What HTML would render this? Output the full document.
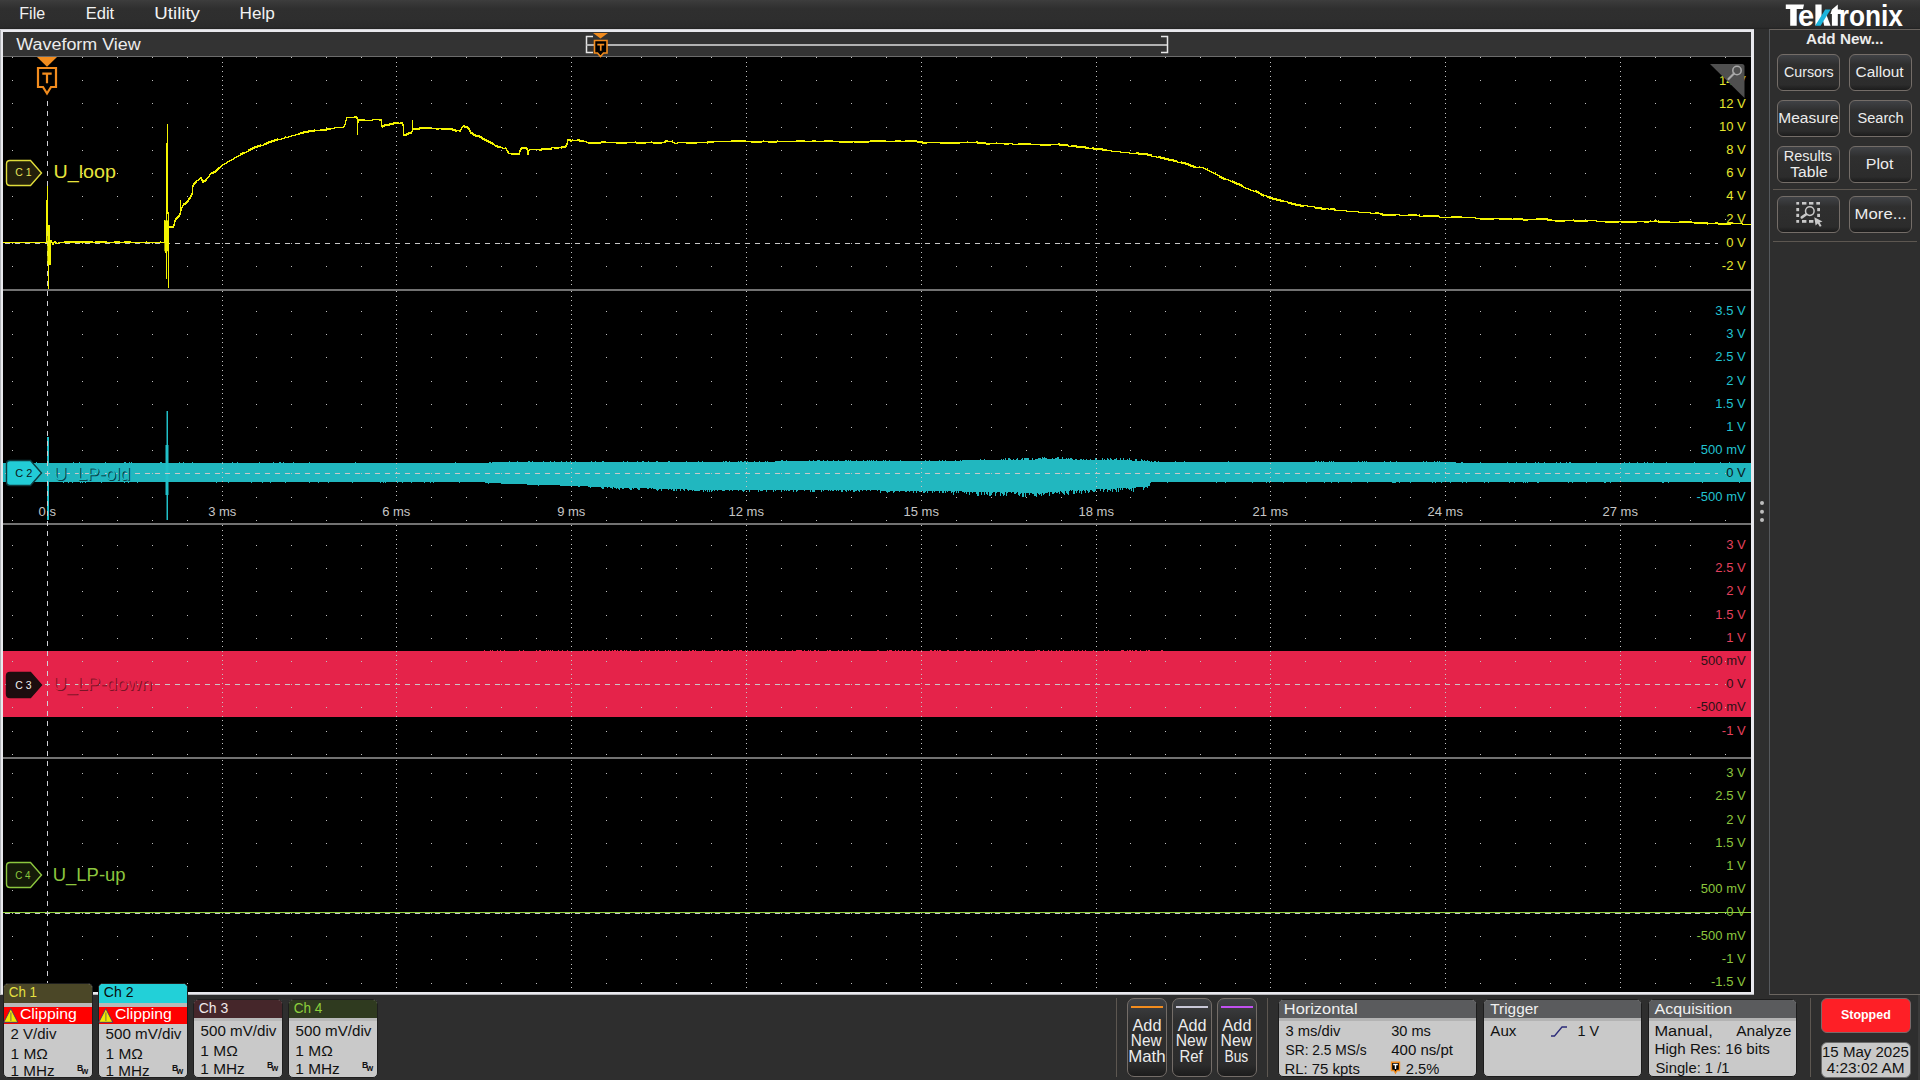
<!DOCTYPE html>
<html><head><meta charset="utf-8"><title>Waveform View</title>
<style>
html,body{margin:0;padding:0;}
body{width:1920px;height:1080px;position:relative;overflow:hidden;background:#2e2e2e;font-family:"Liberation Sans", sans-serif;}
.a{position:absolute;box-sizing:border-box;}
.btn{position:absolute;box-sizing:border-box;border:1.2px solid #746d68;border-radius:6px;background:linear-gradient(#404246 0%,#2f2f2f 28%,#2c2c2c 85%,#1c1c1c 100%);}
svg{position:absolute;left:0;top:0;}
</style></head><body>

<div class="a" style="left:0;top:0;width:1920px;height:29px;background:linear-gradient(#3d3d3d 0px,#363636 4px,#2f2f2f 9px,#2e2e2e 20px,#2b2b2b 27px,#222 29px)"></div>
<div class="a" style="left:0;top:29px;width:1754px;height:966px;background:#e9e9ee"></div>
<div class="a" style="left:0;top:29px;width:1px;height:966px;background:#b2b4b8"></div>
<div class="a" style="left:0;top:994px;width:1754px;height:1px;background:#b6b6ba"></div>
<div class="a" style="left:0;top:29px;width:1754px;height:1px;background:#d6d6da"></div>
<div class="a" style="left:3px;top:32px;width:1748px;height:24px;background:#333333"></div>
<div class="a" style="left:3px;top:56px;width:1748px;height:1px;background:#6c6c6c"></div>
<svg width="1920" height="1080" viewBox="0 0 1920 1080"><rect x="3" y="57" width="1748" height="935" fill="#000"/><clipPath id="gc"><rect x="3" y="57" width="1748" height="935"/></clipPath><g clip-path="url(#gc)"><rect x="3" y="289" width="1748" height="2" fill="#727272"/><rect x="3" y="523" width="1748" height="2" fill="#727272"/><rect x="3" y="757" width="1748" height="2" fill="#727272"/><path d="M3 463h1v19h-1zM4 463h1v19h-1zM5 463h1v19h-1zM6 463h1v19h-1zM7 463h1v19h-1zM8 463h1v19h-1zM9 463h1v19h-1zM10 462h1v20h-1zM11 463h1v19h-1zM12 463h1v19h-1zM13 462h1v20h-1zM14 462h1v20h-1zM15 463h1v19h-1zM16 463h1v20h-1zM17 463h1v19h-1zM18 463h1v19h-1zM19 463h1v19h-1zM20 463h1v19h-1zM21 463h1v19h-1zM22 463h1v19h-1zM23 463h1v19h-1zM24 463h1v19h-1zM25 463h1v19h-1zM26 463h1v19h-1zM27 463h1v19h-1zM28 463h1v20h-1zM29 463h1v19h-1zM30 463h1v19h-1zM31 463h1v20h-1zM32 463h1v19h-1zM33 463h1v19h-1zM34 463h1v19h-1zM35 463h1v19h-1zM36 462h1v20h-1zM37 463h1v19h-1zM38 463h1v19h-1zM39 463h1v19h-1zM40 463h1v19h-1zM41 463h1v19h-1zM42 463h1v19h-1zM43 463h1v19h-1zM44 463h1v19h-1zM45 463h1v19h-1zM46 463h1v19h-1zM47 463h1v19h-1zM48 463h1v19h-1zM49 463h1v19h-1zM50 463h1v19h-1zM51 463h1v19h-1zM52 463h1v19h-1zM53 463h1v19h-1zM54 463h1v19h-1zM55 463h1v19h-1zM56 463h1v19h-1zM57 463h1v19h-1zM58 463h1v19h-1zM59 463h1v19h-1zM60 463h1v19h-1zM61 463h1v19h-1zM62 463h1v19h-1zM63 463h1v20h-1zM64 463h1v19h-1zM65 463h1v19h-1zM66 463h1v19h-1zM67 463h1v19h-1zM68 463h1v20h-1zM69 463h1v19h-1zM70 463h1v19h-1zM71 463h1v19h-1zM72 463h1v20h-1zM73 462h1v20h-1zM74 463h1v19h-1zM75 463h1v19h-1zM76 463h1v19h-1zM77 463h1v19h-1zM78 463h1v19h-1zM79 462h1v20h-1zM80 463h1v20h-1zM81 463h1v19h-1zM82 463h1v20h-1zM83 463h1v19h-1zM84 463h1v19h-1zM85 463h1v20h-1zM86 463h1v19h-1zM87 463h1v19h-1zM88 463h1v19h-1zM89 463h1v19h-1zM90 463h1v19h-1zM91 463h1v19h-1zM92 463h1v19h-1zM93 463h1v19h-1zM94 463h1v19h-1zM95 463h1v19h-1zM96 463h1v19h-1zM97 463h1v19h-1zM98 463h1v19h-1zM99 463h1v19h-1zM100 463h1v19h-1zM101 463h1v20h-1zM102 463h1v19h-1zM103 463h1v19h-1zM104 463h1v19h-1zM105 462h1v20h-1zM106 463h1v19h-1zM107 463h1v19h-1zM108 463h1v19h-1zM109 463h1v19h-1zM110 463h1v19h-1zM111 463h1v19h-1zM112 463h1v19h-1zM113 463h1v19h-1zM114 463h1v19h-1zM115 463h1v19h-1zM116 463h1v19h-1zM117 463h1v19h-1zM118 463h1v19h-1zM119 463h1v19h-1zM120 463h1v19h-1zM121 463h1v19h-1zM122 463h1v19h-1zM123 463h1v19h-1zM124 462h1v21h-1zM125 462h1v20h-1zM126 463h1v19h-1zM127 463h1v19h-1zM128 463h1v20h-1zM129 462h1v20h-1zM130 463h1v19h-1zM131 462h1v20h-1zM132 463h1v19h-1zM133 463h1v19h-1zM134 463h1v19h-1zM135 463h1v19h-1zM136 463h1v19h-1zM137 463h1v20h-1zM138 463h1v19h-1zM139 463h1v19h-1zM140 463h1v19h-1zM141 463h1v19h-1zM142 463h1v19h-1zM143 463h1v19h-1zM144 463h1v19h-1zM145 463h1v19h-1zM146 463h1v19h-1zM147 463h1v19h-1zM148 463h1v19h-1zM149 463h1v19h-1zM150 463h1v19h-1zM151 463h1v19h-1zM152 463h1v19h-1zM153 463h1v19h-1zM154 463h1v19h-1zM155 463h1v19h-1zM156 463h1v19h-1zM157 463h1v19h-1zM158 463h1v19h-1zM159 463h1v19h-1zM160 462h1v20h-1zM161 462h1v20h-1zM162 463h1v19h-1zM163 463h1v19h-1zM164 463h1v19h-1zM165 463h1v19h-1zM166 463h1v19h-1zM167 463h1v19h-1zM168 463h1v19h-1zM169 463h1v19h-1zM170 463h1v19h-1zM171 463h1v19h-1zM172 463h1v19h-1zM173 463h1v19h-1zM174 463h1v19h-1zM175 463h1v19h-1zM176 463h1v19h-1zM177 463h1v19h-1zM178 463h1v19h-1zM179 462h1v20h-1zM180 463h1v19h-1zM181 463h1v19h-1zM182 463h1v19h-1zM183 462h1v20h-1zM184 463h1v19h-1zM185 463h1v19h-1zM186 463h1v19h-1zM187 463h1v19h-1zM188 463h1v19h-1zM189 463h1v19h-1zM190 463h1v19h-1zM191 463h1v19h-1zM192 462h1v20h-1zM193 463h1v19h-1zM194 463h1v19h-1zM195 463h1v19h-1zM196 463h1v19h-1zM197 463h1v19h-1zM198 463h1v19h-1zM199 463h1v19h-1zM200 463h1v19h-1zM201 463h1v19h-1zM202 463h1v19h-1zM203 463h1v19h-1zM204 463h1v19h-1zM205 463h1v19h-1zM206 463h1v19h-1zM207 463h1v19h-1zM208 463h1v19h-1zM209 463h1v19h-1zM210 463h1v19h-1zM211 463h1v19h-1zM212 463h1v19h-1zM213 463h1v19h-1zM214 463h1v19h-1zM215 463h1v19h-1zM216 463h1v20h-1zM217 463h1v19h-1zM218 463h1v19h-1zM219 463h1v19h-1zM220 463h1v19h-1zM221 463h1v19h-1zM222 462h1v20h-1zM223 463h1v19h-1zM224 463h1v19h-1zM225 463h1v19h-1zM226 463h1v19h-1zM227 463h1v19h-1zM228 463h1v20h-1zM229 463h1v19h-1zM230 463h1v19h-1zM231 463h1v19h-1zM232 462h1v20h-1zM233 463h1v19h-1zM234 463h1v19h-1zM235 463h1v19h-1zM236 463h1v19h-1zM237 462h1v20h-1zM238 463h1v19h-1zM239 463h1v19h-1zM240 463h1v19h-1zM241 463h1v19h-1zM242 463h1v19h-1zM243 463h1v19h-1zM244 463h1v19h-1zM245 463h1v19h-1zM246 463h1v19h-1zM247 463h1v19h-1zM248 463h1v19h-1zM249 463h1v19h-1zM250 463h1v19h-1zM251 463h1v20h-1zM252 463h1v19h-1zM253 463h1v19h-1zM254 463h1v19h-1zM255 463h1v19h-1zM256 463h1v19h-1zM257 463h1v19h-1zM258 463h1v19h-1zM259 462h1v20h-1zM260 463h1v19h-1zM261 463h1v19h-1zM262 463h1v20h-1zM263 463h1v19h-1zM264 463h1v19h-1zM265 463h1v19h-1zM266 463h1v19h-1zM267 463h1v19h-1zM268 463h1v19h-1zM269 463h1v19h-1zM270 463h1v20h-1zM271 463h1v19h-1zM272 463h1v19h-1zM273 462h1v20h-1zM274 463h1v19h-1zM275 463h1v19h-1zM276 463h1v19h-1zM277 463h1v19h-1zM278 463h1v19h-1zM279 462h1v20h-1zM280 462h1v20h-1zM281 463h1v19h-1zM282 463h1v19h-1zM283 462h1v20h-1zM284 463h1v19h-1zM285 463h1v20h-1zM286 463h1v19h-1zM287 463h1v19h-1zM288 463h1v19h-1zM289 463h1v19h-1zM290 463h1v19h-1zM291 463h1v19h-1zM292 463h1v19h-1zM293 462h1v20h-1zM294 463h1v19h-1zM295 463h1v19h-1zM296 463h1v19h-1zM297 463h1v19h-1zM298 463h1v19h-1zM299 463h1v19h-1zM300 463h1v19h-1zM301 463h1v19h-1zM302 463h1v19h-1zM303 463h1v19h-1zM304 463h1v19h-1zM305 463h1v19h-1zM306 463h1v19h-1zM307 463h1v19h-1zM308 463h1v19h-1zM309 462h1v21h-1zM310 463h1v19h-1zM311 463h1v19h-1zM312 463h1v19h-1zM313 463h1v19h-1zM314 463h1v19h-1zM315 463h1v19h-1zM316 463h1v19h-1zM317 463h1v19h-1zM318 463h1v20h-1zM319 463h1v19h-1zM320 463h1v19h-1zM321 463h1v19h-1zM322 463h1v19h-1zM323 463h1v19h-1zM324 463h1v19h-1zM325 463h1v19h-1zM326 463h1v19h-1zM327 463h1v19h-1zM328 463h1v20h-1zM329 463h1v19h-1zM330 463h1v19h-1zM331 463h1v19h-1zM332 463h1v19h-1zM333 463h1v19h-1zM334 463h1v19h-1zM335 463h1v19h-1zM336 463h1v19h-1zM337 463h1v19h-1zM338 463h1v19h-1zM339 463h1v19h-1zM340 463h1v19h-1zM341 463h1v19h-1zM342 463h1v19h-1zM343 463h1v19h-1zM344 463h1v19h-1zM345 463h1v19h-1zM346 463h1v19h-1zM347 463h1v19h-1zM348 463h1v19h-1zM349 463h1v19h-1zM350 463h1v19h-1zM351 463h1v19h-1zM352 463h1v20h-1zM353 463h1v19h-1zM354 463h1v19h-1zM355 462h1v20h-1zM356 463h1v19h-1zM357 463h1v19h-1zM358 463h1v19h-1zM359 463h1v19h-1zM360 463h1v19h-1zM361 463h1v19h-1zM362 463h1v19h-1zM363 463h1v19h-1zM364 463h1v19h-1zM365 463h1v19h-1zM366 463h1v19h-1zM367 463h1v19h-1zM368 463h1v19h-1zM369 463h1v19h-1zM370 463h1v19h-1zM371 463h1v19h-1zM372 463h1v19h-1zM373 463h1v19h-1zM374 463h1v19h-1zM375 463h1v19h-1zM376 463h1v19h-1zM377 463h1v19h-1zM378 463h1v19h-1zM379 463h1v19h-1zM380 463h1v20h-1zM381 463h1v19h-1zM382 463h1v19h-1zM383 463h1v20h-1zM384 463h1v19h-1zM385 463h1v20h-1zM386 463h1v19h-1zM387 463h1v19h-1zM388 463h1v19h-1zM389 463h1v19h-1zM390 463h1v19h-1zM391 463h1v19h-1zM392 463h1v19h-1zM393 463h1v19h-1zM394 463h1v19h-1zM395 463h1v19h-1zM396 463h1v19h-1zM397 463h1v20h-1zM398 463h1v19h-1zM399 463h1v19h-1zM400 463h1v19h-1zM401 463h1v19h-1zM402 463h1v20h-1zM403 463h1v19h-1zM404 463h1v19h-1zM405 463h1v19h-1zM406 463h1v19h-1zM407 463h1v19h-1zM408 463h1v19h-1zM409 463h1v19h-1zM410 463h1v19h-1zM411 463h1v20h-1zM412 463h1v19h-1zM413 463h1v19h-1zM414 463h1v19h-1zM415 463h1v19h-1zM416 463h1v19h-1zM417 463h1v19h-1zM418 463h1v19h-1zM419 463h1v19h-1zM420 463h1v19h-1zM421 463h1v19h-1zM422 463h1v19h-1zM423 463h1v19h-1zM424 463h1v20h-1zM425 463h1v19h-1zM426 463h1v19h-1zM427 463h1v19h-1zM428 463h1v19h-1zM429 463h1v19h-1zM430 463h1v20h-1zM431 463h1v19h-1zM432 463h1v19h-1zM433 463h1v20h-1zM434 463h1v19h-1zM435 463h1v19h-1zM436 463h1v19h-1zM437 463h1v19h-1zM438 463h1v19h-1zM439 463h1v19h-1zM440 463h1v19h-1zM441 463h1v19h-1zM442 463h1v19h-1zM443 463h1v19h-1zM444 463h1v19h-1zM445 463h1v19h-1zM446 463h1v19h-1zM447 463h1v19h-1zM448 463h1v19h-1zM449 463h1v19h-1zM450 463h1v19h-1zM451 463h1v19h-1zM452 463h1v19h-1zM453 463h1v19h-1zM454 463h1v19h-1zM455 462h1v20h-1zM456 463h1v19h-1zM457 463h1v19h-1zM458 463h1v19h-1zM459 463h1v20h-1zM460 463h1v19h-1zM461 463h1v19h-1zM462 463h1v19h-1zM463 463h1v19h-1zM464 463h1v19h-1zM465 463h1v19h-1zM466 463h1v19h-1zM467 463h1v19h-1zM468 463h1v19h-1zM469 463h1v19h-1zM470 463h1v19h-1zM471 463h1v19h-1zM472 463h1v19h-1zM473 463h1v19h-1zM474 463h1v19h-1zM475 463h1v19h-1zM476 463h1v19h-1zM477 463h1v19h-1zM478 463h1v19h-1zM479 463h1v19h-1zM480 463h1v19h-1zM481 463h1v19h-1zM482 463h1v19h-1zM483 463h1v19h-1zM484 463h1v19h-1zM485 463h1v20h-1zM486 463h1v20h-1zM487 463h1v20h-1zM488 463h1v21h-1zM489 462h1v21h-1zM490 462h1v21h-1zM491 463h1v20h-1zM492 462h1v21h-1zM493 462h1v21h-1zM494 462h1v21h-1zM495 462h1v21h-1zM496 462h1v21h-1zM497 462h1v21h-1zM498 462h1v21h-1zM499 462h1v21h-1zM500 462h1v21h-1zM501 462h1v22h-1zM502 462h1v22h-1zM503 462h1v22h-1zM504 462h1v22h-1zM505 462h1v22h-1zM506 462h1v22h-1zM507 462h1v22h-1zM508 462h1v22h-1zM509 461h1v23h-1zM510 462h1v22h-1zM511 462h1v22h-1zM512 462h1v22h-1zM513 462h1v22h-1zM514 462h1v22h-1zM515 462h1v22h-1zM516 462h1v22h-1zM517 461h1v23h-1zM518 462h1v22h-1zM519 462h1v22h-1zM520 462h1v22h-1zM521 462h1v22h-1zM522 462h1v22h-1zM523 462h1v22h-1zM524 462h1v22h-1zM525 462h1v22h-1zM526 462h1v22h-1zM527 462h1v23h-1zM528 461h1v24h-1zM529 461h1v24h-1zM530 462h1v23h-1zM531 462h1v23h-1zM532 461h1v24h-1zM533 462h1v23h-1zM534 462h1v23h-1zM535 462h1v23h-1zM536 462h1v23h-1zM537 462h1v23h-1zM538 462h1v24h-1zM539 462h1v23h-1zM540 462h1v23h-1zM541 462h1v23h-1zM542 462h1v23h-1zM543 461h1v24h-1zM544 462h1v23h-1zM545 462h1v23h-1zM546 462h1v23h-1zM547 462h1v23h-1zM548 462h1v23h-1zM549 462h1v23h-1zM550 461h1v24h-1zM551 462h1v23h-1zM552 462h1v23h-1zM553 462h1v23h-1zM554 461h1v24h-1zM555 462h1v23h-1zM556 462h1v23h-1zM557 462h1v23h-1zM558 462h1v23h-1zM559 462h1v23h-1zM560 462h1v24h-1zM561 461h1v25h-1zM562 462h1v24h-1zM563 462h1v24h-1zM564 462h1v24h-1zM565 462h1v24h-1zM566 461h1v25h-1zM567 462h1v24h-1zM568 462h1v24h-1zM569 462h1v24h-1zM570 461h1v25h-1zM571 462h1v24h-1zM572 462h1v24h-1zM573 462h1v24h-1zM574 462h1v24h-1zM575 461h1v25h-1zM576 462h1v24h-1zM577 462h1v24h-1zM578 462h1v25h-1zM579 462h1v25h-1zM580 462h1v24h-1zM581 462h1v24h-1zM582 462h1v24h-1zM583 462h1v24h-1zM584 462h1v24h-1zM585 462h1v24h-1zM586 462h1v24h-1zM587 462h1v24h-1zM588 462h1v25h-1zM589 462h1v25h-1zM590 462h1v26h-1zM591 461h1v26h-1zM592 462h1v25h-1zM593 462h1v25h-1zM594 462h1v25h-1zM595 461h1v26h-1zM596 462h1v25h-1zM597 462h1v25h-1zM598 462h1v25h-1zM599 462h1v25h-1zM600 462h1v25h-1zM601 462h1v26h-1zM602 461h1v28h-1zM603 461h1v28h-1zM604 462h1v25h-1zM605 462h1v25h-1zM606 462h1v25h-1zM607 462h1v26h-1zM608 462h1v25h-1zM609 462h1v25h-1zM610 462h1v26h-1zM611 462h1v26h-1zM612 462h1v27h-1zM613 462h1v25h-1zM614 462h1v26h-1zM615 462h1v26h-1zM616 462h1v27h-1zM617 462h1v26h-1zM618 462h1v27h-1zM619 462h1v28h-1zM620 462h1v26h-1zM621 462h1v26h-1zM622 462h1v27h-1zM623 461h1v28h-1zM624 462h1v26h-1zM625 462h1v26h-1zM626 462h1v26h-1zM627 461h1v27h-1zM628 462h1v26h-1zM629 462h1v27h-1zM630 462h1v28h-1zM631 462h1v28h-1zM632 462h1v26h-1zM633 462h1v27h-1zM634 462h1v26h-1zM635 462h1v26h-1zM636 462h1v26h-1zM637 461h1v28h-1zM638 462h1v28h-1zM639 462h1v28h-1zM640 462h1v26h-1zM641 462h1v26h-1zM642 461h1v27h-1zM643 461h1v27h-1zM644 462h1v26h-1zM645 462h1v26h-1zM646 462h1v26h-1zM647 462h1v27h-1zM648 461h1v28h-1zM649 462h1v26h-1zM650 462h1v26h-1zM651 462h1v27h-1zM652 462h1v26h-1zM653 462h1v27h-1zM654 462h1v27h-1zM655 462h1v27h-1zM656 461h1v29h-1zM657 461h1v30h-1zM658 462h1v28h-1zM659 462h1v27h-1zM660 462h1v27h-1zM661 462h1v29h-1zM662 462h1v27h-1zM663 462h1v27h-1zM664 462h1v27h-1zM665 462h1v27h-1zM666 462h1v27h-1zM667 462h1v27h-1zM668 461h1v29h-1zM669 461h1v28h-1zM670 462h1v27h-1zM671 462h1v28h-1zM672 462h1v27h-1zM673 462h1v29h-1zM674 462h1v29h-1zM675 462h1v27h-1zM676 462h1v29h-1zM677 462h1v27h-1zM678 462h1v27h-1zM679 462h1v27h-1zM680 462h1v29h-1zM681 462h1v27h-1zM682 462h1v27h-1zM683 462h1v28h-1zM684 462h1v29h-1zM685 462h1v27h-1zM686 461h1v28h-1zM687 462h1v28h-1zM688 462h1v29h-1zM689 462h1v28h-1zM690 462h1v28h-1zM691 462h1v28h-1zM692 462h1v29h-1zM693 462h1v28h-1zM694 462h1v29h-1zM695 462h1v29h-1zM696 462h1v29h-1zM697 462h1v29h-1zM698 461h1v30h-1zM699 462h1v29h-1zM700 462h1v28h-1zM701 462h1v28h-1zM702 461h1v29h-1zM703 462h1v30h-1zM704 462h1v28h-1zM705 462h1v29h-1zM706 462h1v28h-1zM707 462h1v30h-1zM708 462h1v28h-1zM709 462h1v30h-1zM710 462h1v28h-1zM711 462h1v30h-1zM712 462h1v29h-1zM713 462h1v28h-1zM714 462h1v29h-1zM715 462h1v28h-1zM716 462h1v28h-1zM717 462h1v29h-1zM718 462h1v28h-1zM719 462h1v28h-1zM720 462h1v28h-1zM721 462h1v28h-1zM722 462h1v29h-1zM723 461h1v30h-1zM724 462h1v29h-1zM725 461h1v29h-1zM726 461h1v29h-1zM727 462h1v28h-1zM728 462h1v28h-1zM729 461h1v30h-1zM730 462h1v28h-1zM731 462h1v28h-1zM732 462h1v29h-1zM733 462h1v28h-1zM734 462h1v28h-1zM735 462h1v28h-1zM736 462h1v28h-1zM737 462h1v28h-1zM738 461h1v30h-1zM739 462h1v28h-1zM740 461h1v29h-1zM741 461h1v29h-1zM742 462h1v29h-1zM743 462h1v30h-1zM744 461h1v30h-1zM745 461h1v29h-1zM746 462h1v28h-1zM747 461h1v29h-1zM748 462h1v28h-1zM749 462h1v30h-1zM750 462h1v28h-1zM751 462h1v28h-1zM752 462h1v28h-1zM753 462h1v28h-1zM754 461h1v29h-1zM755 462h1v28h-1zM756 462h1v28h-1zM757 462h1v28h-1zM758 462h1v30h-1zM759 461h1v29h-1zM760 462h1v29h-1zM761 462h1v29h-1zM762 462h1v29h-1zM763 462h1v28h-1zM764 462h1v28h-1zM765 461h1v29h-1zM766 462h1v30h-1zM767 461h1v29h-1zM768 462h1v28h-1zM769 462h1v28h-1zM770 462h1v28h-1zM771 462h1v28h-1zM772 462h1v28h-1zM773 462h1v30h-1zM774 462h1v28h-1zM775 461h1v30h-1zM776 461h1v29h-1zM777 461h1v29h-1zM778 461h1v29h-1zM779 461h1v29h-1zM780 461h1v29h-1zM781 460h1v32h-1zM782 460h1v30h-1zM783 461h1v29h-1zM784 461h1v30h-1zM785 461h1v29h-1zM786 460h1v31h-1zM787 461h1v29h-1zM788 461h1v30h-1zM789 461h1v30h-1zM790 461h1v29h-1zM791 461h1v29h-1zM792 461h1v29h-1zM793 461h1v31h-1zM794 461h1v29h-1zM795 461h1v29h-1zM796 461h1v31h-1zM797 461h1v30h-1zM798 461h1v29h-1zM799 461h1v29h-1zM800 461h1v29h-1zM801 461h1v29h-1zM802 461h1v29h-1zM803 461h1v29h-1zM804 461h1v30h-1zM805 461h1v29h-1zM806 461h1v29h-1zM807 461h1v29h-1zM808 461h1v29h-1zM809 460h1v30h-1zM810 461h1v31h-1zM811 461h1v29h-1zM812 461h1v31h-1zM813 460h1v32h-1zM814 461h1v31h-1zM815 461h1v29h-1zM816 461h1v29h-1zM817 460h1v30h-1zM818 460h1v30h-1zM819 460h1v30h-1zM820 461h1v29h-1zM821 461h1v31h-1zM822 461h1v29h-1zM823 460h1v31h-1zM824 461h1v29h-1zM825 461h1v29h-1zM826 461h1v29h-1zM827 460h1v30h-1zM828 461h1v30h-1zM829 461h1v29h-1zM830 461h1v30h-1zM831 461h1v29h-1zM832 461h1v30h-1zM833 460h1v31h-1zM834 461h1v29h-1zM835 461h1v29h-1zM836 461h1v30h-1zM837 461h1v29h-1zM838 460h1v31h-1zM839 461h1v29h-1zM840 461h1v29h-1zM841 461h1v31h-1zM842 461h1v31h-1zM843 461h1v29h-1zM844 461h1v29h-1zM845 460h1v31h-1zM846 460h1v32h-1zM847 461h1v29h-1zM848 460h1v31h-1zM849 461h1v29h-1zM850 460h1v31h-1zM851 461h1v29h-1zM852 461h1v29h-1zM853 461h1v31h-1zM854 461h1v31h-1zM855 461h1v30h-1zM856 460h1v31h-1zM857 461h1v29h-1zM858 461h1v30h-1zM859 461h1v31h-1zM860 461h1v29h-1zM861 461h1v29h-1zM862 461h1v30h-1zM863 460h1v30h-1zM864 461h1v29h-1zM865 461h1v29h-1zM866 461h1v30h-1zM867 460h1v30h-1zM868 461h1v29h-1zM869 460h1v30h-1zM870 461h1v30h-1zM871 460h1v30h-1zM872 461h1v29h-1zM873 460h1v30h-1zM874 461h1v29h-1zM875 461h1v29h-1zM876 460h1v30h-1zM877 461h1v30h-1zM878 461h1v29h-1zM879 461h1v29h-1zM880 461h1v32h-1zM881 461h1v30h-1zM882 461h1v30h-1zM883 460h1v31h-1zM884 461h1v30h-1zM885 460h1v31h-1zM886 461h1v31h-1zM887 461h1v32h-1zM888 461h1v31h-1zM889 460h1v32h-1zM890 461h1v30h-1zM891 461h1v30h-1zM892 461h1v30h-1zM893 461h1v32h-1zM894 461h1v31h-1zM895 461h1v30h-1zM896 461h1v30h-1zM897 461h1v30h-1zM898 461h1v30h-1zM899 461h1v31h-1zM900 460h1v31h-1zM901 461h1v30h-1zM902 461h1v30h-1zM903 461h1v30h-1zM904 461h1v30h-1zM905 461h1v31h-1zM906 461h1v31h-1zM907 461h1v30h-1zM908 461h1v30h-1zM909 461h1v31h-1zM910 461h1v30h-1zM911 461h1v30h-1zM912 461h1v30h-1zM913 461h1v32h-1zM914 461h1v30h-1zM915 461h1v30h-1zM916 461h1v32h-1zM917 461h1v30h-1zM918 461h1v30h-1zM919 461h1v31h-1zM920 461h1v31h-1zM921 461h1v30h-1zM922 461h1v30h-1zM923 461h1v32h-1zM924 461h1v32h-1zM925 460h1v32h-1zM926 461h1v30h-1zM927 461h1v32h-1zM928 461h1v30h-1zM929 460h1v31h-1zM930 461h1v30h-1zM931 461h1v30h-1zM932 461h1v32h-1zM933 461h1v30h-1zM934 461h1v31h-1zM935 461h1v30h-1zM936 461h1v30h-1zM937 461h1v30h-1zM938 461h1v30h-1zM939 460h1v33h-1zM940 461h1v30h-1zM941 461h1v30h-1zM942 460h1v33h-1zM943 461h1v32h-1zM944 461h1v30h-1zM945 460h1v33h-1zM946 461h1v30h-1zM947 461h1v31h-1zM948 461h1v30h-1zM949 461h1v30h-1zM950 461h1v30h-1zM951 461h1v32h-1zM952 461h1v31h-1zM953 461h1v34h-1zM954 461h1v31h-1zM955 460h1v31h-1zM956 461h1v32h-1zM957 461h1v30h-1zM958 461h1v32h-1zM959 461h1v30h-1zM960 460h1v31h-1zM961 461h1v30h-1zM962 460h1v32h-1zM963 460h1v32h-1zM964 460h1v33h-1zM965 460h1v32h-1zM966 460h1v34h-1zM967 460h1v32h-1zM968 460h1v32h-1zM969 460h1v35h-1zM970 460h1v32h-1zM971 460h1v32h-1zM972 460h1v33h-1zM973 460h1v32h-1zM974 460h1v32h-1zM975 460h1v32h-1zM976 460h1v34h-1zM977 460h1v36h-1zM978 460h1v36h-1zM979 460h1v32h-1zM980 459h1v33h-1zM981 460h1v35h-1zM982 460h1v32h-1zM983 460h1v32h-1zM984 459h1v36h-1zM985 460h1v32h-1zM986 460h1v34h-1zM987 460h1v35h-1zM988 460h1v32h-1zM989 460h1v36h-1zM990 460h1v36h-1zM991 460h1v35h-1zM992 460h1v33h-1zM993 460h1v32h-1zM994 460h1v32h-1zM995 460h1v36h-1zM996 460h1v33h-1zM997 460h1v32h-1zM998 460h1v32h-1zM999 460h1v32h-1zM1000 460h1v36h-1zM1001 459h1v34h-1zM1002 460h1v34h-1zM1003 459h1v37h-1zM1004 460h1v35h-1zM1005 458h1v34h-1zM1006 460h1v36h-1zM1007 460h1v33h-1zM1008 458h1v34h-1zM1009 458h1v34h-1zM1010 459h1v33h-1zM1011 460h1v33h-1zM1012 460h1v32h-1zM1013 459h1v33h-1zM1014 460h1v34h-1zM1015 460h1v34h-1zM1016 459h1v34h-1zM1017 458h1v34h-1zM1018 460h1v35h-1zM1019 460h1v36h-1zM1020 460h1v34h-1zM1021 459h1v34h-1zM1022 458h1v39h-1zM1023 460h1v37h-1zM1024 458h1v35h-1zM1025 458h1v39h-1zM1026 458h1v35h-1zM1027 458h1v35h-1zM1028 458h1v35h-1zM1029 460h1v35h-1zM1030 460h1v33h-1zM1031 460h1v33h-1zM1032 458h1v36h-1zM1033 460h1v34h-1zM1034 460h1v36h-1zM1035 459h1v37h-1zM1036 459h1v38h-1zM1037 459h1v34h-1zM1038 458h1v36h-1zM1039 458h1v37h-1zM1040 458h1v36h-1zM1041 459h1v37h-1zM1042 457h1v36h-1zM1043 458h1v37h-1zM1044 457h1v37h-1zM1045 458h1v35h-1zM1046 458h1v35h-1zM1047 459h1v34h-1zM1048 459h1v33h-1zM1049 459h1v37h-1zM1050 459h1v33h-1zM1051 459h1v33h-1zM1052 458h1v36h-1zM1053 459h1v35h-1zM1054 459h1v34h-1zM1055 458h1v34h-1zM1056 458h1v35h-1zM1057 457h1v36h-1zM1058 457h1v35h-1zM1059 459h1v35h-1zM1060 459h1v32h-1zM1061 459h1v33h-1zM1062 457h1v36h-1zM1063 459h1v35h-1zM1064 459h1v36h-1zM1065 459h1v32h-1zM1066 458h1v35h-1zM1067 459h1v35h-1zM1068 458h1v37h-1zM1069 459h1v32h-1zM1070 458h1v32h-1zM1071 458h1v33h-1zM1072 459h1v31h-1zM1073 460h1v34h-1zM1074 460h1v34h-1zM1075 459h1v32h-1zM1076 459h1v34h-1zM1077 460h1v31h-1zM1078 460h1v30h-1zM1079 460h1v33h-1zM1080 459h1v32h-1zM1081 459h1v35h-1zM1082 460h1v31h-1zM1083 459h1v31h-1zM1084 460h1v31h-1zM1085 460h1v33h-1zM1086 459h1v31h-1zM1087 460h1v31h-1zM1088 460h1v33h-1zM1089 460h1v32h-1zM1090 459h1v31h-1zM1091 460h1v30h-1zM1092 460h1v31h-1zM1093 460h1v32h-1zM1094 460h1v32h-1zM1095 458h1v33h-1zM1096 459h1v30h-1zM1097 460h1v29h-1zM1098 460h1v29h-1zM1099 460h1v29h-1zM1100 460h1v31h-1zM1101 460h1v29h-1zM1102 458h1v31h-1zM1103 460h1v32h-1zM1104 459h1v31h-1zM1105 460h1v29h-1zM1106 460h1v29h-1zM1107 458h1v34h-1zM1108 459h1v31h-1zM1109 460h1v30h-1zM1110 458h1v33h-1zM1111 459h1v30h-1zM1112 460h1v32h-1zM1113 460h1v29h-1zM1114 459h1v30h-1zM1115 459h1v31h-1zM1116 458h1v34h-1zM1117 460h1v28h-1zM1118 460h1v32h-1zM1119 460h1v28h-1zM1120 458h1v32h-1zM1121 460h1v28h-1zM1122 460h1v30h-1zM1123 458h1v30h-1zM1124 460h1v28h-1zM1125 460h1v28h-1zM1126 460h1v29h-1zM1127 459h1v29h-1zM1128 460h1v29h-1zM1129 458h1v32h-1zM1130 460h1v29h-1zM1131 460h1v31h-1zM1132 461h1v27h-1zM1133 461h1v31h-1zM1134 461h1v27h-1zM1135 459h1v29h-1zM1136 459h1v28h-1zM1137 461h1v26h-1zM1138 461h1v26h-1zM1139 461h1v26h-1zM1140 461h1v26h-1zM1141 459h1v28h-1zM1142 460h1v27h-1zM1143 461h1v29h-1zM1144 460h1v28h-1zM1145 461h1v26h-1zM1146 461h1v26h-1zM1147 460h1v28h-1zM1148 461h1v25h-1zM1149 461h1v25h-1zM1150 462h1v21h-1zM1151 461h1v21h-1zM1152 462h1v20h-1zM1153 462h1v20h-1zM1154 461h1v21h-1zM1155 461h1v21h-1zM1156 462h1v20h-1zM1157 462h1v20h-1zM1158 461h1v21h-1zM1159 462h1v20h-1zM1160 462h1v20h-1zM1161 462h1v20h-1zM1162 462h1v20h-1zM1163 462h1v20h-1zM1164 462h1v20h-1zM1165 462h1v20h-1zM1166 462h1v20h-1zM1167 462h1v21h-1zM1168 462h1v20h-1zM1169 462h1v20h-1zM1170 462h1v20h-1zM1171 462h1v20h-1zM1172 462h1v20h-1zM1173 462h1v20h-1zM1174 462h1v20h-1zM1175 461h1v21h-1zM1176 462h1v20h-1zM1177 462h1v20h-1zM1178 462h1v20h-1zM1179 462h1v20h-1zM1180 462h1v20h-1zM1181 462h1v20h-1zM1182 462h1v20h-1zM1183 462h1v20h-1zM1184 461h1v21h-1zM1185 462h1v20h-1zM1186 462h1v20h-1zM1187 462h1v20h-1zM1188 462h1v20h-1zM1189 462h1v20h-1zM1190 462h1v20h-1zM1191 462h1v20h-1zM1192 462h1v20h-1zM1193 462h1v20h-1zM1194 462h1v20h-1zM1195 462h1v20h-1zM1196 462h1v20h-1zM1197 462h1v20h-1zM1198 462h1v20h-1zM1199 462h1v20h-1zM1200 462h1v20h-1zM1201 462h1v20h-1zM1202 462h1v20h-1zM1203 462h1v20h-1zM1204 462h1v20h-1zM1205 462h1v20h-1zM1206 462h1v20h-1zM1207 462h1v20h-1zM1208 462h1v20h-1zM1209 462h1v20h-1zM1210 462h1v20h-1zM1211 462h1v20h-1zM1212 462h1v20h-1zM1213 462h1v20h-1zM1214 462h1v20h-1zM1215 462h1v20h-1zM1216 462h1v21h-1zM1217 462h1v20h-1zM1218 462h1v20h-1zM1219 462h1v20h-1zM1220 462h1v20h-1zM1221 462h1v20h-1zM1222 462h1v20h-1zM1223 462h1v20h-1zM1224 462h1v20h-1zM1225 462h1v21h-1zM1226 462h1v20h-1zM1227 462h1v20h-1zM1228 461h1v21h-1zM1229 462h1v20h-1zM1230 462h1v20h-1zM1231 462h1v20h-1zM1232 462h1v20h-1zM1233 462h1v20h-1zM1234 462h1v20h-1zM1235 462h1v20h-1zM1236 462h1v20h-1zM1237 462h1v20h-1zM1238 462h1v20h-1zM1239 462h1v20h-1zM1240 462h1v20h-1zM1241 462h1v20h-1zM1242 462h1v20h-1zM1243 462h1v20h-1zM1244 462h1v20h-1zM1245 462h1v20h-1zM1246 462h1v20h-1zM1247 462h1v20h-1zM1248 462h1v20h-1zM1249 462h1v20h-1zM1250 462h1v20h-1zM1251 462h1v20h-1zM1252 462h1v21h-1zM1253 462h1v20h-1zM1254 462h1v20h-1zM1255 462h1v20h-1zM1256 462h1v20h-1zM1257 462h1v20h-1zM1258 462h1v20h-1zM1259 462h1v20h-1zM1260 462h1v20h-1zM1261 462h1v20h-1zM1262 462h1v20h-1zM1263 462h1v20h-1zM1264 462h1v20h-1zM1265 462h1v20h-1zM1266 462h1v21h-1zM1267 462h1v20h-1zM1268 462h1v20h-1zM1269 462h1v21h-1zM1270 462h1v20h-1zM1271 462h1v20h-1zM1272 462h1v20h-1zM1273 462h1v20h-1zM1274 462h1v20h-1zM1275 462h1v20h-1zM1276 462h1v20h-1zM1277 462h1v20h-1zM1278 462h1v20h-1zM1279 462h1v20h-1zM1280 462h1v20h-1zM1281 462h1v20h-1zM1282 462h1v20h-1zM1283 462h1v21h-1zM1284 462h1v20h-1zM1285 462h1v20h-1zM1286 462h1v20h-1zM1287 462h1v20h-1zM1288 462h1v20h-1zM1289 462h1v20h-1zM1290 462h1v20h-1zM1291 462h1v20h-1zM1292 462h1v20h-1zM1293 462h1v20h-1zM1294 462h1v20h-1zM1295 462h1v20h-1zM1296 462h1v20h-1zM1297 462h1v20h-1zM1298 462h1v20h-1zM1299 462h1v20h-1zM1300 462h1v20h-1zM1301 462h1v20h-1zM1302 462h1v20h-1zM1303 462h1v20h-1zM1304 462h1v20h-1zM1305 462h1v20h-1zM1306 462h1v21h-1zM1307 462h1v20h-1zM1308 462h1v20h-1zM1309 462h1v20h-1zM1310 462h1v20h-1zM1311 462h1v20h-1zM1312 462h1v20h-1zM1313 462h1v20h-1zM1314 462h1v20h-1zM1315 461h1v21h-1zM1316 461h1v21h-1zM1317 462h1v20h-1zM1318 461h1v21h-1zM1319 462h1v20h-1zM1320 462h1v20h-1zM1321 461h1v21h-1zM1322 462h1v20h-1zM1323 461h1v21h-1zM1324 462h1v21h-1zM1325 462h1v20h-1zM1326 462h1v20h-1zM1327 462h1v20h-1zM1328 462h1v20h-1zM1329 461h1v21h-1zM1330 462h1v20h-1zM1331 461h1v22h-1zM1332 462h1v20h-1zM1333 461h1v21h-1zM1334 462h1v20h-1zM1335 462h1v20h-1zM1336 462h1v20h-1zM1337 462h1v20h-1zM1338 462h1v21h-1zM1339 462h1v20h-1zM1340 462h1v20h-1zM1341 462h1v20h-1zM1342 462h1v20h-1zM1343 462h1v20h-1zM1344 462h1v20h-1zM1345 462h1v20h-1zM1346 462h1v20h-1zM1347 462h1v20h-1zM1348 462h1v20h-1zM1349 462h1v20h-1zM1350 462h1v20h-1zM1351 462h1v21h-1zM1352 462h1v20h-1zM1353 462h1v20h-1zM1354 462h1v20h-1zM1355 462h1v20h-1zM1356 462h1v20h-1zM1357 462h1v20h-1zM1358 461h1v21h-1zM1359 462h1v20h-1zM1360 462h1v20h-1zM1361 462h1v20h-1zM1362 461h1v21h-1zM1363 462h1v20h-1zM1364 461h1v21h-1zM1365 462h1v20h-1zM1366 461h1v21h-1zM1367 462h1v21h-1zM1368 462h1v20h-1zM1369 462h1v20h-1zM1370 462h1v20h-1zM1371 462h1v20h-1zM1372 462h1v20h-1zM1373 462h1v20h-1zM1374 462h1v20h-1zM1375 462h1v20h-1zM1376 462h1v20h-1zM1377 462h1v20h-1zM1378 462h1v20h-1zM1379 462h1v20h-1zM1380 462h1v20h-1zM1381 462h1v20h-1zM1382 462h1v20h-1zM1383 462h1v20h-1zM1384 461h1v21h-1zM1385 462h1v20h-1zM1386 462h1v20h-1zM1387 462h1v20h-1zM1388 462h1v20h-1zM1389 462h1v20h-1zM1390 461h1v21h-1zM1391 462h1v20h-1zM1392 462h1v21h-1zM1393 462h1v21h-1zM1394 462h1v21h-1zM1395 462h1v21h-1zM1396 461h1v21h-1zM1397 462h1v20h-1zM1398 462h1v20h-1zM1399 462h1v21h-1zM1400 462h1v20h-1zM1401 462h1v20h-1zM1402 462h1v20h-1zM1403 462h1v20h-1zM1404 462h1v20h-1zM1405 462h1v20h-1zM1406 462h1v20h-1zM1407 462h1v20h-1zM1408 462h1v20h-1zM1409 462h1v20h-1zM1410 462h1v21h-1zM1411 462h1v20h-1zM1412 462h1v20h-1zM1413 462h1v20h-1zM1414 462h1v20h-1zM1415 462h1v20h-1zM1416 462h1v20h-1zM1417 462h1v20h-1zM1418 462h1v20h-1zM1419 462h1v20h-1zM1420 462h1v20h-1zM1421 462h1v20h-1zM1422 462h1v20h-1zM1423 461h1v21h-1zM1424 462h1v20h-1zM1425 462h1v20h-1zM1426 461h1v21h-1zM1427 462h1v20h-1zM1428 462h1v20h-1zM1429 462h1v20h-1zM1430 462h1v20h-1zM1431 462h1v20h-1zM1432 462h1v21h-1zM1433 462h1v20h-1zM1434 461h1v21h-1zM1435 462h1v21h-1zM1436 462h1v20h-1zM1437 461h1v21h-1zM1438 462h1v20h-1zM1439 461h1v21h-1zM1440 462h1v20h-1zM1441 462h1v21h-1zM1442 462h1v20h-1zM1443 462h1v20h-1zM1444 462h1v20h-1zM1445 462h1v20h-1zM1446 462h1v20h-1zM1447 462h1v20h-1zM1448 462h1v20h-1zM1449 462h1v20h-1zM1450 462h1v21h-1zM1451 462h1v20h-1zM1452 462h1v20h-1zM1453 462h1v20h-1zM1454 462h1v20h-1zM1455 462h1v20h-1zM1456 463h1v19h-1zM1457 463h1v19h-1zM1458 463h1v19h-1zM1459 463h1v19h-1zM1460 463h1v19h-1zM1461 462h1v20h-1zM1462 462h1v21h-1zM1463 463h1v19h-1zM1464 463h1v19h-1zM1465 463h1v19h-1zM1466 463h1v20h-1zM1467 463h1v19h-1zM1468 463h1v19h-1zM1469 463h1v19h-1zM1470 463h1v19h-1zM1471 463h1v19h-1zM1472 463h1v19h-1zM1473 463h1v19h-1zM1474 463h1v19h-1zM1475 463h1v19h-1zM1476 463h1v19h-1zM1477 463h1v19h-1zM1478 463h1v19h-1zM1479 463h1v19h-1zM1480 462h1v20h-1zM1481 463h1v19h-1zM1482 463h1v19h-1zM1483 463h1v19h-1zM1484 463h1v20h-1zM1485 463h1v19h-1zM1486 463h1v19h-1zM1487 463h1v19h-1zM1488 463h1v20h-1zM1489 463h1v19h-1zM1490 463h1v19h-1zM1491 463h1v19h-1zM1492 463h1v19h-1zM1493 463h1v19h-1zM1494 463h1v19h-1zM1495 463h1v19h-1zM1496 463h1v19h-1zM1497 463h1v19h-1zM1498 463h1v19h-1zM1499 463h1v19h-1zM1500 463h1v19h-1zM1501 463h1v19h-1zM1502 463h1v19h-1zM1503 463h1v19h-1zM1504 463h1v19h-1zM1505 463h1v19h-1zM1506 463h1v19h-1zM1507 462h1v20h-1zM1508 463h1v19h-1zM1509 463h1v20h-1zM1510 463h1v19h-1zM1511 463h1v19h-1zM1512 463h1v19h-1zM1513 463h1v19h-1zM1514 463h1v20h-1zM1515 463h1v19h-1zM1516 462h1v20h-1zM1517 463h1v19h-1zM1518 463h1v19h-1zM1519 463h1v19h-1zM1520 463h1v19h-1zM1521 463h1v19h-1zM1522 463h1v19h-1zM1523 463h1v20h-1zM1524 463h1v19h-1zM1525 463h1v20h-1zM1526 462h1v20h-1zM1527 463h1v20h-1zM1528 463h1v19h-1zM1529 463h1v19h-1zM1530 463h1v19h-1zM1531 463h1v19h-1zM1532 463h1v19h-1zM1533 463h1v19h-1zM1534 463h1v19h-1zM1535 462h1v20h-1zM1536 463h1v19h-1zM1537 463h1v20h-1zM1538 462h1v21h-1zM1539 463h1v19h-1zM1540 463h1v19h-1zM1541 463h1v19h-1zM1542 463h1v19h-1zM1543 463h1v19h-1zM1544 462h1v20h-1zM1545 463h1v19h-1zM1546 463h1v19h-1zM1547 463h1v19h-1zM1548 463h1v19h-1zM1549 463h1v19h-1zM1550 463h1v19h-1zM1551 463h1v19h-1zM1552 463h1v19h-1zM1553 463h1v19h-1zM1554 463h1v19h-1zM1555 463h1v19h-1zM1556 462h1v20h-1zM1557 463h1v19h-1zM1558 463h1v19h-1zM1559 463h1v19h-1zM1560 462h1v20h-1zM1561 463h1v19h-1zM1562 463h1v19h-1zM1563 463h1v19h-1zM1564 463h1v19h-1zM1565 463h1v19h-1zM1566 462h1v20h-1zM1567 463h1v19h-1zM1568 463h1v20h-1zM1569 462h1v20h-1zM1570 462h1v20h-1zM1571 463h1v19h-1zM1572 463h1v20h-1zM1573 463h1v19h-1zM1574 463h1v19h-1zM1575 463h1v19h-1zM1576 463h1v19h-1zM1577 463h1v19h-1zM1578 463h1v19h-1zM1579 463h1v19h-1zM1580 463h1v19h-1zM1581 463h1v19h-1zM1582 463h1v19h-1zM1583 463h1v19h-1zM1584 463h1v19h-1zM1585 463h1v19h-1zM1586 463h1v20h-1zM1587 463h1v19h-1zM1588 463h1v19h-1zM1589 463h1v19h-1zM1590 463h1v19h-1zM1591 463h1v19h-1zM1592 463h1v19h-1zM1593 463h1v19h-1zM1594 463h1v19h-1zM1595 463h1v19h-1zM1596 462h1v20h-1zM1597 463h1v19h-1zM1598 463h1v19h-1zM1599 463h1v19h-1zM1600 463h1v19h-1zM1601 463h1v19h-1zM1602 463h1v19h-1zM1603 463h1v19h-1zM1604 463h1v20h-1zM1605 463h1v20h-1zM1606 463h1v19h-1zM1607 463h1v19h-1zM1608 463h1v19h-1zM1609 463h1v19h-1zM1610 463h1v20h-1zM1611 463h1v19h-1zM1612 463h1v19h-1zM1613 463h1v19h-1zM1614 463h1v19h-1zM1615 463h1v19h-1zM1616 463h1v19h-1zM1617 463h1v19h-1zM1618 463h1v19h-1zM1619 463h1v19h-1zM1620 463h1v19h-1zM1621 463h1v19h-1zM1622 463h1v19h-1zM1623 463h1v19h-1zM1624 462h1v20h-1zM1625 463h1v19h-1zM1626 463h1v19h-1zM1627 463h1v19h-1zM1628 463h1v19h-1zM1629 462h1v20h-1zM1630 463h1v19h-1zM1631 463h1v19h-1zM1632 463h1v19h-1zM1633 463h1v19h-1zM1634 463h1v19h-1zM1635 463h1v19h-1zM1636 463h1v19h-1zM1637 462h1v20h-1zM1638 463h1v19h-1zM1639 463h1v19h-1zM1640 463h1v19h-1zM1641 463h1v19h-1zM1642 463h1v19h-1zM1643 463h1v19h-1zM1644 462h1v20h-1zM1645 463h1v19h-1zM1646 463h1v19h-1zM1647 462h1v20h-1zM1648 463h1v19h-1zM1649 463h1v19h-1zM1650 463h1v19h-1zM1651 463h1v19h-1zM1652 463h1v19h-1zM1653 462h1v20h-1zM1654 463h1v19h-1zM1655 463h1v19h-1zM1656 463h1v19h-1zM1657 463h1v19h-1zM1658 463h1v19h-1zM1659 463h1v19h-1zM1660 463h1v19h-1zM1661 463h1v19h-1zM1662 463h1v20h-1zM1663 463h1v20h-1zM1664 463h1v19h-1zM1665 463h1v19h-1zM1666 462h1v20h-1zM1667 463h1v19h-1zM1668 463h1v20h-1zM1669 463h1v19h-1zM1670 463h1v19h-1zM1671 463h1v19h-1zM1672 463h1v19h-1zM1673 463h1v19h-1zM1674 463h1v19h-1zM1675 463h1v19h-1zM1676 463h1v19h-1zM1677 463h1v19h-1zM1678 463h1v19h-1zM1679 463h1v19h-1zM1680 463h1v19h-1zM1681 463h1v19h-1zM1682 463h1v19h-1zM1683 463h1v19h-1zM1684 463h1v19h-1zM1685 463h1v19h-1zM1686 463h1v19h-1zM1687 463h1v19h-1zM1688 463h1v19h-1zM1689 463h1v19h-1zM1690 463h1v19h-1zM1691 463h1v19h-1zM1692 463h1v19h-1zM1693 463h1v19h-1zM1694 462h1v20h-1zM1695 463h1v19h-1zM1696 463h1v19h-1zM1697 463h1v19h-1zM1698 463h1v19h-1zM1699 463h1v19h-1zM1700 463h1v19h-1zM1701 463h1v19h-1zM1702 463h1v20h-1zM1703 463h1v19h-1zM1704 463h1v19h-1zM1705 463h1v19h-1zM1706 463h1v19h-1zM1707 463h1v19h-1zM1708 463h1v19h-1zM1709 463h1v19h-1zM1710 463h1v19h-1zM1711 463h1v19h-1zM1712 463h1v19h-1zM1713 463h1v19h-1zM1714 463h1v19h-1zM1715 463h1v19h-1zM1716 463h1v19h-1zM1717 463h1v19h-1zM1718 463h1v19h-1zM1719 463h1v19h-1zM1720 462h1v20h-1zM1721 463h1v19h-1zM1722 463h1v19h-1zM1723 463h1v19h-1zM1724 463h1v19h-1zM1725 463h1v19h-1zM1726 463h1v19h-1zM1727 463h1v19h-1zM1728 463h1v19h-1zM1729 462h1v20h-1zM1730 463h1v19h-1zM1731 463h1v19h-1zM1732 463h1v19h-1zM1733 463h1v19h-1zM1734 463h1v19h-1zM1735 463h1v19h-1zM1736 463h1v19h-1zM1737 463h1v19h-1zM1738 463h1v19h-1zM1739 463h1v20h-1zM1740 463h1v19h-1zM1741 463h1v19h-1zM1742 463h1v19h-1zM1743 463h1v19h-1zM1744 463h1v19h-1zM1745 463h1v19h-1zM1746 463h1v19h-1zM1747 463h1v19h-1zM1748 463h1v19h-1zM1749 463h1v19h-1zM1750 463h1v19h-1z" fill="#21b7bf" shape-rendering="crispEdges"/><rect x="47" y="437" width="2" height="83" fill="#21c0c8"/><rect x="166.5" y="411" width="1.5" height="109" fill="#21c0c8"/><rect x="165.5" y="445" width="3" height="50" fill="#21c0c8"/><path d="M3 651h1v66h-1zM4 651h1v66h-1zM5 651h1v66h-1zM6 651h1v66h-1zM7 651h1v66h-1zM8 651h1v66h-1zM9 651h1v66h-1zM10 651h1v66h-1zM11 651h1v66h-1zM12 651h1v66h-1zM13 651h1v66h-1zM14 651h1v66h-1zM15 651h1v66h-1zM16 651h1v66h-1zM17 651h1v66h-1zM18 651h1v66h-1zM19 651h1v66h-1zM20 651h1v66h-1zM21 651h1v66h-1zM22 651h1v66h-1zM23 651h1v66h-1zM24 651h1v66h-1zM25 651h1v66h-1zM26 651h1v66h-1zM27 651h1v66h-1zM28 651h1v66h-1zM29 651h1v66h-1zM30 651h1v66h-1zM31 651h1v66h-1zM32 651h1v66h-1zM33 651h1v66h-1zM34 651h1v66h-1zM35 651h1v66h-1zM36 651h1v66h-1zM37 651h1v66h-1zM38 651h1v66h-1zM39 651h1v66h-1zM40 651h1v66h-1zM41 651h1v66h-1zM42 651h1v66h-1zM43 651h1v66h-1zM44 651h1v66h-1zM45 651h1v66h-1zM46 651h1v66h-1zM47 651h1v66h-1zM48 651h1v66h-1zM49 651h1v66h-1zM50 651h1v66h-1zM51 651h1v66h-1zM52 651h1v66h-1zM53 651h1v66h-1zM54 651h1v66h-1zM55 651h1v66h-1zM56 651h1v66h-1zM57 651h1v66h-1zM58 651h1v66h-1zM59 651h1v66h-1zM60 651h1v66h-1zM61 651h1v66h-1zM62 651h1v66h-1zM63 651h1v66h-1zM64 651h1v66h-1zM65 651h1v66h-1zM66 651h1v66h-1zM67 651h1v66h-1zM68 651h1v66h-1zM69 651h1v66h-1zM70 651h1v66h-1zM71 651h1v66h-1zM72 651h1v66h-1zM73 651h1v66h-1zM74 651h1v66h-1zM75 651h1v66h-1zM76 651h1v66h-1zM77 651h1v66h-1zM78 651h1v66h-1zM79 651h1v66h-1zM80 651h1v66h-1zM81 651h1v66h-1zM82 651h1v66h-1zM83 651h1v66h-1zM84 651h1v66h-1zM85 651h1v66h-1zM86 651h1v66h-1zM87 651h1v66h-1zM88 651h1v66h-1zM89 651h1v66h-1zM90 651h1v66h-1zM91 651h1v66h-1zM92 651h1v66h-1zM93 651h1v66h-1zM94 651h1v66h-1zM95 651h1v66h-1zM96 651h1v66h-1zM97 651h1v66h-1zM98 651h1v66h-1zM99 651h1v66h-1zM100 651h1v66h-1zM101 651h1v66h-1zM102 651h1v66h-1zM103 651h1v66h-1zM104 651h1v66h-1zM105 651h1v66h-1zM106 651h1v66h-1zM107 651h1v66h-1zM108 651h1v66h-1zM109 651h1v66h-1zM110 651h1v66h-1zM111 651h1v66h-1zM112 651h1v66h-1zM113 651h1v66h-1zM114 651h1v66h-1zM115 651h1v66h-1zM116 651h1v66h-1zM117 651h1v66h-1zM118 651h1v66h-1zM119 651h1v66h-1zM120 651h1v66h-1zM121 651h1v66h-1zM122 651h1v66h-1zM123 651h1v66h-1zM124 651h1v66h-1zM125 651h1v66h-1zM126 651h1v66h-1zM127 651h1v66h-1zM128 651h1v66h-1zM129 651h1v66h-1zM130 651h1v66h-1zM131 651h1v66h-1zM132 651h1v66h-1zM133 651h1v66h-1zM134 651h1v66h-1zM135 651h1v66h-1zM136 651h1v66h-1zM137 651h1v66h-1zM138 651h1v66h-1zM139 651h1v66h-1zM140 651h1v66h-1zM141 651h1v66h-1zM142 651h1v66h-1zM143 651h1v66h-1zM144 651h1v66h-1zM145 651h1v66h-1zM146 651h1v66h-1zM147 651h1v66h-1zM148 651h1v66h-1zM149 651h1v66h-1zM150 651h1v66h-1zM151 651h1v66h-1zM152 651h1v66h-1zM153 651h1v66h-1zM154 651h1v66h-1zM155 651h1v66h-1zM156 651h1v66h-1zM157 651h1v66h-1zM158 651h1v66h-1zM159 651h1v66h-1zM160 651h1v66h-1zM161 651h1v66h-1zM162 651h1v66h-1zM163 651h1v66h-1zM164 651h1v66h-1zM165 651h1v66h-1zM166 651h1v66h-1zM167 651h1v66h-1zM168 651h1v66h-1zM169 651h1v66h-1zM170 651h1v66h-1zM171 651h1v66h-1zM172 651h1v66h-1zM173 651h1v66h-1zM174 651h1v66h-1zM175 651h1v66h-1zM176 651h1v66h-1zM177 651h1v66h-1zM178 651h1v66h-1zM179 651h1v66h-1zM180 651h1v66h-1zM181 651h1v66h-1zM182 651h1v66h-1zM183 651h1v66h-1zM184 651h1v66h-1zM185 651h1v66h-1zM186 651h1v66h-1zM187 651h1v66h-1zM188 651h1v66h-1zM189 651h1v66h-1zM190 651h1v66h-1zM191 651h1v66h-1zM192 651h1v66h-1zM193 651h1v66h-1zM194 651h1v66h-1zM195 651h1v66h-1zM196 651h1v66h-1zM197 651h1v66h-1zM198 651h1v66h-1zM199 651h1v66h-1zM200 651h1v66h-1zM201 651h1v66h-1zM202 651h1v66h-1zM203 651h1v66h-1zM204 651h1v66h-1zM205 651h1v66h-1zM206 651h1v66h-1zM207 651h1v66h-1zM208 651h1v66h-1zM209 651h1v66h-1zM210 651h1v66h-1zM211 651h1v66h-1zM212 651h1v66h-1zM213 651h1v66h-1zM214 651h1v66h-1zM215 651h1v66h-1zM216 651h1v66h-1zM217 651h1v66h-1zM218 651h1v66h-1zM219 651h1v66h-1zM220 651h1v66h-1zM221 651h1v66h-1zM222 651h1v66h-1zM223 651h1v66h-1zM224 651h1v66h-1zM225 651h1v66h-1zM226 651h1v66h-1zM227 651h1v66h-1zM228 651h1v66h-1zM229 651h1v66h-1zM230 651h1v66h-1zM231 651h1v66h-1zM232 651h1v66h-1zM233 651h1v66h-1zM234 651h1v66h-1zM235 651h1v66h-1zM236 651h1v66h-1zM237 651h1v66h-1zM238 651h1v66h-1zM239 651h1v66h-1zM240 651h1v66h-1zM241 651h1v66h-1zM242 651h1v66h-1zM243 651h1v66h-1zM244 651h1v66h-1zM245 651h1v66h-1zM246 651h1v66h-1zM247 651h1v66h-1zM248 651h1v66h-1zM249 651h1v66h-1zM250 651h1v66h-1zM251 651h1v66h-1zM252 651h1v66h-1zM253 651h1v66h-1zM254 651h1v66h-1zM255 651h1v66h-1zM256 651h1v66h-1zM257 651h1v66h-1zM258 651h1v66h-1zM259 651h1v66h-1zM260 651h1v66h-1zM261 651h1v66h-1zM262 651h1v66h-1zM263 651h1v66h-1zM264 651h1v66h-1zM265 651h1v66h-1zM266 651h1v66h-1zM267 651h1v66h-1zM268 651h1v66h-1zM269 651h1v66h-1zM270 651h1v66h-1zM271 651h1v66h-1zM272 651h1v66h-1zM273 651h1v66h-1zM274 651h1v66h-1zM275 651h1v66h-1zM276 651h1v66h-1zM277 651h1v66h-1zM278 651h1v66h-1zM279 651h1v66h-1zM280 651h1v66h-1zM281 651h1v66h-1zM282 651h1v66h-1zM283 651h1v66h-1zM284 651h1v66h-1zM285 651h1v66h-1zM286 651h1v66h-1zM287 651h1v66h-1zM288 651h1v66h-1zM289 651h1v66h-1zM290 651h1v66h-1zM291 651h1v66h-1zM292 651h1v66h-1zM293 651h1v66h-1zM294 651h1v66h-1zM295 651h1v66h-1zM296 651h1v66h-1zM297 651h1v66h-1zM298 651h1v66h-1zM299 651h1v66h-1zM300 651h1v66h-1zM301 651h1v66h-1zM302 651h1v66h-1zM303 651h1v66h-1zM304 651h1v66h-1zM305 651h1v66h-1zM306 651h1v66h-1zM307 651h1v66h-1zM308 651h1v66h-1zM309 651h1v66h-1zM310 651h1v66h-1zM311 651h1v66h-1zM312 651h1v66h-1zM313 651h1v66h-1zM314 651h1v66h-1zM315 651h1v66h-1zM316 651h1v66h-1zM317 651h1v66h-1zM318 651h1v66h-1zM319 651h1v66h-1zM320 651h1v66h-1zM321 651h1v66h-1zM322 651h1v66h-1zM323 651h1v66h-1zM324 651h1v66h-1zM325 651h1v66h-1zM326 651h1v66h-1zM327 651h1v66h-1zM328 651h1v66h-1zM329 651h1v66h-1zM330 651h1v66h-1zM331 651h1v66h-1zM332 651h1v66h-1zM333 651h1v66h-1zM334 651h1v66h-1zM335 651h1v66h-1zM336 651h1v66h-1zM337 651h1v66h-1zM338 651h1v66h-1zM339 651h1v66h-1zM340 651h1v66h-1zM341 651h1v66h-1zM342 651h1v66h-1zM343 651h1v66h-1zM344 651h1v66h-1zM345 651h1v66h-1zM346 651h1v66h-1zM347 651h1v66h-1zM348 651h1v66h-1zM349 651h1v66h-1zM350 651h1v66h-1zM351 651h1v66h-1zM352 651h1v66h-1zM353 651h1v66h-1zM354 651h1v66h-1zM355 651h1v66h-1zM356 651h1v66h-1zM357 651h1v66h-1zM358 651h1v66h-1zM359 651h1v66h-1zM360 651h1v66h-1zM361 651h1v66h-1zM362 651h1v66h-1zM363 651h1v66h-1zM364 651h1v66h-1zM365 651h1v66h-1zM366 651h1v66h-1zM367 651h1v66h-1zM368 651h1v66h-1zM369 651h1v66h-1zM370 651h1v66h-1zM371 651h1v66h-1zM372 651h1v66h-1zM373 651h1v66h-1zM374 651h1v66h-1zM375 651h1v66h-1zM376 651h1v66h-1zM377 651h1v66h-1zM378 651h1v66h-1zM379 651h1v66h-1zM380 651h1v66h-1zM381 651h1v66h-1zM382 651h1v66h-1zM383 651h1v66h-1zM384 651h1v66h-1zM385 651h1v66h-1zM386 651h1v66h-1zM387 651h1v66h-1zM388 651h1v66h-1zM389 651h1v66h-1zM390 651h1v66h-1zM391 651h1v66h-1zM392 651h1v66h-1zM393 651h1v66h-1zM394 651h1v66h-1zM395 651h1v66h-1zM396 651h1v66h-1zM397 651h1v66h-1zM398 651h1v66h-1zM399 651h1v66h-1zM400 651h1v66h-1zM401 651h1v66h-1zM402 651h1v66h-1zM403 651h1v66h-1zM404 651h1v66h-1zM405 651h1v66h-1zM406 651h1v66h-1zM407 651h1v66h-1zM408 651h1v66h-1zM409 651h1v66h-1zM410 651h1v66h-1zM411 651h1v66h-1zM412 651h1v66h-1zM413 651h1v66h-1zM414 651h1v66h-1zM415 651h1v66h-1zM416 651h1v66h-1zM417 651h1v66h-1zM418 651h1v66h-1zM419 651h1v66h-1zM420 651h1v66h-1zM421 651h1v66h-1zM422 651h1v66h-1zM423 651h1v66h-1zM424 651h1v66h-1zM425 651h1v66h-1zM426 651h1v66h-1zM427 651h1v66h-1zM428 651h1v66h-1zM429 651h1v66h-1zM430 651h1v66h-1zM431 651h1v66h-1zM432 651h1v66h-1zM433 651h1v66h-1zM434 651h1v66h-1zM435 651h1v66h-1zM436 651h1v66h-1zM437 651h1v66h-1zM438 651h1v66h-1zM439 651h1v66h-1zM440 651h1v66h-1zM441 651h1v66h-1zM442 651h1v66h-1zM443 651h1v66h-1zM444 651h1v66h-1zM445 651h1v66h-1zM446 651h1v66h-1zM447 651h1v66h-1zM448 651h1v66h-1zM449 651h1v66h-1zM450 651h1v66h-1zM451 651h1v66h-1zM452 651h1v66h-1zM453 651h1v66h-1zM454 651h1v66h-1zM455 651h1v66h-1zM456 651h1v66h-1zM457 651h1v66h-1zM458 651h1v66h-1zM459 651h1v66h-1zM460 651h1v66h-1zM461 651h1v66h-1zM462 651h1v66h-1zM463 651h1v66h-1zM464 651h1v66h-1zM465 651h1v66h-1zM466 651h1v66h-1zM467 651h1v66h-1zM468 651h1v66h-1zM469 651h1v66h-1zM470 651h1v66h-1zM471 651h1v66h-1zM472 651h1v66h-1zM473 651h1v66h-1zM474 651h1v66h-1zM475 651h1v66h-1zM476 651h1v66h-1zM477 651h1v66h-1zM478 651h1v66h-1zM479 651h1v66h-1zM480 651h1v66h-1zM481 651h1v66h-1zM482 651h1v66h-1zM483 651h1v66h-1zM484 650h1v67h-1zM485 651h1v66h-1zM486 651h1v66h-1zM487 651h1v66h-1zM488 651h1v66h-1zM489 651h1v66h-1zM490 650h1v67h-1zM491 651h1v66h-1zM492 650h1v67h-1zM493 651h1v66h-1zM494 651h1v66h-1zM495 651h1v66h-1zM496 651h1v66h-1zM497 650h1v67h-1zM498 651h1v66h-1zM499 651h1v66h-1zM500 650h1v67h-1zM501 651h1v66h-1zM502 651h1v66h-1zM503 651h1v66h-1zM504 650h1v67h-1zM505 651h1v66h-1zM506 651h1v66h-1zM507 651h1v66h-1zM508 651h1v66h-1zM509 651h1v66h-1zM510 651h1v66h-1zM511 651h1v66h-1zM512 651h1v66h-1zM513 651h1v66h-1zM514 651h1v66h-1zM515 651h1v66h-1zM516 651h1v66h-1zM517 651h1v66h-1zM518 651h1v66h-1zM519 650h1v67h-1zM520 651h1v66h-1zM521 651h1v66h-1zM522 651h1v66h-1zM523 650h1v67h-1zM524 651h1v66h-1zM525 651h1v66h-1zM526 651h1v66h-1zM527 651h1v66h-1zM528 651h1v66h-1zM529 651h1v66h-1zM530 651h1v66h-1zM531 651h1v66h-1zM532 651h1v66h-1zM533 651h1v66h-1zM534 651h1v66h-1zM535 651h1v66h-1zM536 650h1v67h-1zM537 651h1v66h-1zM538 651h1v66h-1zM539 650h1v67h-1zM540 650h1v67h-1zM541 651h1v66h-1zM542 651h1v66h-1zM543 651h1v66h-1zM544 651h1v66h-1zM545 651h1v66h-1zM546 650h1v67h-1zM547 651h1v66h-1zM548 650h1v67h-1zM549 651h1v66h-1zM550 650h1v67h-1zM551 651h1v66h-1zM552 650h1v67h-1zM553 651h1v66h-1zM554 651h1v66h-1zM555 651h1v66h-1zM556 651h1v66h-1zM557 651h1v66h-1zM558 650h1v67h-1zM559 651h1v66h-1zM560 651h1v66h-1zM561 651h1v66h-1zM562 650h1v67h-1zM563 651h1v66h-1zM564 651h1v66h-1zM565 651h1v66h-1zM566 651h1v66h-1zM567 650h1v67h-1zM568 651h1v66h-1zM569 651h1v66h-1zM570 651h1v66h-1zM571 651h1v66h-1zM572 651h1v66h-1zM573 651h1v66h-1zM574 651h1v66h-1zM575 651h1v66h-1zM576 651h1v66h-1zM577 651h1v66h-1zM578 651h1v66h-1zM579 651h1v66h-1zM580 651h1v66h-1zM581 651h1v66h-1zM582 651h1v66h-1zM583 650h1v67h-1zM584 651h1v66h-1zM585 651h1v66h-1zM586 651h1v66h-1zM587 650h1v67h-1zM588 651h1v66h-1zM589 651h1v66h-1zM590 651h1v66h-1zM591 651h1v66h-1zM592 650h1v67h-1zM593 650h1v67h-1zM594 651h1v66h-1zM595 651h1v66h-1zM596 651h1v66h-1zM597 650h1v67h-1zM598 651h1v66h-1zM599 651h1v66h-1zM600 651h1v66h-1zM601 651h1v66h-1zM602 650h1v67h-1zM603 651h1v66h-1zM604 651h1v66h-1zM605 650h1v67h-1zM606 651h1v66h-1zM607 651h1v66h-1zM608 651h1v66h-1zM609 650h1v67h-1zM610 651h1v66h-1zM611 651h1v66h-1zM612 650h1v67h-1zM613 651h1v66h-1zM614 650h1v67h-1zM615 650h1v67h-1zM616 651h1v66h-1zM617 650h1v67h-1zM618 651h1v66h-1zM619 651h1v66h-1zM620 650h1v67h-1zM621 650h1v67h-1zM622 651h1v66h-1zM623 651h1v66h-1zM624 650h1v67h-1zM625 651h1v66h-1zM626 650h1v67h-1zM627 651h1v66h-1zM628 651h1v66h-1zM629 651h1v66h-1zM630 650h1v67h-1zM631 651h1v66h-1zM632 651h1v66h-1zM633 651h1v66h-1zM634 651h1v66h-1zM635 651h1v66h-1zM636 651h1v66h-1zM637 651h1v66h-1zM638 651h1v66h-1zM639 650h1v67h-1zM640 651h1v66h-1zM641 651h1v66h-1zM642 651h1v66h-1zM643 651h1v66h-1zM644 651h1v66h-1zM645 650h1v67h-1zM646 651h1v66h-1zM647 651h1v66h-1zM648 651h1v66h-1zM649 650h1v67h-1zM650 651h1v66h-1zM651 651h1v66h-1zM652 651h1v66h-1zM653 651h1v66h-1zM654 651h1v66h-1zM655 650h1v67h-1zM656 651h1v66h-1zM657 651h1v66h-1zM658 650h1v67h-1zM659 651h1v66h-1zM660 651h1v66h-1zM661 651h1v66h-1zM662 651h1v66h-1zM663 651h1v66h-1zM664 651h1v66h-1zM665 650h1v67h-1zM666 651h1v66h-1zM667 651h1v66h-1zM668 650h1v67h-1zM669 651h1v66h-1zM670 650h1v67h-1zM671 651h1v66h-1zM672 651h1v66h-1zM673 651h1v66h-1zM674 651h1v66h-1zM675 651h1v66h-1zM676 650h1v67h-1zM677 651h1v66h-1zM678 651h1v66h-1zM679 651h1v66h-1zM680 651h1v66h-1zM681 650h1v67h-1zM682 651h1v66h-1zM683 651h1v66h-1zM684 651h1v66h-1zM685 651h1v66h-1zM686 651h1v66h-1zM687 651h1v66h-1zM688 651h1v66h-1zM689 650h1v67h-1zM690 651h1v66h-1zM691 651h1v66h-1zM692 650h1v67h-1zM693 650h1v67h-1zM694 651h1v66h-1zM695 650h1v67h-1zM696 651h1v66h-1zM697 651h1v66h-1zM698 651h1v66h-1zM699 651h1v66h-1zM700 651h1v66h-1zM701 651h1v66h-1zM702 650h1v67h-1zM703 651h1v66h-1zM704 650h1v67h-1zM705 651h1v66h-1zM706 651h1v66h-1zM707 651h1v66h-1zM708 651h1v66h-1zM709 651h1v66h-1zM710 651h1v66h-1zM711 651h1v66h-1zM712 651h1v66h-1zM713 651h1v66h-1zM714 651h1v66h-1zM715 650h1v67h-1zM716 650h1v67h-1zM717 651h1v66h-1zM718 650h1v67h-1zM719 651h1v66h-1zM720 651h1v66h-1zM721 650h1v67h-1zM722 650h1v67h-1zM723 651h1v66h-1zM724 651h1v66h-1zM725 651h1v66h-1zM726 651h1v66h-1zM727 651h1v66h-1zM728 650h1v67h-1zM729 651h1v66h-1zM730 651h1v66h-1zM731 651h1v66h-1zM732 651h1v66h-1zM733 650h1v67h-1zM734 650h1v67h-1zM735 650h1v67h-1zM736 651h1v66h-1zM737 650h1v67h-1zM738 651h1v66h-1zM739 650h1v67h-1zM740 650h1v67h-1zM741 650h1v67h-1zM742 651h1v66h-1zM743 651h1v66h-1zM744 651h1v66h-1zM745 650h1v67h-1zM746 651h1v66h-1zM747 650h1v67h-1zM748 651h1v66h-1zM749 651h1v66h-1zM750 651h1v66h-1zM751 650h1v67h-1zM752 651h1v66h-1zM753 651h1v66h-1zM754 650h1v67h-1zM755 651h1v66h-1zM756 651h1v66h-1zM757 650h1v67h-1zM758 651h1v66h-1zM759 651h1v66h-1zM760 651h1v66h-1zM761 651h1v66h-1zM762 650h1v67h-1zM763 651h1v66h-1zM764 650h1v67h-1zM765 651h1v66h-1zM766 651h1v66h-1zM767 650h1v67h-1zM768 651h1v66h-1zM769 651h1v66h-1zM770 650h1v67h-1zM771 651h1v66h-1zM772 651h1v66h-1zM773 651h1v66h-1zM774 651h1v66h-1zM775 650h1v67h-1zM776 650h1v67h-1zM777 651h1v66h-1zM778 651h1v66h-1zM779 651h1v66h-1zM780 651h1v66h-1zM781 651h1v66h-1zM782 651h1v66h-1zM783 651h1v66h-1zM784 651h1v66h-1zM785 650h1v67h-1zM786 651h1v66h-1zM787 651h1v66h-1zM788 651h1v66h-1zM789 651h1v66h-1zM790 651h1v66h-1zM791 651h1v66h-1zM792 650h1v67h-1zM793 651h1v66h-1zM794 651h1v66h-1zM795 651h1v66h-1zM796 650h1v67h-1zM797 650h1v67h-1zM798 650h1v67h-1zM799 650h1v67h-1zM800 650h1v67h-1zM801 650h1v67h-1zM802 651h1v66h-1zM803 651h1v66h-1zM804 650h1v67h-1zM805 651h1v66h-1zM806 651h1v66h-1zM807 651h1v66h-1zM808 650h1v67h-1zM809 651h1v66h-1zM810 650h1v67h-1zM811 651h1v66h-1zM812 651h1v66h-1zM813 651h1v66h-1zM814 650h1v67h-1zM815 650h1v67h-1zM816 651h1v66h-1zM817 651h1v66h-1zM818 650h1v67h-1zM819 651h1v66h-1zM820 651h1v66h-1zM821 651h1v66h-1zM822 651h1v66h-1zM823 651h1v66h-1zM824 651h1v66h-1zM825 651h1v66h-1zM826 651h1v66h-1zM827 650h1v67h-1zM828 651h1v66h-1zM829 650h1v67h-1zM830 650h1v67h-1zM831 651h1v66h-1zM832 651h1v66h-1zM833 651h1v66h-1zM834 651h1v66h-1zM835 651h1v66h-1zM836 651h1v66h-1zM837 651h1v66h-1zM838 650h1v67h-1zM839 651h1v66h-1zM840 651h1v66h-1zM841 651h1v66h-1zM842 650h1v67h-1zM843 651h1v66h-1zM844 651h1v66h-1zM845 651h1v66h-1zM846 651h1v66h-1zM847 651h1v66h-1zM848 650h1v67h-1zM849 651h1v66h-1zM850 651h1v66h-1zM851 651h1v66h-1zM852 651h1v66h-1zM853 650h1v67h-1zM854 651h1v66h-1zM855 651h1v66h-1zM856 650h1v67h-1zM857 651h1v66h-1zM858 651h1v66h-1zM859 650h1v67h-1zM860 650h1v67h-1zM861 651h1v66h-1zM862 651h1v66h-1zM863 651h1v66h-1zM864 651h1v66h-1zM865 651h1v66h-1zM866 651h1v66h-1zM867 651h1v66h-1zM868 651h1v66h-1zM869 651h1v66h-1zM870 651h1v66h-1zM871 651h1v66h-1zM872 651h1v66h-1zM873 651h1v66h-1zM874 651h1v66h-1zM875 651h1v66h-1zM876 651h1v66h-1zM877 650h1v67h-1zM878 650h1v67h-1zM879 651h1v66h-1zM880 651h1v66h-1zM881 651h1v66h-1zM882 651h1v66h-1zM883 651h1v66h-1zM884 651h1v66h-1zM885 651h1v66h-1zM886 651h1v66h-1zM887 650h1v67h-1zM888 651h1v66h-1zM889 650h1v67h-1zM890 650h1v67h-1zM891 650h1v67h-1zM892 651h1v66h-1zM893 651h1v66h-1zM894 651h1v66h-1zM895 650h1v67h-1zM896 651h1v66h-1zM897 651h1v66h-1zM898 650h1v67h-1zM899 651h1v66h-1zM900 651h1v66h-1zM901 651h1v66h-1zM902 650h1v67h-1zM903 651h1v66h-1zM904 651h1v66h-1zM905 650h1v67h-1zM906 651h1v66h-1zM907 651h1v66h-1zM908 651h1v66h-1zM909 651h1v66h-1zM910 651h1v66h-1zM911 650h1v67h-1zM912 650h1v67h-1zM913 651h1v66h-1zM914 651h1v66h-1zM915 651h1v66h-1zM916 650h1v67h-1zM917 651h1v66h-1zM918 651h1v66h-1zM919 651h1v66h-1zM920 651h1v66h-1zM921 650h1v67h-1zM922 651h1v66h-1zM923 651h1v66h-1zM924 651h1v66h-1zM925 651h1v66h-1zM926 651h1v66h-1zM927 651h1v66h-1zM928 651h1v66h-1zM929 651h1v66h-1zM930 650h1v67h-1zM931 650h1v67h-1zM932 651h1v66h-1zM933 651h1v66h-1zM934 650h1v67h-1zM935 650h1v67h-1zM936 651h1v66h-1zM937 650h1v67h-1zM938 651h1v66h-1zM939 650h1v67h-1zM940 650h1v67h-1zM941 651h1v66h-1zM942 651h1v66h-1zM943 651h1v66h-1zM944 651h1v66h-1zM945 651h1v66h-1zM946 651h1v66h-1zM947 650h1v67h-1zM948 650h1v67h-1zM949 651h1v66h-1zM950 651h1v66h-1zM951 651h1v66h-1zM952 651h1v66h-1zM953 651h1v66h-1zM954 651h1v66h-1zM955 651h1v66h-1zM956 651h1v66h-1zM957 650h1v67h-1zM958 651h1v66h-1zM959 651h1v66h-1zM960 651h1v66h-1zM961 651h1v66h-1zM962 651h1v66h-1zM963 651h1v66h-1zM964 650h1v67h-1zM965 650h1v67h-1zM966 651h1v66h-1zM967 651h1v66h-1zM968 651h1v66h-1zM969 651h1v66h-1zM970 650h1v67h-1zM971 651h1v66h-1zM972 651h1v66h-1zM973 651h1v66h-1zM974 651h1v66h-1zM975 651h1v66h-1zM976 651h1v66h-1zM977 651h1v66h-1zM978 650h1v67h-1zM979 651h1v66h-1zM980 651h1v66h-1zM981 651h1v66h-1zM982 650h1v67h-1zM983 651h1v66h-1zM984 651h1v66h-1zM985 651h1v66h-1zM986 650h1v67h-1zM987 651h1v66h-1zM988 651h1v66h-1zM989 651h1v66h-1zM990 651h1v66h-1zM991 651h1v66h-1zM992 650h1v67h-1zM993 651h1v66h-1zM994 651h1v66h-1zM995 650h1v67h-1zM996 651h1v66h-1zM997 650h1v67h-1zM998 650h1v67h-1zM999 651h1v66h-1zM1000 651h1v66h-1zM1001 651h1v66h-1zM1002 651h1v66h-1zM1003 651h1v66h-1zM1004 651h1v66h-1zM1005 651h1v66h-1zM1006 650h1v67h-1zM1007 651h1v66h-1zM1008 650h1v67h-1zM1009 651h1v66h-1zM1010 651h1v66h-1zM1011 651h1v66h-1zM1012 650h1v67h-1zM1013 650h1v67h-1zM1014 651h1v66h-1zM1015 651h1v66h-1zM1016 651h1v66h-1zM1017 650h1v67h-1zM1018 650h1v67h-1zM1019 651h1v66h-1zM1020 651h1v66h-1zM1021 651h1v66h-1zM1022 651h1v66h-1zM1023 651h1v66h-1zM1024 650h1v67h-1zM1025 651h1v66h-1zM1026 651h1v66h-1zM1027 651h1v66h-1zM1028 651h1v66h-1zM1029 651h1v66h-1zM1030 651h1v66h-1zM1031 651h1v66h-1zM1032 651h1v66h-1zM1033 651h1v66h-1zM1034 651h1v66h-1zM1035 650h1v67h-1zM1036 651h1v66h-1zM1037 650h1v67h-1zM1038 650h1v67h-1zM1039 650h1v67h-1zM1040 651h1v66h-1zM1041 651h1v66h-1zM1042 651h1v66h-1zM1043 650h1v67h-1zM1044 651h1v66h-1zM1045 651h1v66h-1zM1046 651h1v66h-1zM1047 651h1v66h-1zM1048 650h1v67h-1zM1049 651h1v66h-1zM1050 651h1v66h-1zM1051 650h1v67h-1zM1052 651h1v66h-1zM1053 651h1v66h-1zM1054 651h1v66h-1zM1055 651h1v66h-1zM1056 650h1v67h-1zM1057 651h1v66h-1zM1058 651h1v66h-1zM1059 650h1v67h-1zM1060 651h1v66h-1zM1061 651h1v66h-1zM1062 651h1v66h-1zM1063 650h1v67h-1zM1064 651h1v66h-1zM1065 651h1v66h-1zM1066 651h1v66h-1zM1067 651h1v66h-1zM1068 651h1v66h-1zM1069 651h1v66h-1zM1070 651h1v66h-1zM1071 650h1v67h-1zM1072 651h1v66h-1zM1073 650h1v67h-1zM1074 651h1v66h-1zM1075 651h1v66h-1zM1076 651h1v66h-1zM1077 651h1v66h-1zM1078 650h1v67h-1zM1079 651h1v66h-1zM1080 651h1v66h-1zM1081 651h1v66h-1zM1082 650h1v67h-1zM1083 651h1v66h-1zM1084 651h1v66h-1zM1085 650h1v67h-1zM1086 651h1v66h-1zM1087 651h1v66h-1zM1088 651h1v66h-1zM1089 651h1v66h-1zM1090 651h1v66h-1zM1091 651h1v66h-1zM1092 651h1v66h-1zM1093 650h1v67h-1zM1094 651h1v66h-1zM1095 651h1v66h-1zM1096 651h1v66h-1zM1097 651h1v66h-1zM1098 651h1v66h-1zM1099 651h1v66h-1zM1100 651h1v66h-1zM1101 651h1v66h-1zM1102 651h1v66h-1zM1103 651h1v66h-1zM1104 650h1v67h-1zM1105 651h1v66h-1zM1106 651h1v66h-1zM1107 651h1v66h-1zM1108 650h1v67h-1zM1109 651h1v66h-1zM1110 651h1v66h-1zM1111 651h1v66h-1zM1112 651h1v66h-1zM1113 651h1v66h-1zM1114 651h1v66h-1zM1115 651h1v66h-1zM1116 651h1v66h-1zM1117 651h1v66h-1zM1118 651h1v66h-1zM1119 651h1v66h-1zM1120 651h1v66h-1zM1121 650h1v67h-1zM1122 650h1v67h-1zM1123 650h1v67h-1zM1124 651h1v66h-1zM1125 651h1v66h-1zM1126 651h1v66h-1zM1127 650h1v67h-1zM1128 651h1v66h-1zM1129 650h1v67h-1zM1130 650h1v67h-1zM1131 651h1v66h-1zM1132 650h1v67h-1zM1133 651h1v66h-1zM1134 651h1v66h-1zM1135 650h1v67h-1zM1136 650h1v67h-1zM1137 651h1v66h-1zM1138 651h1v66h-1zM1139 651h1v66h-1zM1140 650h1v67h-1zM1141 651h1v66h-1zM1142 651h1v66h-1zM1143 651h1v66h-1zM1144 651h1v66h-1zM1145 651h1v66h-1zM1146 650h1v67h-1zM1147 651h1v66h-1zM1148 650h1v67h-1zM1149 650h1v67h-1zM1150 651h1v66h-1zM1151 651h1v66h-1zM1152 651h1v66h-1zM1153 651h1v66h-1zM1154 651h1v66h-1zM1155 651h1v66h-1zM1156 651h1v66h-1zM1157 651h1v66h-1zM1158 651h1v66h-1zM1159 651h1v66h-1zM1160 651h1v66h-1zM1161 650h1v67h-1zM1162 650h1v67h-1zM1163 651h1v66h-1zM1164 651h1v66h-1zM1165 651h1v66h-1zM1166 651h1v66h-1zM1167 651h1v66h-1zM1168 651h1v66h-1zM1169 651h1v66h-1zM1170 651h1v66h-1zM1171 651h1v66h-1zM1172 651h1v66h-1zM1173 651h1v66h-1zM1174 651h1v66h-1zM1175 651h1v66h-1zM1176 651h1v66h-1zM1177 651h1v66h-1zM1178 651h1v66h-1zM1179 651h1v66h-1zM1180 651h1v66h-1zM1181 651h1v66h-1zM1182 651h1v66h-1zM1183 651h1v66h-1zM1184 651h1v66h-1zM1185 651h1v66h-1zM1186 651h1v66h-1zM1187 651h1v66h-1zM1188 651h1v66h-1zM1189 651h1v66h-1zM1190 651h1v66h-1zM1191 651h1v66h-1zM1192 651h1v66h-1zM1193 651h1v66h-1zM1194 651h1v66h-1zM1195 651h1v66h-1zM1196 651h1v66h-1zM1197 651h1v66h-1zM1198 651h1v66h-1zM1199 651h1v66h-1zM1200 651h1v66h-1zM1201 651h1v66h-1zM1202 651h1v66h-1zM1203 651h1v66h-1zM1204 651h1v66h-1zM1205 651h1v66h-1zM1206 651h1v66h-1zM1207 651h1v66h-1zM1208 651h1v66h-1zM1209 651h1v66h-1zM1210 651h1v66h-1zM1211 651h1v66h-1zM1212 651h1v66h-1zM1213 651h1v66h-1zM1214 651h1v66h-1zM1215 651h1v66h-1zM1216 651h1v66h-1zM1217 651h1v66h-1zM1218 651h1v66h-1zM1219 651h1v66h-1zM1220 651h1v66h-1zM1221 651h1v66h-1zM1222 651h1v66h-1zM1223 651h1v66h-1zM1224 651h1v66h-1zM1225 651h1v66h-1zM1226 651h1v66h-1zM1227 651h1v66h-1zM1228 651h1v66h-1zM1229 651h1v66h-1zM1230 651h1v66h-1zM1231 651h1v66h-1zM1232 651h1v66h-1zM1233 651h1v66h-1zM1234 651h1v66h-1zM1235 651h1v66h-1zM1236 651h1v66h-1zM1237 651h1v66h-1zM1238 651h1v66h-1zM1239 651h1v66h-1zM1240 651h1v66h-1zM1241 651h1v66h-1zM1242 651h1v66h-1zM1243 651h1v66h-1zM1244 651h1v66h-1zM1245 651h1v66h-1zM1246 651h1v66h-1zM1247 651h1v66h-1zM1248 651h1v66h-1zM1249 651h1v66h-1zM1250 651h1v66h-1zM1251 651h1v66h-1zM1252 651h1v66h-1zM1253 651h1v66h-1zM1254 651h1v66h-1zM1255 651h1v66h-1zM1256 651h1v66h-1zM1257 651h1v66h-1zM1258 651h1v66h-1zM1259 651h1v66h-1zM1260 651h1v66h-1zM1261 651h1v66h-1zM1262 651h1v66h-1zM1263 651h1v66h-1zM1264 651h1v66h-1zM1265 651h1v66h-1zM1266 651h1v66h-1zM1267 651h1v66h-1zM1268 651h1v66h-1zM1269 651h1v66h-1zM1270 651h1v66h-1zM1271 651h1v66h-1zM1272 651h1v66h-1zM1273 651h1v66h-1zM1274 651h1v66h-1zM1275 651h1v66h-1zM1276 651h1v66h-1zM1277 651h1v66h-1zM1278 651h1v66h-1zM1279 651h1v66h-1zM1280 651h1v66h-1zM1281 651h1v66h-1zM1282 651h1v66h-1zM1283 651h1v66h-1zM1284 651h1v66h-1zM1285 651h1v66h-1zM1286 651h1v66h-1zM1287 651h1v66h-1zM1288 651h1v66h-1zM1289 651h1v66h-1zM1290 651h1v66h-1zM1291 651h1v66h-1zM1292 651h1v66h-1zM1293 651h1v66h-1zM1294 651h1v66h-1zM1295 651h1v66h-1zM1296 651h1v66h-1zM1297 651h1v66h-1zM1298 651h1v66h-1zM1299 651h1v66h-1zM1300 651h1v66h-1zM1301 651h1v66h-1zM1302 651h1v66h-1zM1303 651h1v66h-1zM1304 651h1v66h-1zM1305 651h1v66h-1zM1306 651h1v66h-1zM1307 651h1v66h-1zM1308 651h1v66h-1zM1309 651h1v66h-1zM1310 651h1v66h-1zM1311 651h1v66h-1zM1312 651h1v66h-1zM1313 651h1v66h-1zM1314 651h1v66h-1zM1315 651h1v66h-1zM1316 651h1v66h-1zM1317 651h1v66h-1zM1318 651h1v66h-1zM1319 651h1v66h-1zM1320 651h1v66h-1zM1321 651h1v66h-1zM1322 651h1v66h-1zM1323 651h1v66h-1zM1324 651h1v66h-1zM1325 651h1v66h-1zM1326 651h1v66h-1zM1327 651h1v66h-1zM1328 651h1v66h-1zM1329 651h1v66h-1zM1330 651h1v66h-1zM1331 651h1v66h-1zM1332 651h1v66h-1zM1333 651h1v66h-1zM1334 651h1v66h-1zM1335 651h1v66h-1zM1336 651h1v66h-1zM1337 651h1v66h-1zM1338 651h1v66h-1zM1339 651h1v66h-1zM1340 651h1v66h-1zM1341 651h1v66h-1zM1342 651h1v66h-1zM1343 651h1v66h-1zM1344 651h1v66h-1zM1345 651h1v66h-1zM1346 651h1v66h-1zM1347 651h1v66h-1zM1348 651h1v66h-1zM1349 651h1v66h-1zM1350 651h1v66h-1zM1351 651h1v66h-1zM1352 651h1v66h-1zM1353 651h1v66h-1zM1354 651h1v66h-1zM1355 651h1v66h-1zM1356 651h1v66h-1zM1357 651h1v66h-1zM1358 651h1v66h-1zM1359 651h1v66h-1zM1360 651h1v66h-1zM1361 651h1v66h-1zM1362 651h1v66h-1zM1363 651h1v66h-1zM1364 651h1v66h-1zM1365 651h1v66h-1zM1366 651h1v66h-1zM1367 651h1v66h-1zM1368 651h1v66h-1zM1369 651h1v66h-1zM1370 651h1v66h-1zM1371 651h1v66h-1zM1372 651h1v66h-1zM1373 651h1v66h-1zM1374 651h1v66h-1zM1375 651h1v66h-1zM1376 651h1v66h-1zM1377 651h1v66h-1zM1378 651h1v66h-1zM1379 651h1v66h-1zM1380 651h1v66h-1zM1381 651h1v66h-1zM1382 651h1v66h-1zM1383 651h1v66h-1zM1384 651h1v66h-1zM1385 651h1v66h-1zM1386 651h1v66h-1zM1387 651h1v66h-1zM1388 651h1v66h-1zM1389 651h1v66h-1zM1390 651h1v66h-1zM1391 651h1v66h-1zM1392 651h1v66h-1zM1393 651h1v66h-1zM1394 651h1v66h-1zM1395 651h1v66h-1zM1396 651h1v66h-1zM1397 651h1v66h-1zM1398 651h1v66h-1zM1399 651h1v66h-1zM1400 651h1v66h-1zM1401 651h1v66h-1zM1402 651h1v66h-1zM1403 651h1v66h-1zM1404 651h1v66h-1zM1405 651h1v66h-1zM1406 651h1v66h-1zM1407 651h1v66h-1zM1408 651h1v66h-1zM1409 651h1v66h-1zM1410 651h1v66h-1zM1411 651h1v66h-1zM1412 651h1v66h-1zM1413 651h1v66h-1zM1414 651h1v66h-1zM1415 651h1v66h-1zM1416 651h1v66h-1zM1417 651h1v66h-1zM1418 651h1v66h-1zM1419 651h1v66h-1zM1420 651h1v66h-1zM1421 651h1v66h-1zM1422 651h1v66h-1zM1423 651h1v66h-1zM1424 651h1v66h-1zM1425 651h1v66h-1zM1426 651h1v66h-1zM1427 651h1v66h-1zM1428 651h1v66h-1zM1429 651h1v66h-1zM1430 651h1v66h-1zM1431 651h1v66h-1zM1432 651h1v66h-1zM1433 651h1v66h-1zM1434 651h1v66h-1zM1435 651h1v66h-1zM1436 651h1v66h-1zM1437 651h1v66h-1zM1438 651h1v66h-1zM1439 651h1v66h-1zM1440 651h1v66h-1zM1441 651h1v66h-1zM1442 651h1v66h-1zM1443 651h1v66h-1zM1444 651h1v66h-1zM1445 651h1v66h-1zM1446 651h1v66h-1zM1447 651h1v66h-1zM1448 651h1v66h-1zM1449 651h1v66h-1zM1450 651h1v66h-1zM1451 651h1v66h-1zM1452 651h1v66h-1zM1453 651h1v66h-1zM1454 651h1v66h-1zM1455 651h1v66h-1zM1456 651h1v66h-1zM1457 651h1v66h-1zM1458 651h1v66h-1zM1459 651h1v66h-1zM1460 651h1v66h-1zM1461 651h1v66h-1zM1462 651h1v66h-1zM1463 651h1v66h-1zM1464 651h1v66h-1zM1465 651h1v66h-1zM1466 651h1v66h-1zM1467 651h1v66h-1zM1468 651h1v66h-1zM1469 651h1v66h-1zM1470 651h1v66h-1zM1471 651h1v66h-1zM1472 651h1v66h-1zM1473 651h1v66h-1zM1474 651h1v66h-1zM1475 651h1v66h-1zM1476 651h1v66h-1zM1477 651h1v66h-1zM1478 651h1v66h-1zM1479 651h1v66h-1zM1480 651h1v66h-1zM1481 651h1v66h-1zM1482 651h1v66h-1zM1483 651h1v66h-1zM1484 651h1v66h-1zM1485 651h1v66h-1zM1486 651h1v66h-1zM1487 651h1v66h-1zM1488 651h1v66h-1zM1489 651h1v66h-1zM1490 651h1v66h-1zM1491 651h1v66h-1zM1492 651h1v66h-1zM1493 651h1v66h-1zM1494 651h1v66h-1zM1495 651h1v66h-1zM1496 651h1v66h-1zM1497 651h1v66h-1zM1498 651h1v66h-1zM1499 651h1v66h-1zM1500 651h1v66h-1zM1501 651h1v66h-1zM1502 651h1v66h-1zM1503 651h1v66h-1zM1504 651h1v66h-1zM1505 651h1v66h-1zM1506 651h1v66h-1zM1507 651h1v66h-1zM1508 651h1v66h-1zM1509 651h1v66h-1zM1510 651h1v66h-1zM1511 651h1v66h-1zM1512 651h1v66h-1zM1513 651h1v66h-1zM1514 651h1v66h-1zM1515 651h1v66h-1zM1516 651h1v66h-1zM1517 651h1v66h-1zM1518 651h1v66h-1zM1519 651h1v66h-1zM1520 651h1v66h-1zM1521 651h1v66h-1zM1522 651h1v66h-1zM1523 651h1v66h-1zM1524 651h1v66h-1zM1525 651h1v66h-1zM1526 651h1v66h-1zM1527 651h1v66h-1zM1528 651h1v66h-1zM1529 651h1v66h-1zM1530 651h1v66h-1zM1531 651h1v66h-1zM1532 651h1v66h-1zM1533 651h1v66h-1zM1534 651h1v66h-1zM1535 651h1v66h-1zM1536 651h1v66h-1zM1537 651h1v66h-1zM1538 651h1v66h-1zM1539 651h1v66h-1zM1540 651h1v66h-1zM1541 651h1v66h-1zM1542 651h1v66h-1zM1543 651h1v66h-1zM1544 651h1v66h-1zM1545 651h1v66h-1zM1546 651h1v66h-1zM1547 651h1v66h-1zM1548 651h1v66h-1zM1549 651h1v66h-1zM1550 651h1v66h-1zM1551 651h1v66h-1zM1552 651h1v66h-1zM1553 651h1v66h-1zM1554 651h1v66h-1zM1555 651h1v66h-1zM1556 651h1v66h-1zM1557 651h1v66h-1zM1558 651h1v66h-1zM1559 651h1v66h-1zM1560 651h1v66h-1zM1561 651h1v66h-1zM1562 651h1v66h-1zM1563 651h1v66h-1zM1564 651h1v66h-1zM1565 651h1v66h-1zM1566 651h1v66h-1zM1567 651h1v66h-1zM1568 651h1v66h-1zM1569 651h1v66h-1zM1570 651h1v66h-1zM1571 651h1v66h-1zM1572 651h1v66h-1zM1573 651h1v66h-1zM1574 651h1v66h-1zM1575 651h1v66h-1zM1576 651h1v66h-1zM1577 651h1v66h-1zM1578 651h1v66h-1zM1579 651h1v66h-1zM1580 651h1v66h-1zM1581 651h1v66h-1zM1582 651h1v66h-1zM1583 651h1v66h-1zM1584 651h1v66h-1zM1585 651h1v66h-1zM1586 651h1v66h-1zM1587 651h1v66h-1zM1588 651h1v66h-1zM1589 651h1v66h-1zM1590 651h1v66h-1zM1591 651h1v66h-1zM1592 651h1v66h-1zM1593 651h1v66h-1zM1594 651h1v66h-1zM1595 651h1v66h-1zM1596 651h1v66h-1zM1597 651h1v66h-1zM1598 651h1v66h-1zM1599 651h1v66h-1zM1600 651h1v66h-1zM1601 651h1v66h-1zM1602 651h1v66h-1zM1603 651h1v66h-1zM1604 651h1v66h-1zM1605 651h1v66h-1zM1606 651h1v66h-1zM1607 651h1v66h-1zM1608 651h1v66h-1zM1609 651h1v66h-1zM1610 651h1v66h-1zM1611 651h1v66h-1zM1612 651h1v66h-1zM1613 651h1v66h-1zM1614 651h1v66h-1zM1615 651h1v66h-1zM1616 651h1v66h-1zM1617 651h1v66h-1zM1618 651h1v66h-1zM1619 651h1v66h-1zM1620 651h1v66h-1zM1621 651h1v66h-1zM1622 651h1v66h-1zM1623 651h1v66h-1zM1624 651h1v66h-1zM1625 651h1v66h-1zM1626 651h1v66h-1zM1627 651h1v66h-1zM1628 651h1v66h-1zM1629 651h1v66h-1zM1630 651h1v66h-1zM1631 651h1v66h-1zM1632 651h1v66h-1zM1633 651h1v66h-1zM1634 651h1v66h-1zM1635 651h1v66h-1zM1636 651h1v66h-1zM1637 651h1v66h-1zM1638 651h1v66h-1zM1639 651h1v66h-1zM1640 651h1v66h-1zM1641 651h1v66h-1zM1642 651h1v66h-1zM1643 651h1v66h-1zM1644 651h1v66h-1zM1645 651h1v66h-1zM1646 651h1v66h-1zM1647 651h1v66h-1zM1648 651h1v66h-1zM1649 651h1v66h-1zM1650 651h1v66h-1zM1651 651h1v66h-1zM1652 651h1v66h-1zM1653 651h1v66h-1zM1654 651h1v66h-1zM1655 651h1v66h-1zM1656 651h1v66h-1zM1657 651h1v66h-1zM1658 651h1v66h-1zM1659 651h1v66h-1zM1660 651h1v66h-1zM1661 651h1v66h-1zM1662 651h1v66h-1zM1663 651h1v66h-1zM1664 651h1v66h-1zM1665 651h1v66h-1zM1666 651h1v66h-1zM1667 651h1v66h-1zM1668 651h1v66h-1zM1669 651h1v66h-1zM1670 651h1v66h-1zM1671 651h1v66h-1zM1672 651h1v66h-1zM1673 651h1v66h-1zM1674 651h1v66h-1zM1675 651h1v66h-1zM1676 651h1v66h-1zM1677 651h1v66h-1zM1678 651h1v66h-1zM1679 651h1v66h-1zM1680 651h1v66h-1zM1681 651h1v66h-1zM1682 651h1v66h-1zM1683 651h1v66h-1zM1684 651h1v66h-1zM1685 651h1v66h-1zM1686 651h1v66h-1zM1687 651h1v66h-1zM1688 651h1v66h-1zM1689 651h1v66h-1zM1690 651h1v66h-1zM1691 651h1v66h-1zM1692 651h1v66h-1zM1693 651h1v66h-1zM1694 651h1v66h-1zM1695 651h1v66h-1zM1696 651h1v66h-1zM1697 651h1v66h-1zM1698 651h1v66h-1zM1699 651h1v66h-1zM1700 651h1v66h-1zM1701 651h1v66h-1zM1702 651h1v66h-1zM1703 651h1v66h-1zM1704 651h1v66h-1zM1705 651h1v66h-1zM1706 651h1v66h-1zM1707 651h1v66h-1zM1708 651h1v66h-1zM1709 651h1v66h-1zM1710 651h1v66h-1zM1711 651h1v66h-1zM1712 651h1v66h-1zM1713 651h1v66h-1zM1714 651h1v66h-1zM1715 651h1v66h-1zM1716 651h1v66h-1zM1717 651h1v66h-1zM1718 651h1v66h-1zM1719 651h1v66h-1zM1720 651h1v66h-1zM1721 651h1v66h-1zM1722 651h1v66h-1zM1723 651h1v66h-1zM1724 651h1v66h-1zM1725 651h1v66h-1zM1726 651h1v66h-1zM1727 651h1v66h-1zM1728 651h1v66h-1zM1729 651h1v66h-1zM1730 651h1v66h-1zM1731 651h1v66h-1zM1732 651h1v66h-1zM1733 651h1v66h-1zM1734 651h1v66h-1zM1735 651h1v66h-1zM1736 651h1v66h-1zM1737 651h1v66h-1zM1738 651h1v66h-1zM1739 651h1v66h-1zM1740 651h1v66h-1zM1741 651h1v66h-1zM1742 651h1v66h-1zM1743 651h1v66h-1zM1744 651h1v66h-1zM1745 651h1v66h-1zM1746 651h1v66h-1zM1747 651h1v66h-1zM1748 651h1v66h-1zM1749 651h1v66h-1zM1750 651h1v66h-1z" fill="#e5234a" shape-rendering="crispEdges"/><rect x="3" y="912" width="1748" height="1" fill="#8ed13c"/><path d="M12 57h1v1h-1zM82 57h1v1h-1zM117 57h1v1h-1zM152 57h1v1h-1zM187 57h1v1h-1zM256 57h1v1h-1zM291 57h1v1h-1zM326 57h1v1h-1zM361 57h1v1h-1zM431 57h1v1h-1zM466 57h1v1h-1zM501 57h1v1h-1zM536 57h1v1h-1zM606 57h1v1h-1zM641 57h1v1h-1zM676 57h1v1h-1zM711 57h1v1h-1zM781 57h1v1h-1zM816 57h1v1h-1zM851 57h1v1h-1zM886 57h1v1h-1zM956 57h1v1h-1zM991 57h1v1h-1zM1026 57h1v1h-1zM1061 57h1v1h-1zM1130 57h1v1h-1zM1165 57h1v1h-1zM1200 57h1v1h-1zM1235 57h1v1h-1zM1305 57h1v1h-1zM1340 57h1v1h-1zM1375 57h1v1h-1zM1410 57h1v1h-1zM1480 57h1v1h-1zM1515 57h1v1h-1zM1550 57h1v1h-1zM1585 57h1v1h-1zM1655 57h1v1h-1zM1690 57h1v1h-1zM1725 57h1v1h-1zM12 80h1v1h-1zM82 80h1v1h-1zM117 80h1v1h-1zM152 80h1v1h-1zM187 80h1v1h-1zM256 80h1v1h-1zM291 80h1v1h-1zM326 80h1v1h-1zM361 80h1v1h-1zM431 80h1v1h-1zM466 80h1v1h-1zM501 80h1v1h-1zM536 80h1v1h-1zM606 80h1v1h-1zM641 80h1v1h-1zM676 80h1v1h-1zM711 80h1v1h-1zM781 80h1v1h-1zM816 80h1v1h-1zM851 80h1v1h-1zM886 80h1v1h-1zM956 80h1v1h-1zM991 80h1v1h-1zM1026 80h1v1h-1zM1061 80h1v1h-1zM1130 80h1v1h-1zM1165 80h1v1h-1zM1200 80h1v1h-1zM1235 80h1v1h-1zM1305 80h1v1h-1zM1340 80h1v1h-1zM1375 80h1v1h-1zM1410 80h1v1h-1zM1480 80h1v1h-1zM1515 80h1v1h-1zM1550 80h1v1h-1zM1585 80h1v1h-1zM1655 80h1v1h-1zM1690 80h1v1h-1zM1725 80h1v1h-1zM12 103h1v1h-1zM82 103h1v1h-1zM117 103h1v1h-1zM152 103h1v1h-1zM187 103h1v1h-1zM256 103h1v1h-1zM291 103h1v1h-1zM326 103h1v1h-1zM361 103h1v1h-1zM431 103h1v1h-1zM466 103h1v1h-1zM501 103h1v1h-1zM536 103h1v1h-1zM606 103h1v1h-1zM641 103h1v1h-1zM676 103h1v1h-1zM711 103h1v1h-1zM781 103h1v1h-1zM816 103h1v1h-1zM851 103h1v1h-1zM886 103h1v1h-1zM956 103h1v1h-1zM991 103h1v1h-1zM1026 103h1v1h-1zM1061 103h1v1h-1zM1130 103h1v1h-1zM1165 103h1v1h-1zM1200 103h1v1h-1zM1235 103h1v1h-1zM1305 103h1v1h-1zM1340 103h1v1h-1zM1375 103h1v1h-1zM1410 103h1v1h-1zM1480 103h1v1h-1zM1515 103h1v1h-1zM1550 103h1v1h-1zM1585 103h1v1h-1zM1655 103h1v1h-1zM1690 103h1v1h-1zM1725 103h1v1h-1zM12 127h1v1h-1zM82 127h1v1h-1zM117 127h1v1h-1zM152 127h1v1h-1zM187 127h1v1h-1zM256 127h1v1h-1zM291 127h1v1h-1zM326 127h1v1h-1zM361 127h1v1h-1zM431 127h1v1h-1zM466 127h1v1h-1zM501 127h1v1h-1zM536 127h1v1h-1zM606 127h1v1h-1zM641 127h1v1h-1zM676 127h1v1h-1zM711 127h1v1h-1zM781 127h1v1h-1zM816 127h1v1h-1zM851 127h1v1h-1zM886 127h1v1h-1zM956 127h1v1h-1zM991 127h1v1h-1zM1026 127h1v1h-1zM1061 127h1v1h-1zM1130 127h1v1h-1zM1165 127h1v1h-1zM1200 127h1v1h-1zM1235 127h1v1h-1zM1305 127h1v1h-1zM1340 127h1v1h-1zM1375 127h1v1h-1zM1410 127h1v1h-1zM1480 127h1v1h-1zM1515 127h1v1h-1zM1550 127h1v1h-1zM1585 127h1v1h-1zM1655 127h1v1h-1zM1690 127h1v1h-1zM1725 127h1v1h-1zM12 150h1v1h-1zM82 150h1v1h-1zM117 150h1v1h-1zM152 150h1v1h-1zM187 150h1v1h-1zM256 150h1v1h-1zM291 150h1v1h-1zM326 150h1v1h-1zM361 150h1v1h-1zM431 150h1v1h-1zM466 150h1v1h-1zM501 150h1v1h-1zM536 150h1v1h-1zM606 150h1v1h-1zM641 150h1v1h-1zM676 150h1v1h-1zM711 150h1v1h-1zM781 150h1v1h-1zM816 150h1v1h-1zM851 150h1v1h-1zM886 150h1v1h-1zM956 150h1v1h-1zM991 150h1v1h-1zM1026 150h1v1h-1zM1061 150h1v1h-1zM1130 150h1v1h-1zM1165 150h1v1h-1zM1200 150h1v1h-1zM1235 150h1v1h-1zM1305 150h1v1h-1zM1340 150h1v1h-1zM1375 150h1v1h-1zM1410 150h1v1h-1zM1480 150h1v1h-1zM1515 150h1v1h-1zM1550 150h1v1h-1zM1585 150h1v1h-1zM1655 150h1v1h-1zM1690 150h1v1h-1zM1725 150h1v1h-1zM12 173h1v1h-1zM82 173h1v1h-1zM117 173h1v1h-1zM152 173h1v1h-1zM187 173h1v1h-1zM256 173h1v1h-1zM291 173h1v1h-1zM326 173h1v1h-1zM361 173h1v1h-1zM431 173h1v1h-1zM466 173h1v1h-1zM501 173h1v1h-1zM536 173h1v1h-1zM606 173h1v1h-1zM641 173h1v1h-1zM676 173h1v1h-1zM711 173h1v1h-1zM781 173h1v1h-1zM816 173h1v1h-1zM851 173h1v1h-1zM886 173h1v1h-1zM956 173h1v1h-1zM991 173h1v1h-1zM1026 173h1v1h-1zM1061 173h1v1h-1zM1130 173h1v1h-1zM1165 173h1v1h-1zM1200 173h1v1h-1zM1235 173h1v1h-1zM1305 173h1v1h-1zM1340 173h1v1h-1zM1375 173h1v1h-1zM1410 173h1v1h-1zM1480 173h1v1h-1zM1515 173h1v1h-1zM1550 173h1v1h-1zM1585 173h1v1h-1zM1655 173h1v1h-1zM1690 173h1v1h-1zM1725 173h1v1h-1zM12 196h1v1h-1zM82 196h1v1h-1zM117 196h1v1h-1zM152 196h1v1h-1zM187 196h1v1h-1zM256 196h1v1h-1zM291 196h1v1h-1zM326 196h1v1h-1zM361 196h1v1h-1zM431 196h1v1h-1zM466 196h1v1h-1zM501 196h1v1h-1zM536 196h1v1h-1zM606 196h1v1h-1zM641 196h1v1h-1zM676 196h1v1h-1zM711 196h1v1h-1zM781 196h1v1h-1zM816 196h1v1h-1zM851 196h1v1h-1zM886 196h1v1h-1zM956 196h1v1h-1zM991 196h1v1h-1zM1026 196h1v1h-1zM1061 196h1v1h-1zM1130 196h1v1h-1zM1165 196h1v1h-1zM1200 196h1v1h-1zM1235 196h1v1h-1zM1305 196h1v1h-1zM1340 196h1v1h-1zM1375 196h1v1h-1zM1410 196h1v1h-1zM1480 196h1v1h-1zM1515 196h1v1h-1zM1550 196h1v1h-1zM1585 196h1v1h-1zM1655 196h1v1h-1zM1690 196h1v1h-1zM1725 196h1v1h-1zM12 219h1v1h-1zM82 219h1v1h-1zM117 219h1v1h-1zM152 219h1v1h-1zM187 219h1v1h-1zM256 219h1v1h-1zM291 219h1v1h-1zM326 219h1v1h-1zM361 219h1v1h-1zM431 219h1v1h-1zM466 219h1v1h-1zM501 219h1v1h-1zM536 219h1v1h-1zM606 219h1v1h-1zM641 219h1v1h-1zM676 219h1v1h-1zM711 219h1v1h-1zM781 219h1v1h-1zM816 219h1v1h-1zM851 219h1v1h-1zM886 219h1v1h-1zM956 219h1v1h-1zM991 219h1v1h-1zM1026 219h1v1h-1zM1061 219h1v1h-1zM1130 219h1v1h-1zM1165 219h1v1h-1zM1200 219h1v1h-1zM1235 219h1v1h-1zM1305 219h1v1h-1zM1340 219h1v1h-1zM1375 219h1v1h-1zM1410 219h1v1h-1zM1480 219h1v1h-1zM1515 219h1v1h-1zM1550 219h1v1h-1zM1585 219h1v1h-1zM1655 219h1v1h-1zM1690 219h1v1h-1zM1725 219h1v1h-1zM12 243h1v1h-1zM82 243h1v1h-1zM117 243h1v1h-1zM152 243h1v1h-1zM187 243h1v1h-1zM256 243h1v1h-1zM291 243h1v1h-1zM326 243h1v1h-1zM361 243h1v1h-1zM431 243h1v1h-1zM466 243h1v1h-1zM501 243h1v1h-1zM536 243h1v1h-1zM606 243h1v1h-1zM641 243h1v1h-1zM676 243h1v1h-1zM711 243h1v1h-1zM781 243h1v1h-1zM816 243h1v1h-1zM851 243h1v1h-1zM886 243h1v1h-1zM956 243h1v1h-1zM991 243h1v1h-1zM1026 243h1v1h-1zM1061 243h1v1h-1zM1130 243h1v1h-1zM1165 243h1v1h-1zM1200 243h1v1h-1zM1235 243h1v1h-1zM1305 243h1v1h-1zM1340 243h1v1h-1zM1375 243h1v1h-1zM1410 243h1v1h-1zM1480 243h1v1h-1zM1515 243h1v1h-1zM1550 243h1v1h-1zM1585 243h1v1h-1zM1655 243h1v1h-1zM1690 243h1v1h-1zM1725 243h1v1h-1zM12 266h1v1h-1zM82 266h1v1h-1zM117 266h1v1h-1zM152 266h1v1h-1zM187 266h1v1h-1zM256 266h1v1h-1zM291 266h1v1h-1zM326 266h1v1h-1zM361 266h1v1h-1zM431 266h1v1h-1zM466 266h1v1h-1zM501 266h1v1h-1zM536 266h1v1h-1zM606 266h1v1h-1zM641 266h1v1h-1zM676 266h1v1h-1zM711 266h1v1h-1zM781 266h1v1h-1zM816 266h1v1h-1zM851 266h1v1h-1zM886 266h1v1h-1zM956 266h1v1h-1zM991 266h1v1h-1zM1026 266h1v1h-1zM1061 266h1v1h-1zM1130 266h1v1h-1zM1165 266h1v1h-1zM1200 266h1v1h-1zM1235 266h1v1h-1zM1305 266h1v1h-1zM1340 266h1v1h-1zM1375 266h1v1h-1zM1410 266h1v1h-1zM1480 266h1v1h-1zM1515 266h1v1h-1zM1550 266h1v1h-1zM1585 266h1v1h-1zM1655 266h1v1h-1zM1690 266h1v1h-1zM1725 266h1v1h-1zM12 311h1v1h-1zM82 311h1v1h-1zM117 311h1v1h-1zM152 311h1v1h-1zM187 311h1v1h-1zM256 311h1v1h-1zM291 311h1v1h-1zM326 311h1v1h-1zM361 311h1v1h-1zM431 311h1v1h-1zM466 311h1v1h-1zM501 311h1v1h-1zM536 311h1v1h-1zM606 311h1v1h-1zM641 311h1v1h-1zM676 311h1v1h-1zM711 311h1v1h-1zM781 311h1v1h-1zM816 311h1v1h-1zM851 311h1v1h-1zM886 311h1v1h-1zM956 311h1v1h-1zM991 311h1v1h-1zM1026 311h1v1h-1zM1061 311h1v1h-1zM1130 311h1v1h-1zM1165 311h1v1h-1zM1200 311h1v1h-1zM1235 311h1v1h-1zM1305 311h1v1h-1zM1340 311h1v1h-1zM1375 311h1v1h-1zM1410 311h1v1h-1zM1480 311h1v1h-1zM1515 311h1v1h-1zM1550 311h1v1h-1zM1585 311h1v1h-1zM1655 311h1v1h-1zM1690 311h1v1h-1zM1725 311h1v1h-1zM12 334h1v1h-1zM82 334h1v1h-1zM117 334h1v1h-1zM152 334h1v1h-1zM187 334h1v1h-1zM256 334h1v1h-1zM291 334h1v1h-1zM326 334h1v1h-1zM361 334h1v1h-1zM431 334h1v1h-1zM466 334h1v1h-1zM501 334h1v1h-1zM536 334h1v1h-1zM606 334h1v1h-1zM641 334h1v1h-1zM676 334h1v1h-1zM711 334h1v1h-1zM781 334h1v1h-1zM816 334h1v1h-1zM851 334h1v1h-1zM886 334h1v1h-1zM956 334h1v1h-1zM991 334h1v1h-1zM1026 334h1v1h-1zM1061 334h1v1h-1zM1130 334h1v1h-1zM1165 334h1v1h-1zM1200 334h1v1h-1zM1235 334h1v1h-1zM1305 334h1v1h-1zM1340 334h1v1h-1zM1375 334h1v1h-1zM1410 334h1v1h-1zM1480 334h1v1h-1zM1515 334h1v1h-1zM1550 334h1v1h-1zM1585 334h1v1h-1zM1655 334h1v1h-1zM1690 334h1v1h-1zM1725 334h1v1h-1zM12 357h1v1h-1zM82 357h1v1h-1zM117 357h1v1h-1zM152 357h1v1h-1zM187 357h1v1h-1zM256 357h1v1h-1zM291 357h1v1h-1zM326 357h1v1h-1zM361 357h1v1h-1zM431 357h1v1h-1zM466 357h1v1h-1zM501 357h1v1h-1zM536 357h1v1h-1zM606 357h1v1h-1zM641 357h1v1h-1zM676 357h1v1h-1zM711 357h1v1h-1zM781 357h1v1h-1zM816 357h1v1h-1zM851 357h1v1h-1zM886 357h1v1h-1zM956 357h1v1h-1zM991 357h1v1h-1zM1026 357h1v1h-1zM1061 357h1v1h-1zM1130 357h1v1h-1zM1165 357h1v1h-1zM1200 357h1v1h-1zM1235 357h1v1h-1zM1305 357h1v1h-1zM1340 357h1v1h-1zM1375 357h1v1h-1zM1410 357h1v1h-1zM1480 357h1v1h-1zM1515 357h1v1h-1zM1550 357h1v1h-1zM1585 357h1v1h-1zM1655 357h1v1h-1zM1690 357h1v1h-1zM1725 357h1v1h-1zM12 381h1v1h-1zM82 381h1v1h-1zM117 381h1v1h-1zM152 381h1v1h-1zM187 381h1v1h-1zM256 381h1v1h-1zM291 381h1v1h-1zM326 381h1v1h-1zM361 381h1v1h-1zM431 381h1v1h-1zM466 381h1v1h-1zM501 381h1v1h-1zM536 381h1v1h-1zM606 381h1v1h-1zM641 381h1v1h-1zM676 381h1v1h-1zM711 381h1v1h-1zM781 381h1v1h-1zM816 381h1v1h-1zM851 381h1v1h-1zM886 381h1v1h-1zM956 381h1v1h-1zM991 381h1v1h-1zM1026 381h1v1h-1zM1061 381h1v1h-1zM1130 381h1v1h-1zM1165 381h1v1h-1zM1200 381h1v1h-1zM1235 381h1v1h-1zM1305 381h1v1h-1zM1340 381h1v1h-1zM1375 381h1v1h-1zM1410 381h1v1h-1zM1480 381h1v1h-1zM1515 381h1v1h-1zM1550 381h1v1h-1zM1585 381h1v1h-1zM1655 381h1v1h-1zM1690 381h1v1h-1zM1725 381h1v1h-1zM12 404h1v1h-1zM82 404h1v1h-1zM117 404h1v1h-1zM152 404h1v1h-1zM187 404h1v1h-1zM256 404h1v1h-1zM291 404h1v1h-1zM326 404h1v1h-1zM361 404h1v1h-1zM431 404h1v1h-1zM466 404h1v1h-1zM501 404h1v1h-1zM536 404h1v1h-1zM606 404h1v1h-1zM641 404h1v1h-1zM676 404h1v1h-1zM711 404h1v1h-1zM781 404h1v1h-1zM816 404h1v1h-1zM851 404h1v1h-1zM886 404h1v1h-1zM956 404h1v1h-1zM991 404h1v1h-1zM1026 404h1v1h-1zM1061 404h1v1h-1zM1130 404h1v1h-1zM1165 404h1v1h-1zM1200 404h1v1h-1zM1235 404h1v1h-1zM1305 404h1v1h-1zM1340 404h1v1h-1zM1375 404h1v1h-1zM1410 404h1v1h-1zM1480 404h1v1h-1zM1515 404h1v1h-1zM1550 404h1v1h-1zM1585 404h1v1h-1zM1655 404h1v1h-1zM1690 404h1v1h-1zM1725 404h1v1h-1zM12 427h1v1h-1zM82 427h1v1h-1zM117 427h1v1h-1zM152 427h1v1h-1zM187 427h1v1h-1zM256 427h1v1h-1zM291 427h1v1h-1zM326 427h1v1h-1zM361 427h1v1h-1zM431 427h1v1h-1zM466 427h1v1h-1zM501 427h1v1h-1zM536 427h1v1h-1zM606 427h1v1h-1zM641 427h1v1h-1zM676 427h1v1h-1zM711 427h1v1h-1zM781 427h1v1h-1zM816 427h1v1h-1zM851 427h1v1h-1zM886 427h1v1h-1zM956 427h1v1h-1zM991 427h1v1h-1zM1026 427h1v1h-1zM1061 427h1v1h-1zM1130 427h1v1h-1zM1165 427h1v1h-1zM1200 427h1v1h-1zM1235 427h1v1h-1zM1305 427h1v1h-1zM1340 427h1v1h-1zM1375 427h1v1h-1zM1410 427h1v1h-1zM1480 427h1v1h-1zM1515 427h1v1h-1zM1550 427h1v1h-1zM1585 427h1v1h-1zM1655 427h1v1h-1zM1690 427h1v1h-1zM1725 427h1v1h-1zM12 450h1v1h-1zM82 450h1v1h-1zM117 450h1v1h-1zM152 450h1v1h-1zM187 450h1v1h-1zM256 450h1v1h-1zM291 450h1v1h-1zM326 450h1v1h-1zM361 450h1v1h-1zM431 450h1v1h-1zM466 450h1v1h-1zM501 450h1v1h-1zM536 450h1v1h-1zM606 450h1v1h-1zM641 450h1v1h-1zM676 450h1v1h-1zM711 450h1v1h-1zM781 450h1v1h-1zM816 450h1v1h-1zM851 450h1v1h-1zM886 450h1v1h-1zM956 450h1v1h-1zM991 450h1v1h-1zM1026 450h1v1h-1zM1061 450h1v1h-1zM1130 450h1v1h-1zM1165 450h1v1h-1zM1200 450h1v1h-1zM1235 450h1v1h-1zM1305 450h1v1h-1zM1340 450h1v1h-1zM1375 450h1v1h-1zM1410 450h1v1h-1zM1480 450h1v1h-1zM1515 450h1v1h-1zM1550 450h1v1h-1zM1585 450h1v1h-1zM1655 450h1v1h-1zM1690 450h1v1h-1zM1725 450h1v1h-1zM12 473h1v1h-1zM82 473h1v1h-1zM117 473h1v1h-1zM152 473h1v1h-1zM187 473h1v1h-1zM256 473h1v1h-1zM291 473h1v1h-1zM326 473h1v1h-1zM361 473h1v1h-1zM431 473h1v1h-1zM466 473h1v1h-1zM501 473h1v1h-1zM536 473h1v1h-1zM606 473h1v1h-1zM641 473h1v1h-1zM676 473h1v1h-1zM711 473h1v1h-1zM781 473h1v1h-1zM816 473h1v1h-1zM851 473h1v1h-1zM886 473h1v1h-1zM956 473h1v1h-1zM991 473h1v1h-1zM1026 473h1v1h-1zM1061 473h1v1h-1zM1130 473h1v1h-1zM1165 473h1v1h-1zM1200 473h1v1h-1zM1235 473h1v1h-1zM1305 473h1v1h-1zM1340 473h1v1h-1zM1375 473h1v1h-1zM1410 473h1v1h-1zM1480 473h1v1h-1zM1515 473h1v1h-1zM1550 473h1v1h-1zM1585 473h1v1h-1zM1655 473h1v1h-1zM1690 473h1v1h-1zM1725 473h1v1h-1zM12 497h1v1h-1zM82 497h1v1h-1zM117 497h1v1h-1zM152 497h1v1h-1zM187 497h1v1h-1zM256 497h1v1h-1zM291 497h1v1h-1zM326 497h1v1h-1zM361 497h1v1h-1zM431 497h1v1h-1zM466 497h1v1h-1zM501 497h1v1h-1zM536 497h1v1h-1zM606 497h1v1h-1zM641 497h1v1h-1zM676 497h1v1h-1zM711 497h1v1h-1zM781 497h1v1h-1zM816 497h1v1h-1zM851 497h1v1h-1zM886 497h1v1h-1zM956 497h1v1h-1zM991 497h1v1h-1zM1026 497h1v1h-1zM1061 497h1v1h-1zM1130 497h1v1h-1zM1165 497h1v1h-1zM1200 497h1v1h-1zM1235 497h1v1h-1zM1305 497h1v1h-1zM1340 497h1v1h-1zM1375 497h1v1h-1zM1410 497h1v1h-1zM1480 497h1v1h-1zM1515 497h1v1h-1zM1550 497h1v1h-1zM1585 497h1v1h-1zM1655 497h1v1h-1zM1690 497h1v1h-1zM1725 497h1v1h-1zM12 520h1v1h-1zM82 520h1v1h-1zM117 520h1v1h-1zM152 520h1v1h-1zM187 520h1v1h-1zM256 520h1v1h-1zM291 520h1v1h-1zM326 520h1v1h-1zM361 520h1v1h-1zM431 520h1v1h-1zM466 520h1v1h-1zM501 520h1v1h-1zM536 520h1v1h-1zM606 520h1v1h-1zM641 520h1v1h-1zM676 520h1v1h-1zM711 520h1v1h-1zM781 520h1v1h-1zM816 520h1v1h-1zM851 520h1v1h-1zM886 520h1v1h-1zM956 520h1v1h-1zM991 520h1v1h-1zM1026 520h1v1h-1zM1061 520h1v1h-1zM1130 520h1v1h-1zM1165 520h1v1h-1zM1200 520h1v1h-1zM1235 520h1v1h-1zM1305 520h1v1h-1zM1340 520h1v1h-1zM1375 520h1v1h-1zM1410 520h1v1h-1zM1480 520h1v1h-1zM1515 520h1v1h-1zM1550 520h1v1h-1zM1585 520h1v1h-1zM1655 520h1v1h-1zM1690 520h1v1h-1zM1725 520h1v1h-1zM12 545h1v1h-1zM82 545h1v1h-1zM117 545h1v1h-1zM152 545h1v1h-1zM187 545h1v1h-1zM256 545h1v1h-1zM291 545h1v1h-1zM326 545h1v1h-1zM361 545h1v1h-1zM431 545h1v1h-1zM466 545h1v1h-1zM501 545h1v1h-1zM536 545h1v1h-1zM606 545h1v1h-1zM641 545h1v1h-1zM676 545h1v1h-1zM711 545h1v1h-1zM781 545h1v1h-1zM816 545h1v1h-1zM851 545h1v1h-1zM886 545h1v1h-1zM956 545h1v1h-1zM991 545h1v1h-1zM1026 545h1v1h-1zM1061 545h1v1h-1zM1130 545h1v1h-1zM1165 545h1v1h-1zM1200 545h1v1h-1zM1235 545h1v1h-1zM1305 545h1v1h-1zM1340 545h1v1h-1zM1375 545h1v1h-1zM1410 545h1v1h-1zM1480 545h1v1h-1zM1515 545h1v1h-1zM1550 545h1v1h-1zM1585 545h1v1h-1zM1655 545h1v1h-1zM1690 545h1v1h-1zM1725 545h1v1h-1zM12 568h1v1h-1zM82 568h1v1h-1zM117 568h1v1h-1zM152 568h1v1h-1zM187 568h1v1h-1zM256 568h1v1h-1zM291 568h1v1h-1zM326 568h1v1h-1zM361 568h1v1h-1zM431 568h1v1h-1zM466 568h1v1h-1zM501 568h1v1h-1zM536 568h1v1h-1zM606 568h1v1h-1zM641 568h1v1h-1zM676 568h1v1h-1zM711 568h1v1h-1zM781 568h1v1h-1zM816 568h1v1h-1zM851 568h1v1h-1zM886 568h1v1h-1zM956 568h1v1h-1zM991 568h1v1h-1zM1026 568h1v1h-1zM1061 568h1v1h-1zM1130 568h1v1h-1zM1165 568h1v1h-1zM1200 568h1v1h-1zM1235 568h1v1h-1zM1305 568h1v1h-1zM1340 568h1v1h-1zM1375 568h1v1h-1zM1410 568h1v1h-1zM1480 568h1v1h-1zM1515 568h1v1h-1zM1550 568h1v1h-1zM1585 568h1v1h-1zM1655 568h1v1h-1zM1690 568h1v1h-1zM1725 568h1v1h-1zM12 591h1v1h-1zM82 591h1v1h-1zM117 591h1v1h-1zM152 591h1v1h-1zM187 591h1v1h-1zM256 591h1v1h-1zM291 591h1v1h-1zM326 591h1v1h-1zM361 591h1v1h-1zM431 591h1v1h-1zM466 591h1v1h-1zM501 591h1v1h-1zM536 591h1v1h-1zM606 591h1v1h-1zM641 591h1v1h-1zM676 591h1v1h-1zM711 591h1v1h-1zM781 591h1v1h-1zM816 591h1v1h-1zM851 591h1v1h-1zM886 591h1v1h-1zM956 591h1v1h-1zM991 591h1v1h-1zM1026 591h1v1h-1zM1061 591h1v1h-1zM1130 591h1v1h-1zM1165 591h1v1h-1zM1200 591h1v1h-1zM1235 591h1v1h-1zM1305 591h1v1h-1zM1340 591h1v1h-1zM1375 591h1v1h-1zM1410 591h1v1h-1zM1480 591h1v1h-1zM1515 591h1v1h-1zM1550 591h1v1h-1zM1585 591h1v1h-1zM1655 591h1v1h-1zM1690 591h1v1h-1zM1725 591h1v1h-1zM12 615h1v1h-1zM82 615h1v1h-1zM117 615h1v1h-1zM152 615h1v1h-1zM187 615h1v1h-1zM256 615h1v1h-1zM291 615h1v1h-1zM326 615h1v1h-1zM361 615h1v1h-1zM431 615h1v1h-1zM466 615h1v1h-1zM501 615h1v1h-1zM536 615h1v1h-1zM606 615h1v1h-1zM641 615h1v1h-1zM676 615h1v1h-1zM711 615h1v1h-1zM781 615h1v1h-1zM816 615h1v1h-1zM851 615h1v1h-1zM886 615h1v1h-1zM956 615h1v1h-1zM991 615h1v1h-1zM1026 615h1v1h-1zM1061 615h1v1h-1zM1130 615h1v1h-1zM1165 615h1v1h-1zM1200 615h1v1h-1zM1235 615h1v1h-1zM1305 615h1v1h-1zM1340 615h1v1h-1zM1375 615h1v1h-1zM1410 615h1v1h-1zM1480 615h1v1h-1zM1515 615h1v1h-1zM1550 615h1v1h-1zM1585 615h1v1h-1zM1655 615h1v1h-1zM1690 615h1v1h-1zM1725 615h1v1h-1zM12 638h1v1h-1zM82 638h1v1h-1zM117 638h1v1h-1zM152 638h1v1h-1zM187 638h1v1h-1zM256 638h1v1h-1zM291 638h1v1h-1zM326 638h1v1h-1zM361 638h1v1h-1zM431 638h1v1h-1zM466 638h1v1h-1zM501 638h1v1h-1zM536 638h1v1h-1zM606 638h1v1h-1zM641 638h1v1h-1zM676 638h1v1h-1zM711 638h1v1h-1zM781 638h1v1h-1zM816 638h1v1h-1zM851 638h1v1h-1zM886 638h1v1h-1zM956 638h1v1h-1zM991 638h1v1h-1zM1026 638h1v1h-1zM1061 638h1v1h-1zM1130 638h1v1h-1zM1165 638h1v1h-1zM1200 638h1v1h-1zM1235 638h1v1h-1zM1305 638h1v1h-1zM1340 638h1v1h-1zM1375 638h1v1h-1zM1410 638h1v1h-1zM1480 638h1v1h-1zM1515 638h1v1h-1zM1550 638h1v1h-1zM1585 638h1v1h-1zM1655 638h1v1h-1zM1690 638h1v1h-1zM1725 638h1v1h-1zM12 661h1v1h-1zM82 661h1v1h-1zM117 661h1v1h-1zM152 661h1v1h-1zM187 661h1v1h-1zM256 661h1v1h-1zM291 661h1v1h-1zM326 661h1v1h-1zM361 661h1v1h-1zM431 661h1v1h-1zM466 661h1v1h-1zM501 661h1v1h-1zM536 661h1v1h-1zM606 661h1v1h-1zM641 661h1v1h-1zM676 661h1v1h-1zM711 661h1v1h-1zM781 661h1v1h-1zM816 661h1v1h-1zM851 661h1v1h-1zM886 661h1v1h-1zM956 661h1v1h-1zM991 661h1v1h-1zM1026 661h1v1h-1zM1061 661h1v1h-1zM1130 661h1v1h-1zM1165 661h1v1h-1zM1200 661h1v1h-1zM1235 661h1v1h-1zM1305 661h1v1h-1zM1340 661h1v1h-1zM1375 661h1v1h-1zM1410 661h1v1h-1zM1480 661h1v1h-1zM1515 661h1v1h-1zM1550 661h1v1h-1zM1585 661h1v1h-1zM1655 661h1v1h-1zM1690 661h1v1h-1zM1725 661h1v1h-1zM12 684h1v1h-1zM82 684h1v1h-1zM117 684h1v1h-1zM152 684h1v1h-1zM187 684h1v1h-1zM256 684h1v1h-1zM291 684h1v1h-1zM326 684h1v1h-1zM361 684h1v1h-1zM431 684h1v1h-1zM466 684h1v1h-1zM501 684h1v1h-1zM536 684h1v1h-1zM606 684h1v1h-1zM641 684h1v1h-1zM676 684h1v1h-1zM711 684h1v1h-1zM781 684h1v1h-1zM816 684h1v1h-1zM851 684h1v1h-1zM886 684h1v1h-1zM956 684h1v1h-1zM991 684h1v1h-1zM1026 684h1v1h-1zM1061 684h1v1h-1zM1130 684h1v1h-1zM1165 684h1v1h-1zM1200 684h1v1h-1zM1235 684h1v1h-1zM1305 684h1v1h-1zM1340 684h1v1h-1zM1375 684h1v1h-1zM1410 684h1v1h-1zM1480 684h1v1h-1zM1515 684h1v1h-1zM1550 684h1v1h-1zM1585 684h1v1h-1zM1655 684h1v1h-1zM1690 684h1v1h-1zM1725 684h1v1h-1zM12 707h1v1h-1zM82 707h1v1h-1zM117 707h1v1h-1zM152 707h1v1h-1zM187 707h1v1h-1zM256 707h1v1h-1zM291 707h1v1h-1zM326 707h1v1h-1zM361 707h1v1h-1zM431 707h1v1h-1zM466 707h1v1h-1zM501 707h1v1h-1zM536 707h1v1h-1zM606 707h1v1h-1zM641 707h1v1h-1zM676 707h1v1h-1zM711 707h1v1h-1zM781 707h1v1h-1zM816 707h1v1h-1zM851 707h1v1h-1zM886 707h1v1h-1zM956 707h1v1h-1zM991 707h1v1h-1zM1026 707h1v1h-1zM1061 707h1v1h-1zM1130 707h1v1h-1zM1165 707h1v1h-1zM1200 707h1v1h-1zM1235 707h1v1h-1zM1305 707h1v1h-1zM1340 707h1v1h-1zM1375 707h1v1h-1zM1410 707h1v1h-1zM1480 707h1v1h-1zM1515 707h1v1h-1zM1550 707h1v1h-1zM1585 707h1v1h-1zM1655 707h1v1h-1zM1690 707h1v1h-1zM1725 707h1v1h-1zM12 731h1v1h-1zM82 731h1v1h-1zM117 731h1v1h-1zM152 731h1v1h-1zM187 731h1v1h-1zM256 731h1v1h-1zM291 731h1v1h-1zM326 731h1v1h-1zM361 731h1v1h-1zM431 731h1v1h-1zM466 731h1v1h-1zM501 731h1v1h-1zM536 731h1v1h-1zM606 731h1v1h-1zM641 731h1v1h-1zM676 731h1v1h-1zM711 731h1v1h-1zM781 731h1v1h-1zM816 731h1v1h-1zM851 731h1v1h-1zM886 731h1v1h-1zM956 731h1v1h-1zM991 731h1v1h-1zM1026 731h1v1h-1zM1061 731h1v1h-1zM1130 731h1v1h-1zM1165 731h1v1h-1zM1200 731h1v1h-1zM1235 731h1v1h-1zM1305 731h1v1h-1zM1340 731h1v1h-1zM1375 731h1v1h-1zM1410 731h1v1h-1zM1480 731h1v1h-1zM1515 731h1v1h-1zM1550 731h1v1h-1zM1585 731h1v1h-1zM1655 731h1v1h-1zM1690 731h1v1h-1zM1725 731h1v1h-1zM12 754h1v1h-1zM82 754h1v1h-1zM117 754h1v1h-1zM152 754h1v1h-1zM187 754h1v1h-1zM256 754h1v1h-1zM291 754h1v1h-1zM326 754h1v1h-1zM361 754h1v1h-1zM431 754h1v1h-1zM466 754h1v1h-1zM501 754h1v1h-1zM536 754h1v1h-1zM606 754h1v1h-1zM641 754h1v1h-1zM676 754h1v1h-1zM711 754h1v1h-1zM781 754h1v1h-1zM816 754h1v1h-1zM851 754h1v1h-1zM886 754h1v1h-1zM956 754h1v1h-1zM991 754h1v1h-1zM1026 754h1v1h-1zM1061 754h1v1h-1zM1130 754h1v1h-1zM1165 754h1v1h-1zM1200 754h1v1h-1zM1235 754h1v1h-1zM1305 754h1v1h-1zM1340 754h1v1h-1zM1375 754h1v1h-1zM1410 754h1v1h-1zM1480 754h1v1h-1zM1515 754h1v1h-1zM1550 754h1v1h-1zM1585 754h1v1h-1zM1655 754h1v1h-1zM1690 754h1v1h-1zM1725 754h1v1h-1zM12 773h1v1h-1zM82 773h1v1h-1zM117 773h1v1h-1zM152 773h1v1h-1zM187 773h1v1h-1zM256 773h1v1h-1zM291 773h1v1h-1zM326 773h1v1h-1zM361 773h1v1h-1zM431 773h1v1h-1zM466 773h1v1h-1zM501 773h1v1h-1zM536 773h1v1h-1zM606 773h1v1h-1zM641 773h1v1h-1zM676 773h1v1h-1zM711 773h1v1h-1zM781 773h1v1h-1zM816 773h1v1h-1zM851 773h1v1h-1zM886 773h1v1h-1zM956 773h1v1h-1zM991 773h1v1h-1zM1026 773h1v1h-1zM1061 773h1v1h-1zM1130 773h1v1h-1zM1165 773h1v1h-1zM1200 773h1v1h-1zM1235 773h1v1h-1zM1305 773h1v1h-1zM1340 773h1v1h-1zM1375 773h1v1h-1zM1410 773h1v1h-1zM1480 773h1v1h-1zM1515 773h1v1h-1zM1550 773h1v1h-1zM1585 773h1v1h-1zM1655 773h1v1h-1zM1690 773h1v1h-1zM1725 773h1v1h-1zM12 797h1v1h-1zM82 797h1v1h-1zM117 797h1v1h-1zM152 797h1v1h-1zM187 797h1v1h-1zM256 797h1v1h-1zM291 797h1v1h-1zM326 797h1v1h-1zM361 797h1v1h-1zM431 797h1v1h-1zM466 797h1v1h-1zM501 797h1v1h-1zM536 797h1v1h-1zM606 797h1v1h-1zM641 797h1v1h-1zM676 797h1v1h-1zM711 797h1v1h-1zM781 797h1v1h-1zM816 797h1v1h-1zM851 797h1v1h-1zM886 797h1v1h-1zM956 797h1v1h-1zM991 797h1v1h-1zM1026 797h1v1h-1zM1061 797h1v1h-1zM1130 797h1v1h-1zM1165 797h1v1h-1zM1200 797h1v1h-1zM1235 797h1v1h-1zM1305 797h1v1h-1zM1340 797h1v1h-1zM1375 797h1v1h-1zM1410 797h1v1h-1zM1480 797h1v1h-1zM1515 797h1v1h-1zM1550 797h1v1h-1zM1585 797h1v1h-1zM1655 797h1v1h-1zM1690 797h1v1h-1zM1725 797h1v1h-1zM12 820h1v1h-1zM82 820h1v1h-1zM117 820h1v1h-1zM152 820h1v1h-1zM187 820h1v1h-1zM256 820h1v1h-1zM291 820h1v1h-1zM326 820h1v1h-1zM361 820h1v1h-1zM431 820h1v1h-1zM466 820h1v1h-1zM501 820h1v1h-1zM536 820h1v1h-1zM606 820h1v1h-1zM641 820h1v1h-1zM676 820h1v1h-1zM711 820h1v1h-1zM781 820h1v1h-1zM816 820h1v1h-1zM851 820h1v1h-1zM886 820h1v1h-1zM956 820h1v1h-1zM991 820h1v1h-1zM1026 820h1v1h-1zM1061 820h1v1h-1zM1130 820h1v1h-1zM1165 820h1v1h-1zM1200 820h1v1h-1zM1235 820h1v1h-1zM1305 820h1v1h-1zM1340 820h1v1h-1zM1375 820h1v1h-1zM1410 820h1v1h-1zM1480 820h1v1h-1zM1515 820h1v1h-1zM1550 820h1v1h-1zM1585 820h1v1h-1zM1655 820h1v1h-1zM1690 820h1v1h-1zM1725 820h1v1h-1zM12 843h1v1h-1zM82 843h1v1h-1zM117 843h1v1h-1zM152 843h1v1h-1zM187 843h1v1h-1zM256 843h1v1h-1zM291 843h1v1h-1zM326 843h1v1h-1zM361 843h1v1h-1zM431 843h1v1h-1zM466 843h1v1h-1zM501 843h1v1h-1zM536 843h1v1h-1zM606 843h1v1h-1zM641 843h1v1h-1zM676 843h1v1h-1zM711 843h1v1h-1zM781 843h1v1h-1zM816 843h1v1h-1zM851 843h1v1h-1zM886 843h1v1h-1zM956 843h1v1h-1zM991 843h1v1h-1zM1026 843h1v1h-1zM1061 843h1v1h-1zM1130 843h1v1h-1zM1165 843h1v1h-1zM1200 843h1v1h-1zM1235 843h1v1h-1zM1305 843h1v1h-1zM1340 843h1v1h-1zM1375 843h1v1h-1zM1410 843h1v1h-1zM1480 843h1v1h-1zM1515 843h1v1h-1zM1550 843h1v1h-1zM1585 843h1v1h-1zM1655 843h1v1h-1zM1690 843h1v1h-1zM1725 843h1v1h-1zM12 866h1v1h-1zM82 866h1v1h-1zM117 866h1v1h-1zM152 866h1v1h-1zM187 866h1v1h-1zM256 866h1v1h-1zM291 866h1v1h-1zM326 866h1v1h-1zM361 866h1v1h-1zM431 866h1v1h-1zM466 866h1v1h-1zM501 866h1v1h-1zM536 866h1v1h-1zM606 866h1v1h-1zM641 866h1v1h-1zM676 866h1v1h-1zM711 866h1v1h-1zM781 866h1v1h-1zM816 866h1v1h-1zM851 866h1v1h-1zM886 866h1v1h-1zM956 866h1v1h-1zM991 866h1v1h-1zM1026 866h1v1h-1zM1061 866h1v1h-1zM1130 866h1v1h-1zM1165 866h1v1h-1zM1200 866h1v1h-1zM1235 866h1v1h-1zM1305 866h1v1h-1zM1340 866h1v1h-1zM1375 866h1v1h-1zM1410 866h1v1h-1zM1480 866h1v1h-1zM1515 866h1v1h-1zM1550 866h1v1h-1zM1585 866h1v1h-1zM1655 866h1v1h-1zM1690 866h1v1h-1zM1725 866h1v1h-1zM12 890h1v1h-1zM82 890h1v1h-1zM117 890h1v1h-1zM152 890h1v1h-1zM187 890h1v1h-1zM256 890h1v1h-1zM291 890h1v1h-1zM326 890h1v1h-1zM361 890h1v1h-1zM431 890h1v1h-1zM466 890h1v1h-1zM501 890h1v1h-1zM536 890h1v1h-1zM606 890h1v1h-1zM641 890h1v1h-1zM676 890h1v1h-1zM711 890h1v1h-1zM781 890h1v1h-1zM816 890h1v1h-1zM851 890h1v1h-1zM886 890h1v1h-1zM956 890h1v1h-1zM991 890h1v1h-1zM1026 890h1v1h-1zM1061 890h1v1h-1zM1130 890h1v1h-1zM1165 890h1v1h-1zM1200 890h1v1h-1zM1235 890h1v1h-1zM1305 890h1v1h-1zM1340 890h1v1h-1zM1375 890h1v1h-1zM1410 890h1v1h-1zM1480 890h1v1h-1zM1515 890h1v1h-1zM1550 890h1v1h-1zM1585 890h1v1h-1zM1655 890h1v1h-1zM1690 890h1v1h-1zM1725 890h1v1h-1zM12 913h1v1h-1zM82 913h1v1h-1zM117 913h1v1h-1zM152 913h1v1h-1zM187 913h1v1h-1zM256 913h1v1h-1zM291 913h1v1h-1zM326 913h1v1h-1zM361 913h1v1h-1zM431 913h1v1h-1zM466 913h1v1h-1zM501 913h1v1h-1zM536 913h1v1h-1zM606 913h1v1h-1zM641 913h1v1h-1zM676 913h1v1h-1zM711 913h1v1h-1zM781 913h1v1h-1zM816 913h1v1h-1zM851 913h1v1h-1zM886 913h1v1h-1zM956 913h1v1h-1zM991 913h1v1h-1zM1026 913h1v1h-1zM1061 913h1v1h-1zM1130 913h1v1h-1zM1165 913h1v1h-1zM1200 913h1v1h-1zM1235 913h1v1h-1zM1305 913h1v1h-1zM1340 913h1v1h-1zM1375 913h1v1h-1zM1410 913h1v1h-1zM1480 913h1v1h-1zM1515 913h1v1h-1zM1550 913h1v1h-1zM1585 913h1v1h-1zM1655 913h1v1h-1zM1690 913h1v1h-1zM1725 913h1v1h-1zM12 936h1v1h-1zM82 936h1v1h-1zM117 936h1v1h-1zM152 936h1v1h-1zM187 936h1v1h-1zM256 936h1v1h-1zM291 936h1v1h-1zM326 936h1v1h-1zM361 936h1v1h-1zM431 936h1v1h-1zM466 936h1v1h-1zM501 936h1v1h-1zM536 936h1v1h-1zM606 936h1v1h-1zM641 936h1v1h-1zM676 936h1v1h-1zM711 936h1v1h-1zM781 936h1v1h-1zM816 936h1v1h-1zM851 936h1v1h-1zM886 936h1v1h-1zM956 936h1v1h-1zM991 936h1v1h-1zM1026 936h1v1h-1zM1061 936h1v1h-1zM1130 936h1v1h-1zM1165 936h1v1h-1zM1200 936h1v1h-1zM1235 936h1v1h-1zM1305 936h1v1h-1zM1340 936h1v1h-1zM1375 936h1v1h-1zM1410 936h1v1h-1zM1480 936h1v1h-1zM1515 936h1v1h-1zM1550 936h1v1h-1zM1585 936h1v1h-1zM1655 936h1v1h-1zM1690 936h1v1h-1zM1725 936h1v1h-1zM12 959h1v1h-1zM82 959h1v1h-1zM117 959h1v1h-1zM152 959h1v1h-1zM187 959h1v1h-1zM256 959h1v1h-1zM291 959h1v1h-1zM326 959h1v1h-1zM361 959h1v1h-1zM431 959h1v1h-1zM466 959h1v1h-1zM501 959h1v1h-1zM536 959h1v1h-1zM606 959h1v1h-1zM641 959h1v1h-1zM676 959h1v1h-1zM711 959h1v1h-1zM781 959h1v1h-1zM816 959h1v1h-1zM851 959h1v1h-1zM886 959h1v1h-1zM956 959h1v1h-1zM991 959h1v1h-1zM1026 959h1v1h-1zM1061 959h1v1h-1zM1130 959h1v1h-1zM1165 959h1v1h-1zM1200 959h1v1h-1zM1235 959h1v1h-1zM1305 959h1v1h-1zM1340 959h1v1h-1zM1375 959h1v1h-1zM1410 959h1v1h-1zM1480 959h1v1h-1zM1515 959h1v1h-1zM1550 959h1v1h-1zM1585 959h1v1h-1zM1655 959h1v1h-1zM1690 959h1v1h-1zM1725 959h1v1h-1zM12 983h1v1h-1zM82 983h1v1h-1zM117 983h1v1h-1zM152 983h1v1h-1zM187 983h1v1h-1zM256 983h1v1h-1zM291 983h1v1h-1zM326 983h1v1h-1zM361 983h1v1h-1zM431 983h1v1h-1zM466 983h1v1h-1zM501 983h1v1h-1zM536 983h1v1h-1zM606 983h1v1h-1zM641 983h1v1h-1zM676 983h1v1h-1zM711 983h1v1h-1zM781 983h1v1h-1zM816 983h1v1h-1zM851 983h1v1h-1zM886 983h1v1h-1zM956 983h1v1h-1zM991 983h1v1h-1zM1026 983h1v1h-1zM1061 983h1v1h-1zM1130 983h1v1h-1zM1165 983h1v1h-1zM1200 983h1v1h-1zM1235 983h1v1h-1zM1305 983h1v1h-1zM1340 983h1v1h-1zM1375 983h1v1h-1zM1410 983h1v1h-1zM1480 983h1v1h-1zM1515 983h1v1h-1zM1550 983h1v1h-1zM1585 983h1v1h-1zM1655 983h1v1h-1zM1690 983h1v1h-1zM1725 983h1v1h-1z" fill="#bdbdbd"/><path d="M222 57h1v1h-1zM222 62h1v1h-1zM222 66h1v1h-1zM222 71h1v1h-1zM222 76h1v1h-1zM222 80h1v1h-1zM222 85h1v1h-1zM222 89h1v1h-1zM222 94h1v1h-1zM222 99h1v1h-1zM222 103h1v1h-1zM222 108h1v1h-1zM222 113h1v1h-1zM222 117h1v1h-1zM222 122h1v1h-1zM222 127h1v1h-1zM222 131h1v1h-1zM222 136h1v1h-1zM222 141h1v1h-1zM222 145h1v1h-1zM222 150h1v1h-1zM222 154h1v1h-1zM222 159h1v1h-1zM222 164h1v1h-1zM222 168h1v1h-1zM222 173h1v1h-1zM222 178h1v1h-1zM222 182h1v1h-1zM222 187h1v1h-1zM222 192h1v1h-1zM222 196h1v1h-1zM222 201h1v1h-1zM222 205h1v1h-1zM222 210h1v1h-1zM222 215h1v1h-1zM222 219h1v1h-1zM222 224h1v1h-1zM222 229h1v1h-1zM222 233h1v1h-1zM222 238h1v1h-1zM222 243h1v1h-1zM222 247h1v1h-1zM222 252h1v1h-1zM222 257h1v1h-1zM222 261h1v1h-1zM222 266h1v1h-1zM222 270h1v1h-1zM222 275h1v1h-1zM222 280h1v1h-1zM222 284h1v1h-1zM222 291h1v1h-1zM222 296h1v1h-1zM222 300h1v1h-1zM222 305h1v1h-1zM222 310h1v1h-1zM222 314h1v1h-1zM222 319h1v1h-1zM222 324h1v1h-1zM222 328h1v1h-1zM222 333h1v1h-1zM222 338h1v1h-1zM222 342h1v1h-1zM222 347h1v1h-1zM222 352h1v1h-1zM222 356h1v1h-1zM222 361h1v1h-1zM222 365h1v1h-1zM222 370h1v1h-1zM222 375h1v1h-1zM222 379h1v1h-1zM222 384h1v1h-1zM222 389h1v1h-1zM222 393h1v1h-1zM222 398h1v1h-1zM222 403h1v1h-1zM222 407h1v1h-1zM222 412h1v1h-1zM222 416h1v1h-1zM222 421h1v1h-1zM222 426h1v1h-1zM222 430h1v1h-1zM222 435h1v1h-1zM222 440h1v1h-1zM222 444h1v1h-1zM222 449h1v1h-1zM222 454h1v1h-1zM222 458h1v1h-1zM222 463h1v1h-1zM222 468h1v1h-1zM222 472h1v1h-1zM222 477h1v1h-1zM222 481h1v1h-1zM222 486h1v1h-1zM222 491h1v1h-1zM222 495h1v1h-1zM222 500h1v1h-1zM222 505h1v1h-1zM222 509h1v1h-1zM222 514h1v1h-1zM222 519h1v1h-1zM222 525h1v1h-1zM222 530h1v1h-1zM222 535h1v1h-1zM222 539h1v1h-1zM222 544h1v1h-1zM222 548h1v1h-1zM222 553h1v1h-1zM222 558h1v1h-1zM222 562h1v1h-1zM222 567h1v1h-1zM222 572h1v1h-1zM222 576h1v1h-1zM222 581h1v1h-1zM222 586h1v1h-1zM222 590h1v1h-1zM222 595h1v1h-1zM222 600h1v1h-1zM222 604h1v1h-1zM222 609h1v1h-1zM222 613h1v1h-1zM222 618h1v1h-1zM222 623h1v1h-1zM222 627h1v1h-1zM222 632h1v1h-1zM222 637h1v1h-1zM222 641h1v1h-1zM222 646h1v1h-1zM222 651h1v1h-1zM222 655h1v1h-1zM222 660h1v1h-1zM222 664h1v1h-1zM222 669h1v1h-1zM222 674h1v1h-1zM222 678h1v1h-1zM222 683h1v1h-1zM222 688h1v1h-1zM222 692h1v1h-1zM222 697h1v1h-1zM222 702h1v1h-1zM222 706h1v1h-1zM222 711h1v1h-1zM222 716h1v1h-1zM222 720h1v1h-1zM222 725h1v1h-1zM222 729h1v1h-1zM222 734h1v1h-1zM222 739h1v1h-1zM222 743h1v1h-1zM222 748h1v1h-1zM222 753h1v1h-1zM222 760h1v1h-1zM222 764h1v1h-1zM222 769h1v1h-1zM222 773h1v1h-1zM222 778h1v1h-1zM222 783h1v1h-1zM222 787h1v1h-1zM222 792h1v1h-1zM222 797h1v1h-1zM222 801h1v1h-1zM222 806h1v1h-1zM222 811h1v1h-1zM222 815h1v1h-1zM222 820h1v1h-1zM222 824h1v1h-1zM222 829h1v1h-1zM222 834h1v1h-1zM222 838h1v1h-1zM222 843h1v1h-1zM222 848h1v1h-1zM222 852h1v1h-1zM222 857h1v1h-1zM222 862h1v1h-1zM222 866h1v1h-1zM222 871h1v1h-1zM222 876h1v1h-1zM222 880h1v1h-1zM222 885h1v1h-1zM222 889h1v1h-1zM222 894h1v1h-1zM222 899h1v1h-1zM222 903h1v1h-1zM222 908h1v1h-1zM222 913h1v1h-1zM222 917h1v1h-1zM222 922h1v1h-1zM222 927h1v1h-1zM222 931h1v1h-1zM222 936h1v1h-1zM222 940h1v1h-1zM222 945h1v1h-1zM222 950h1v1h-1zM222 954h1v1h-1zM222 959h1v1h-1zM222 964h1v1h-1zM222 968h1v1h-1zM222 973h1v1h-1zM222 978h1v1h-1zM222 982h1v1h-1zM222 987h1v1h-1zM396 57h1v1h-1zM396 62h1v1h-1zM396 66h1v1h-1zM396 71h1v1h-1zM396 76h1v1h-1zM396 80h1v1h-1zM396 85h1v1h-1zM396 89h1v1h-1zM396 94h1v1h-1zM396 99h1v1h-1zM396 103h1v1h-1zM396 108h1v1h-1zM396 113h1v1h-1zM396 117h1v1h-1zM396 122h1v1h-1zM396 127h1v1h-1zM396 131h1v1h-1zM396 136h1v1h-1zM396 141h1v1h-1zM396 145h1v1h-1zM396 150h1v1h-1zM396 154h1v1h-1zM396 159h1v1h-1zM396 164h1v1h-1zM396 168h1v1h-1zM396 173h1v1h-1zM396 178h1v1h-1zM396 182h1v1h-1zM396 187h1v1h-1zM396 192h1v1h-1zM396 196h1v1h-1zM396 201h1v1h-1zM396 205h1v1h-1zM396 210h1v1h-1zM396 215h1v1h-1zM396 219h1v1h-1zM396 224h1v1h-1zM396 229h1v1h-1zM396 233h1v1h-1zM396 238h1v1h-1zM396 243h1v1h-1zM396 247h1v1h-1zM396 252h1v1h-1zM396 257h1v1h-1zM396 261h1v1h-1zM396 266h1v1h-1zM396 270h1v1h-1zM396 275h1v1h-1zM396 280h1v1h-1zM396 284h1v1h-1zM396 291h1v1h-1zM396 296h1v1h-1zM396 300h1v1h-1zM396 305h1v1h-1zM396 310h1v1h-1zM396 314h1v1h-1zM396 319h1v1h-1zM396 324h1v1h-1zM396 328h1v1h-1zM396 333h1v1h-1zM396 338h1v1h-1zM396 342h1v1h-1zM396 347h1v1h-1zM396 352h1v1h-1zM396 356h1v1h-1zM396 361h1v1h-1zM396 365h1v1h-1zM396 370h1v1h-1zM396 375h1v1h-1zM396 379h1v1h-1zM396 384h1v1h-1zM396 389h1v1h-1zM396 393h1v1h-1zM396 398h1v1h-1zM396 403h1v1h-1zM396 407h1v1h-1zM396 412h1v1h-1zM396 416h1v1h-1zM396 421h1v1h-1zM396 426h1v1h-1zM396 430h1v1h-1zM396 435h1v1h-1zM396 440h1v1h-1zM396 444h1v1h-1zM396 449h1v1h-1zM396 454h1v1h-1zM396 458h1v1h-1zM396 463h1v1h-1zM396 468h1v1h-1zM396 472h1v1h-1zM396 477h1v1h-1zM396 481h1v1h-1zM396 486h1v1h-1zM396 491h1v1h-1zM396 495h1v1h-1zM396 500h1v1h-1zM396 505h1v1h-1zM396 509h1v1h-1zM396 514h1v1h-1zM396 519h1v1h-1zM396 525h1v1h-1zM396 530h1v1h-1zM396 535h1v1h-1zM396 539h1v1h-1zM396 544h1v1h-1zM396 548h1v1h-1zM396 553h1v1h-1zM396 558h1v1h-1zM396 562h1v1h-1zM396 567h1v1h-1zM396 572h1v1h-1zM396 576h1v1h-1zM396 581h1v1h-1zM396 586h1v1h-1zM396 590h1v1h-1zM396 595h1v1h-1zM396 600h1v1h-1zM396 604h1v1h-1zM396 609h1v1h-1zM396 613h1v1h-1zM396 618h1v1h-1zM396 623h1v1h-1zM396 627h1v1h-1zM396 632h1v1h-1zM396 637h1v1h-1zM396 641h1v1h-1zM396 646h1v1h-1zM396 651h1v1h-1zM396 655h1v1h-1zM396 660h1v1h-1zM396 664h1v1h-1zM396 669h1v1h-1zM396 674h1v1h-1zM396 678h1v1h-1zM396 683h1v1h-1zM396 688h1v1h-1zM396 692h1v1h-1zM396 697h1v1h-1zM396 702h1v1h-1zM396 706h1v1h-1zM396 711h1v1h-1zM396 716h1v1h-1zM396 720h1v1h-1zM396 725h1v1h-1zM396 729h1v1h-1zM396 734h1v1h-1zM396 739h1v1h-1zM396 743h1v1h-1zM396 748h1v1h-1zM396 753h1v1h-1zM396 760h1v1h-1zM396 764h1v1h-1zM396 769h1v1h-1zM396 773h1v1h-1zM396 778h1v1h-1zM396 783h1v1h-1zM396 787h1v1h-1zM396 792h1v1h-1zM396 797h1v1h-1zM396 801h1v1h-1zM396 806h1v1h-1zM396 811h1v1h-1zM396 815h1v1h-1zM396 820h1v1h-1zM396 824h1v1h-1zM396 829h1v1h-1zM396 834h1v1h-1zM396 838h1v1h-1zM396 843h1v1h-1zM396 848h1v1h-1zM396 852h1v1h-1zM396 857h1v1h-1zM396 862h1v1h-1zM396 866h1v1h-1zM396 871h1v1h-1zM396 876h1v1h-1zM396 880h1v1h-1zM396 885h1v1h-1zM396 889h1v1h-1zM396 894h1v1h-1zM396 899h1v1h-1zM396 903h1v1h-1zM396 908h1v1h-1zM396 913h1v1h-1zM396 917h1v1h-1zM396 922h1v1h-1zM396 927h1v1h-1zM396 931h1v1h-1zM396 936h1v1h-1zM396 940h1v1h-1zM396 945h1v1h-1zM396 950h1v1h-1zM396 954h1v1h-1zM396 959h1v1h-1zM396 964h1v1h-1zM396 968h1v1h-1zM396 973h1v1h-1zM396 978h1v1h-1zM396 982h1v1h-1zM396 987h1v1h-1zM571 57h1v1h-1zM571 62h1v1h-1zM571 66h1v1h-1zM571 71h1v1h-1zM571 76h1v1h-1zM571 80h1v1h-1zM571 85h1v1h-1zM571 89h1v1h-1zM571 94h1v1h-1zM571 99h1v1h-1zM571 103h1v1h-1zM571 108h1v1h-1zM571 113h1v1h-1zM571 117h1v1h-1zM571 122h1v1h-1zM571 127h1v1h-1zM571 131h1v1h-1zM571 136h1v1h-1zM571 141h1v1h-1zM571 145h1v1h-1zM571 150h1v1h-1zM571 154h1v1h-1zM571 159h1v1h-1zM571 164h1v1h-1zM571 168h1v1h-1zM571 173h1v1h-1zM571 178h1v1h-1zM571 182h1v1h-1zM571 187h1v1h-1zM571 192h1v1h-1zM571 196h1v1h-1zM571 201h1v1h-1zM571 205h1v1h-1zM571 210h1v1h-1zM571 215h1v1h-1zM571 219h1v1h-1zM571 224h1v1h-1zM571 229h1v1h-1zM571 233h1v1h-1zM571 238h1v1h-1zM571 243h1v1h-1zM571 247h1v1h-1zM571 252h1v1h-1zM571 257h1v1h-1zM571 261h1v1h-1zM571 266h1v1h-1zM571 270h1v1h-1zM571 275h1v1h-1zM571 280h1v1h-1zM571 284h1v1h-1zM571 291h1v1h-1zM571 296h1v1h-1zM571 300h1v1h-1zM571 305h1v1h-1zM571 310h1v1h-1zM571 314h1v1h-1zM571 319h1v1h-1zM571 324h1v1h-1zM571 328h1v1h-1zM571 333h1v1h-1zM571 338h1v1h-1zM571 342h1v1h-1zM571 347h1v1h-1zM571 352h1v1h-1zM571 356h1v1h-1zM571 361h1v1h-1zM571 365h1v1h-1zM571 370h1v1h-1zM571 375h1v1h-1zM571 379h1v1h-1zM571 384h1v1h-1zM571 389h1v1h-1zM571 393h1v1h-1zM571 398h1v1h-1zM571 403h1v1h-1zM571 407h1v1h-1zM571 412h1v1h-1zM571 416h1v1h-1zM571 421h1v1h-1zM571 426h1v1h-1zM571 430h1v1h-1zM571 435h1v1h-1zM571 440h1v1h-1zM571 444h1v1h-1zM571 449h1v1h-1zM571 454h1v1h-1zM571 458h1v1h-1zM571 463h1v1h-1zM571 468h1v1h-1zM571 472h1v1h-1zM571 477h1v1h-1zM571 481h1v1h-1zM571 486h1v1h-1zM571 491h1v1h-1zM571 495h1v1h-1zM571 500h1v1h-1zM571 505h1v1h-1zM571 509h1v1h-1zM571 514h1v1h-1zM571 519h1v1h-1zM571 525h1v1h-1zM571 530h1v1h-1zM571 535h1v1h-1zM571 539h1v1h-1zM571 544h1v1h-1zM571 548h1v1h-1zM571 553h1v1h-1zM571 558h1v1h-1zM571 562h1v1h-1zM571 567h1v1h-1zM571 572h1v1h-1zM571 576h1v1h-1zM571 581h1v1h-1zM571 586h1v1h-1zM571 590h1v1h-1zM571 595h1v1h-1zM571 600h1v1h-1zM571 604h1v1h-1zM571 609h1v1h-1zM571 613h1v1h-1zM571 618h1v1h-1zM571 623h1v1h-1zM571 627h1v1h-1zM571 632h1v1h-1zM571 637h1v1h-1zM571 641h1v1h-1zM571 646h1v1h-1zM571 651h1v1h-1zM571 655h1v1h-1zM571 660h1v1h-1zM571 664h1v1h-1zM571 669h1v1h-1zM571 674h1v1h-1zM571 678h1v1h-1zM571 683h1v1h-1zM571 688h1v1h-1zM571 692h1v1h-1zM571 697h1v1h-1zM571 702h1v1h-1zM571 706h1v1h-1zM571 711h1v1h-1zM571 716h1v1h-1zM571 720h1v1h-1zM571 725h1v1h-1zM571 729h1v1h-1zM571 734h1v1h-1zM571 739h1v1h-1zM571 743h1v1h-1zM571 748h1v1h-1zM571 753h1v1h-1zM571 760h1v1h-1zM571 764h1v1h-1zM571 769h1v1h-1zM571 773h1v1h-1zM571 778h1v1h-1zM571 783h1v1h-1zM571 787h1v1h-1zM571 792h1v1h-1zM571 797h1v1h-1zM571 801h1v1h-1zM571 806h1v1h-1zM571 811h1v1h-1zM571 815h1v1h-1zM571 820h1v1h-1zM571 824h1v1h-1zM571 829h1v1h-1zM571 834h1v1h-1zM571 838h1v1h-1zM571 843h1v1h-1zM571 848h1v1h-1zM571 852h1v1h-1zM571 857h1v1h-1zM571 862h1v1h-1zM571 866h1v1h-1zM571 871h1v1h-1zM571 876h1v1h-1zM571 880h1v1h-1zM571 885h1v1h-1zM571 889h1v1h-1zM571 894h1v1h-1zM571 899h1v1h-1zM571 903h1v1h-1zM571 908h1v1h-1zM571 913h1v1h-1zM571 917h1v1h-1zM571 922h1v1h-1zM571 927h1v1h-1zM571 931h1v1h-1zM571 936h1v1h-1zM571 940h1v1h-1zM571 945h1v1h-1zM571 950h1v1h-1zM571 954h1v1h-1zM571 959h1v1h-1zM571 964h1v1h-1zM571 968h1v1h-1zM571 973h1v1h-1zM571 978h1v1h-1zM571 982h1v1h-1zM571 987h1v1h-1zM746 57h1v1h-1zM746 62h1v1h-1zM746 66h1v1h-1zM746 71h1v1h-1zM746 76h1v1h-1zM746 80h1v1h-1zM746 85h1v1h-1zM746 89h1v1h-1zM746 94h1v1h-1zM746 99h1v1h-1zM746 103h1v1h-1zM746 108h1v1h-1zM746 113h1v1h-1zM746 117h1v1h-1zM746 122h1v1h-1zM746 127h1v1h-1zM746 131h1v1h-1zM746 136h1v1h-1zM746 141h1v1h-1zM746 145h1v1h-1zM746 150h1v1h-1zM746 154h1v1h-1zM746 159h1v1h-1zM746 164h1v1h-1zM746 168h1v1h-1zM746 173h1v1h-1zM746 178h1v1h-1zM746 182h1v1h-1zM746 187h1v1h-1zM746 192h1v1h-1zM746 196h1v1h-1zM746 201h1v1h-1zM746 205h1v1h-1zM746 210h1v1h-1zM746 215h1v1h-1zM746 219h1v1h-1zM746 224h1v1h-1zM746 229h1v1h-1zM746 233h1v1h-1zM746 238h1v1h-1zM746 243h1v1h-1zM746 247h1v1h-1zM746 252h1v1h-1zM746 257h1v1h-1zM746 261h1v1h-1zM746 266h1v1h-1zM746 270h1v1h-1zM746 275h1v1h-1zM746 280h1v1h-1zM746 284h1v1h-1zM746 291h1v1h-1zM746 296h1v1h-1zM746 300h1v1h-1zM746 305h1v1h-1zM746 310h1v1h-1zM746 314h1v1h-1zM746 319h1v1h-1zM746 324h1v1h-1zM746 328h1v1h-1zM746 333h1v1h-1zM746 338h1v1h-1zM746 342h1v1h-1zM746 347h1v1h-1zM746 352h1v1h-1zM746 356h1v1h-1zM746 361h1v1h-1zM746 365h1v1h-1zM746 370h1v1h-1zM746 375h1v1h-1zM746 379h1v1h-1zM746 384h1v1h-1zM746 389h1v1h-1zM746 393h1v1h-1zM746 398h1v1h-1zM746 403h1v1h-1zM746 407h1v1h-1zM746 412h1v1h-1zM746 416h1v1h-1zM746 421h1v1h-1zM746 426h1v1h-1zM746 430h1v1h-1zM746 435h1v1h-1zM746 440h1v1h-1zM746 444h1v1h-1zM746 449h1v1h-1zM746 454h1v1h-1zM746 458h1v1h-1zM746 463h1v1h-1zM746 468h1v1h-1zM746 472h1v1h-1zM746 477h1v1h-1zM746 481h1v1h-1zM746 486h1v1h-1zM746 491h1v1h-1zM746 495h1v1h-1zM746 500h1v1h-1zM746 505h1v1h-1zM746 509h1v1h-1zM746 514h1v1h-1zM746 519h1v1h-1zM746 525h1v1h-1zM746 530h1v1h-1zM746 535h1v1h-1zM746 539h1v1h-1zM746 544h1v1h-1zM746 548h1v1h-1zM746 553h1v1h-1zM746 558h1v1h-1zM746 562h1v1h-1zM746 567h1v1h-1zM746 572h1v1h-1zM746 576h1v1h-1zM746 581h1v1h-1zM746 586h1v1h-1zM746 590h1v1h-1zM746 595h1v1h-1zM746 600h1v1h-1zM746 604h1v1h-1zM746 609h1v1h-1zM746 613h1v1h-1zM746 618h1v1h-1zM746 623h1v1h-1zM746 627h1v1h-1zM746 632h1v1h-1zM746 637h1v1h-1zM746 641h1v1h-1zM746 646h1v1h-1zM746 651h1v1h-1zM746 655h1v1h-1zM746 660h1v1h-1zM746 664h1v1h-1zM746 669h1v1h-1zM746 674h1v1h-1zM746 678h1v1h-1zM746 683h1v1h-1zM746 688h1v1h-1zM746 692h1v1h-1zM746 697h1v1h-1zM746 702h1v1h-1zM746 706h1v1h-1zM746 711h1v1h-1zM746 716h1v1h-1zM746 720h1v1h-1zM746 725h1v1h-1zM746 729h1v1h-1zM746 734h1v1h-1zM746 739h1v1h-1zM746 743h1v1h-1zM746 748h1v1h-1zM746 753h1v1h-1zM746 760h1v1h-1zM746 764h1v1h-1zM746 769h1v1h-1zM746 773h1v1h-1zM746 778h1v1h-1zM746 783h1v1h-1zM746 787h1v1h-1zM746 792h1v1h-1zM746 797h1v1h-1zM746 801h1v1h-1zM746 806h1v1h-1zM746 811h1v1h-1zM746 815h1v1h-1zM746 820h1v1h-1zM746 824h1v1h-1zM746 829h1v1h-1zM746 834h1v1h-1zM746 838h1v1h-1zM746 843h1v1h-1zM746 848h1v1h-1zM746 852h1v1h-1zM746 857h1v1h-1zM746 862h1v1h-1zM746 866h1v1h-1zM746 871h1v1h-1zM746 876h1v1h-1zM746 880h1v1h-1zM746 885h1v1h-1zM746 889h1v1h-1zM746 894h1v1h-1zM746 899h1v1h-1zM746 903h1v1h-1zM746 908h1v1h-1zM746 913h1v1h-1zM746 917h1v1h-1zM746 922h1v1h-1zM746 927h1v1h-1zM746 931h1v1h-1zM746 936h1v1h-1zM746 940h1v1h-1zM746 945h1v1h-1zM746 950h1v1h-1zM746 954h1v1h-1zM746 959h1v1h-1zM746 964h1v1h-1zM746 968h1v1h-1zM746 973h1v1h-1zM746 978h1v1h-1zM746 982h1v1h-1zM746 987h1v1h-1zM921 57h1v1h-1zM921 62h1v1h-1zM921 66h1v1h-1zM921 71h1v1h-1zM921 76h1v1h-1zM921 80h1v1h-1zM921 85h1v1h-1zM921 89h1v1h-1zM921 94h1v1h-1zM921 99h1v1h-1zM921 103h1v1h-1zM921 108h1v1h-1zM921 113h1v1h-1zM921 117h1v1h-1zM921 122h1v1h-1zM921 127h1v1h-1zM921 131h1v1h-1zM921 136h1v1h-1zM921 141h1v1h-1zM921 145h1v1h-1zM921 150h1v1h-1zM921 154h1v1h-1zM921 159h1v1h-1zM921 164h1v1h-1zM921 168h1v1h-1zM921 173h1v1h-1zM921 178h1v1h-1zM921 182h1v1h-1zM921 187h1v1h-1zM921 192h1v1h-1zM921 196h1v1h-1zM921 201h1v1h-1zM921 205h1v1h-1zM921 210h1v1h-1zM921 215h1v1h-1zM921 219h1v1h-1zM921 224h1v1h-1zM921 229h1v1h-1zM921 233h1v1h-1zM921 238h1v1h-1zM921 243h1v1h-1zM921 247h1v1h-1zM921 252h1v1h-1zM921 257h1v1h-1zM921 261h1v1h-1zM921 266h1v1h-1zM921 270h1v1h-1zM921 275h1v1h-1zM921 280h1v1h-1zM921 284h1v1h-1zM921 291h1v1h-1zM921 296h1v1h-1zM921 300h1v1h-1zM921 305h1v1h-1zM921 310h1v1h-1zM921 314h1v1h-1zM921 319h1v1h-1zM921 324h1v1h-1zM921 328h1v1h-1zM921 333h1v1h-1zM921 338h1v1h-1zM921 342h1v1h-1zM921 347h1v1h-1zM921 352h1v1h-1zM921 356h1v1h-1zM921 361h1v1h-1zM921 365h1v1h-1zM921 370h1v1h-1zM921 375h1v1h-1zM921 379h1v1h-1zM921 384h1v1h-1zM921 389h1v1h-1zM921 393h1v1h-1zM921 398h1v1h-1zM921 403h1v1h-1zM921 407h1v1h-1zM921 412h1v1h-1zM921 416h1v1h-1zM921 421h1v1h-1zM921 426h1v1h-1zM921 430h1v1h-1zM921 435h1v1h-1zM921 440h1v1h-1zM921 444h1v1h-1zM921 449h1v1h-1zM921 454h1v1h-1zM921 458h1v1h-1zM921 463h1v1h-1zM921 468h1v1h-1zM921 472h1v1h-1zM921 477h1v1h-1zM921 481h1v1h-1zM921 486h1v1h-1zM921 491h1v1h-1zM921 495h1v1h-1zM921 500h1v1h-1zM921 505h1v1h-1zM921 509h1v1h-1zM921 514h1v1h-1zM921 519h1v1h-1zM921 525h1v1h-1zM921 530h1v1h-1zM921 535h1v1h-1zM921 539h1v1h-1zM921 544h1v1h-1zM921 548h1v1h-1zM921 553h1v1h-1zM921 558h1v1h-1zM921 562h1v1h-1zM921 567h1v1h-1zM921 572h1v1h-1zM921 576h1v1h-1zM921 581h1v1h-1zM921 586h1v1h-1zM921 590h1v1h-1zM921 595h1v1h-1zM921 600h1v1h-1zM921 604h1v1h-1zM921 609h1v1h-1zM921 613h1v1h-1zM921 618h1v1h-1zM921 623h1v1h-1zM921 627h1v1h-1zM921 632h1v1h-1zM921 637h1v1h-1zM921 641h1v1h-1zM921 646h1v1h-1zM921 651h1v1h-1zM921 655h1v1h-1zM921 660h1v1h-1zM921 664h1v1h-1zM921 669h1v1h-1zM921 674h1v1h-1zM921 678h1v1h-1zM921 683h1v1h-1zM921 688h1v1h-1zM921 692h1v1h-1zM921 697h1v1h-1zM921 702h1v1h-1zM921 706h1v1h-1zM921 711h1v1h-1zM921 716h1v1h-1zM921 720h1v1h-1zM921 725h1v1h-1zM921 729h1v1h-1zM921 734h1v1h-1zM921 739h1v1h-1zM921 743h1v1h-1zM921 748h1v1h-1zM921 753h1v1h-1zM921 760h1v1h-1zM921 764h1v1h-1zM921 769h1v1h-1zM921 773h1v1h-1zM921 778h1v1h-1zM921 783h1v1h-1zM921 787h1v1h-1zM921 792h1v1h-1zM921 797h1v1h-1zM921 801h1v1h-1zM921 806h1v1h-1zM921 811h1v1h-1zM921 815h1v1h-1zM921 820h1v1h-1zM921 824h1v1h-1zM921 829h1v1h-1zM921 834h1v1h-1zM921 838h1v1h-1zM921 843h1v1h-1zM921 848h1v1h-1zM921 852h1v1h-1zM921 857h1v1h-1zM921 862h1v1h-1zM921 866h1v1h-1zM921 871h1v1h-1zM921 876h1v1h-1zM921 880h1v1h-1zM921 885h1v1h-1zM921 889h1v1h-1zM921 894h1v1h-1zM921 899h1v1h-1zM921 903h1v1h-1zM921 908h1v1h-1zM921 913h1v1h-1zM921 917h1v1h-1zM921 922h1v1h-1zM921 927h1v1h-1zM921 931h1v1h-1zM921 936h1v1h-1zM921 940h1v1h-1zM921 945h1v1h-1zM921 950h1v1h-1zM921 954h1v1h-1zM921 959h1v1h-1zM921 964h1v1h-1zM921 968h1v1h-1zM921 973h1v1h-1zM921 978h1v1h-1zM921 982h1v1h-1zM921 987h1v1h-1zM1096 57h1v1h-1zM1096 62h1v1h-1zM1096 66h1v1h-1zM1096 71h1v1h-1zM1096 76h1v1h-1zM1096 80h1v1h-1zM1096 85h1v1h-1zM1096 89h1v1h-1zM1096 94h1v1h-1zM1096 99h1v1h-1zM1096 103h1v1h-1zM1096 108h1v1h-1zM1096 113h1v1h-1zM1096 117h1v1h-1zM1096 122h1v1h-1zM1096 127h1v1h-1zM1096 131h1v1h-1zM1096 136h1v1h-1zM1096 141h1v1h-1zM1096 145h1v1h-1zM1096 150h1v1h-1zM1096 154h1v1h-1zM1096 159h1v1h-1zM1096 164h1v1h-1zM1096 168h1v1h-1zM1096 173h1v1h-1zM1096 178h1v1h-1zM1096 182h1v1h-1zM1096 187h1v1h-1zM1096 192h1v1h-1zM1096 196h1v1h-1zM1096 201h1v1h-1zM1096 205h1v1h-1zM1096 210h1v1h-1zM1096 215h1v1h-1zM1096 219h1v1h-1zM1096 224h1v1h-1zM1096 229h1v1h-1zM1096 233h1v1h-1zM1096 238h1v1h-1zM1096 243h1v1h-1zM1096 247h1v1h-1zM1096 252h1v1h-1zM1096 257h1v1h-1zM1096 261h1v1h-1zM1096 266h1v1h-1zM1096 270h1v1h-1zM1096 275h1v1h-1zM1096 280h1v1h-1zM1096 284h1v1h-1zM1096 291h1v1h-1zM1096 296h1v1h-1zM1096 300h1v1h-1zM1096 305h1v1h-1zM1096 310h1v1h-1zM1096 314h1v1h-1zM1096 319h1v1h-1zM1096 324h1v1h-1zM1096 328h1v1h-1zM1096 333h1v1h-1zM1096 338h1v1h-1zM1096 342h1v1h-1zM1096 347h1v1h-1zM1096 352h1v1h-1zM1096 356h1v1h-1zM1096 361h1v1h-1zM1096 365h1v1h-1zM1096 370h1v1h-1zM1096 375h1v1h-1zM1096 379h1v1h-1zM1096 384h1v1h-1zM1096 389h1v1h-1zM1096 393h1v1h-1zM1096 398h1v1h-1zM1096 403h1v1h-1zM1096 407h1v1h-1zM1096 412h1v1h-1zM1096 416h1v1h-1zM1096 421h1v1h-1zM1096 426h1v1h-1zM1096 430h1v1h-1zM1096 435h1v1h-1zM1096 440h1v1h-1zM1096 444h1v1h-1zM1096 449h1v1h-1zM1096 454h1v1h-1zM1096 458h1v1h-1zM1096 463h1v1h-1zM1096 468h1v1h-1zM1096 472h1v1h-1zM1096 477h1v1h-1zM1096 481h1v1h-1zM1096 486h1v1h-1zM1096 491h1v1h-1zM1096 495h1v1h-1zM1096 500h1v1h-1zM1096 505h1v1h-1zM1096 509h1v1h-1zM1096 514h1v1h-1zM1096 519h1v1h-1zM1096 525h1v1h-1zM1096 530h1v1h-1zM1096 535h1v1h-1zM1096 539h1v1h-1zM1096 544h1v1h-1zM1096 548h1v1h-1zM1096 553h1v1h-1zM1096 558h1v1h-1zM1096 562h1v1h-1zM1096 567h1v1h-1zM1096 572h1v1h-1zM1096 576h1v1h-1zM1096 581h1v1h-1zM1096 586h1v1h-1zM1096 590h1v1h-1zM1096 595h1v1h-1zM1096 600h1v1h-1zM1096 604h1v1h-1zM1096 609h1v1h-1zM1096 613h1v1h-1zM1096 618h1v1h-1zM1096 623h1v1h-1zM1096 627h1v1h-1zM1096 632h1v1h-1zM1096 637h1v1h-1zM1096 641h1v1h-1zM1096 646h1v1h-1zM1096 651h1v1h-1zM1096 655h1v1h-1zM1096 660h1v1h-1zM1096 664h1v1h-1zM1096 669h1v1h-1zM1096 674h1v1h-1zM1096 678h1v1h-1zM1096 683h1v1h-1zM1096 688h1v1h-1zM1096 692h1v1h-1zM1096 697h1v1h-1zM1096 702h1v1h-1zM1096 706h1v1h-1zM1096 711h1v1h-1zM1096 716h1v1h-1zM1096 720h1v1h-1zM1096 725h1v1h-1zM1096 729h1v1h-1zM1096 734h1v1h-1zM1096 739h1v1h-1zM1096 743h1v1h-1zM1096 748h1v1h-1zM1096 753h1v1h-1zM1096 760h1v1h-1zM1096 764h1v1h-1zM1096 769h1v1h-1zM1096 773h1v1h-1zM1096 778h1v1h-1zM1096 783h1v1h-1zM1096 787h1v1h-1zM1096 792h1v1h-1zM1096 797h1v1h-1zM1096 801h1v1h-1zM1096 806h1v1h-1zM1096 811h1v1h-1zM1096 815h1v1h-1zM1096 820h1v1h-1zM1096 824h1v1h-1zM1096 829h1v1h-1zM1096 834h1v1h-1zM1096 838h1v1h-1zM1096 843h1v1h-1zM1096 848h1v1h-1zM1096 852h1v1h-1zM1096 857h1v1h-1zM1096 862h1v1h-1zM1096 866h1v1h-1zM1096 871h1v1h-1zM1096 876h1v1h-1zM1096 880h1v1h-1zM1096 885h1v1h-1zM1096 889h1v1h-1zM1096 894h1v1h-1zM1096 899h1v1h-1zM1096 903h1v1h-1zM1096 908h1v1h-1zM1096 913h1v1h-1zM1096 917h1v1h-1zM1096 922h1v1h-1zM1096 927h1v1h-1zM1096 931h1v1h-1zM1096 936h1v1h-1zM1096 940h1v1h-1zM1096 945h1v1h-1zM1096 950h1v1h-1zM1096 954h1v1h-1zM1096 959h1v1h-1zM1096 964h1v1h-1zM1096 968h1v1h-1zM1096 973h1v1h-1zM1096 978h1v1h-1zM1096 982h1v1h-1zM1096 987h1v1h-1zM1270 57h1v1h-1zM1270 62h1v1h-1zM1270 66h1v1h-1zM1270 71h1v1h-1zM1270 76h1v1h-1zM1270 80h1v1h-1zM1270 85h1v1h-1zM1270 89h1v1h-1zM1270 94h1v1h-1zM1270 99h1v1h-1zM1270 103h1v1h-1zM1270 108h1v1h-1zM1270 113h1v1h-1zM1270 117h1v1h-1zM1270 122h1v1h-1zM1270 127h1v1h-1zM1270 131h1v1h-1zM1270 136h1v1h-1zM1270 141h1v1h-1zM1270 145h1v1h-1zM1270 150h1v1h-1zM1270 154h1v1h-1zM1270 159h1v1h-1zM1270 164h1v1h-1zM1270 168h1v1h-1zM1270 173h1v1h-1zM1270 178h1v1h-1zM1270 182h1v1h-1zM1270 187h1v1h-1zM1270 192h1v1h-1zM1270 196h1v1h-1zM1270 201h1v1h-1zM1270 205h1v1h-1zM1270 210h1v1h-1zM1270 215h1v1h-1zM1270 219h1v1h-1zM1270 224h1v1h-1zM1270 229h1v1h-1zM1270 233h1v1h-1zM1270 238h1v1h-1zM1270 243h1v1h-1zM1270 247h1v1h-1zM1270 252h1v1h-1zM1270 257h1v1h-1zM1270 261h1v1h-1zM1270 266h1v1h-1zM1270 270h1v1h-1zM1270 275h1v1h-1zM1270 280h1v1h-1zM1270 284h1v1h-1zM1270 291h1v1h-1zM1270 296h1v1h-1zM1270 300h1v1h-1zM1270 305h1v1h-1zM1270 310h1v1h-1zM1270 314h1v1h-1zM1270 319h1v1h-1zM1270 324h1v1h-1zM1270 328h1v1h-1zM1270 333h1v1h-1zM1270 338h1v1h-1zM1270 342h1v1h-1zM1270 347h1v1h-1zM1270 352h1v1h-1zM1270 356h1v1h-1zM1270 361h1v1h-1zM1270 365h1v1h-1zM1270 370h1v1h-1zM1270 375h1v1h-1zM1270 379h1v1h-1zM1270 384h1v1h-1zM1270 389h1v1h-1zM1270 393h1v1h-1zM1270 398h1v1h-1zM1270 403h1v1h-1zM1270 407h1v1h-1zM1270 412h1v1h-1zM1270 416h1v1h-1zM1270 421h1v1h-1zM1270 426h1v1h-1zM1270 430h1v1h-1zM1270 435h1v1h-1zM1270 440h1v1h-1zM1270 444h1v1h-1zM1270 449h1v1h-1zM1270 454h1v1h-1zM1270 458h1v1h-1zM1270 463h1v1h-1zM1270 468h1v1h-1zM1270 472h1v1h-1zM1270 477h1v1h-1zM1270 481h1v1h-1zM1270 486h1v1h-1zM1270 491h1v1h-1zM1270 495h1v1h-1zM1270 500h1v1h-1zM1270 505h1v1h-1zM1270 509h1v1h-1zM1270 514h1v1h-1zM1270 519h1v1h-1zM1270 525h1v1h-1zM1270 530h1v1h-1zM1270 535h1v1h-1zM1270 539h1v1h-1zM1270 544h1v1h-1zM1270 548h1v1h-1zM1270 553h1v1h-1zM1270 558h1v1h-1zM1270 562h1v1h-1zM1270 567h1v1h-1zM1270 572h1v1h-1zM1270 576h1v1h-1zM1270 581h1v1h-1zM1270 586h1v1h-1zM1270 590h1v1h-1zM1270 595h1v1h-1zM1270 600h1v1h-1zM1270 604h1v1h-1zM1270 609h1v1h-1zM1270 613h1v1h-1zM1270 618h1v1h-1zM1270 623h1v1h-1zM1270 627h1v1h-1zM1270 632h1v1h-1zM1270 637h1v1h-1zM1270 641h1v1h-1zM1270 646h1v1h-1zM1270 651h1v1h-1zM1270 655h1v1h-1zM1270 660h1v1h-1zM1270 664h1v1h-1zM1270 669h1v1h-1zM1270 674h1v1h-1zM1270 678h1v1h-1zM1270 683h1v1h-1zM1270 688h1v1h-1zM1270 692h1v1h-1zM1270 697h1v1h-1zM1270 702h1v1h-1zM1270 706h1v1h-1zM1270 711h1v1h-1zM1270 716h1v1h-1zM1270 720h1v1h-1zM1270 725h1v1h-1zM1270 729h1v1h-1zM1270 734h1v1h-1zM1270 739h1v1h-1zM1270 743h1v1h-1zM1270 748h1v1h-1zM1270 753h1v1h-1zM1270 760h1v1h-1zM1270 764h1v1h-1zM1270 769h1v1h-1zM1270 773h1v1h-1zM1270 778h1v1h-1zM1270 783h1v1h-1zM1270 787h1v1h-1zM1270 792h1v1h-1zM1270 797h1v1h-1zM1270 801h1v1h-1zM1270 806h1v1h-1zM1270 811h1v1h-1zM1270 815h1v1h-1zM1270 820h1v1h-1zM1270 824h1v1h-1zM1270 829h1v1h-1zM1270 834h1v1h-1zM1270 838h1v1h-1zM1270 843h1v1h-1zM1270 848h1v1h-1zM1270 852h1v1h-1zM1270 857h1v1h-1zM1270 862h1v1h-1zM1270 866h1v1h-1zM1270 871h1v1h-1zM1270 876h1v1h-1zM1270 880h1v1h-1zM1270 885h1v1h-1zM1270 889h1v1h-1zM1270 894h1v1h-1zM1270 899h1v1h-1zM1270 903h1v1h-1zM1270 908h1v1h-1zM1270 913h1v1h-1zM1270 917h1v1h-1zM1270 922h1v1h-1zM1270 927h1v1h-1zM1270 931h1v1h-1zM1270 936h1v1h-1zM1270 940h1v1h-1zM1270 945h1v1h-1zM1270 950h1v1h-1zM1270 954h1v1h-1zM1270 959h1v1h-1zM1270 964h1v1h-1zM1270 968h1v1h-1zM1270 973h1v1h-1zM1270 978h1v1h-1zM1270 982h1v1h-1zM1270 987h1v1h-1zM1445 57h1v1h-1zM1445 62h1v1h-1zM1445 66h1v1h-1zM1445 71h1v1h-1zM1445 76h1v1h-1zM1445 80h1v1h-1zM1445 85h1v1h-1zM1445 89h1v1h-1zM1445 94h1v1h-1zM1445 99h1v1h-1zM1445 103h1v1h-1zM1445 108h1v1h-1zM1445 113h1v1h-1zM1445 117h1v1h-1zM1445 122h1v1h-1zM1445 127h1v1h-1zM1445 131h1v1h-1zM1445 136h1v1h-1zM1445 141h1v1h-1zM1445 145h1v1h-1zM1445 150h1v1h-1zM1445 154h1v1h-1zM1445 159h1v1h-1zM1445 164h1v1h-1zM1445 168h1v1h-1zM1445 173h1v1h-1zM1445 178h1v1h-1zM1445 182h1v1h-1zM1445 187h1v1h-1zM1445 192h1v1h-1zM1445 196h1v1h-1zM1445 201h1v1h-1zM1445 205h1v1h-1zM1445 210h1v1h-1zM1445 215h1v1h-1zM1445 219h1v1h-1zM1445 224h1v1h-1zM1445 229h1v1h-1zM1445 233h1v1h-1zM1445 238h1v1h-1zM1445 243h1v1h-1zM1445 247h1v1h-1zM1445 252h1v1h-1zM1445 257h1v1h-1zM1445 261h1v1h-1zM1445 266h1v1h-1zM1445 270h1v1h-1zM1445 275h1v1h-1zM1445 280h1v1h-1zM1445 284h1v1h-1zM1445 291h1v1h-1zM1445 296h1v1h-1zM1445 300h1v1h-1zM1445 305h1v1h-1zM1445 310h1v1h-1zM1445 314h1v1h-1zM1445 319h1v1h-1zM1445 324h1v1h-1zM1445 328h1v1h-1zM1445 333h1v1h-1zM1445 338h1v1h-1zM1445 342h1v1h-1zM1445 347h1v1h-1zM1445 352h1v1h-1zM1445 356h1v1h-1zM1445 361h1v1h-1zM1445 365h1v1h-1zM1445 370h1v1h-1zM1445 375h1v1h-1zM1445 379h1v1h-1zM1445 384h1v1h-1zM1445 389h1v1h-1zM1445 393h1v1h-1zM1445 398h1v1h-1zM1445 403h1v1h-1zM1445 407h1v1h-1zM1445 412h1v1h-1zM1445 416h1v1h-1zM1445 421h1v1h-1zM1445 426h1v1h-1zM1445 430h1v1h-1zM1445 435h1v1h-1zM1445 440h1v1h-1zM1445 444h1v1h-1zM1445 449h1v1h-1zM1445 454h1v1h-1zM1445 458h1v1h-1zM1445 463h1v1h-1zM1445 468h1v1h-1zM1445 472h1v1h-1zM1445 477h1v1h-1zM1445 481h1v1h-1zM1445 486h1v1h-1zM1445 491h1v1h-1zM1445 495h1v1h-1zM1445 500h1v1h-1zM1445 505h1v1h-1zM1445 509h1v1h-1zM1445 514h1v1h-1zM1445 519h1v1h-1zM1445 525h1v1h-1zM1445 530h1v1h-1zM1445 535h1v1h-1zM1445 539h1v1h-1zM1445 544h1v1h-1zM1445 548h1v1h-1zM1445 553h1v1h-1zM1445 558h1v1h-1zM1445 562h1v1h-1zM1445 567h1v1h-1zM1445 572h1v1h-1zM1445 576h1v1h-1zM1445 581h1v1h-1zM1445 586h1v1h-1zM1445 590h1v1h-1zM1445 595h1v1h-1zM1445 600h1v1h-1zM1445 604h1v1h-1zM1445 609h1v1h-1zM1445 613h1v1h-1zM1445 618h1v1h-1zM1445 623h1v1h-1zM1445 627h1v1h-1zM1445 632h1v1h-1zM1445 637h1v1h-1zM1445 641h1v1h-1zM1445 646h1v1h-1zM1445 651h1v1h-1zM1445 655h1v1h-1zM1445 660h1v1h-1zM1445 664h1v1h-1zM1445 669h1v1h-1zM1445 674h1v1h-1zM1445 678h1v1h-1zM1445 683h1v1h-1zM1445 688h1v1h-1zM1445 692h1v1h-1zM1445 697h1v1h-1zM1445 702h1v1h-1zM1445 706h1v1h-1zM1445 711h1v1h-1zM1445 716h1v1h-1zM1445 720h1v1h-1zM1445 725h1v1h-1zM1445 729h1v1h-1zM1445 734h1v1h-1zM1445 739h1v1h-1zM1445 743h1v1h-1zM1445 748h1v1h-1zM1445 753h1v1h-1zM1445 760h1v1h-1zM1445 764h1v1h-1zM1445 769h1v1h-1zM1445 773h1v1h-1zM1445 778h1v1h-1zM1445 783h1v1h-1zM1445 787h1v1h-1zM1445 792h1v1h-1zM1445 797h1v1h-1zM1445 801h1v1h-1zM1445 806h1v1h-1zM1445 811h1v1h-1zM1445 815h1v1h-1zM1445 820h1v1h-1zM1445 824h1v1h-1zM1445 829h1v1h-1zM1445 834h1v1h-1zM1445 838h1v1h-1zM1445 843h1v1h-1zM1445 848h1v1h-1zM1445 852h1v1h-1zM1445 857h1v1h-1zM1445 862h1v1h-1zM1445 866h1v1h-1zM1445 871h1v1h-1zM1445 876h1v1h-1zM1445 880h1v1h-1zM1445 885h1v1h-1zM1445 889h1v1h-1zM1445 894h1v1h-1zM1445 899h1v1h-1zM1445 903h1v1h-1zM1445 908h1v1h-1zM1445 913h1v1h-1zM1445 917h1v1h-1zM1445 922h1v1h-1zM1445 927h1v1h-1zM1445 931h1v1h-1zM1445 936h1v1h-1zM1445 940h1v1h-1zM1445 945h1v1h-1zM1445 950h1v1h-1zM1445 954h1v1h-1zM1445 959h1v1h-1zM1445 964h1v1h-1zM1445 968h1v1h-1zM1445 973h1v1h-1zM1445 978h1v1h-1zM1445 982h1v1h-1zM1445 987h1v1h-1zM1620 57h1v1h-1zM1620 62h1v1h-1zM1620 66h1v1h-1zM1620 71h1v1h-1zM1620 76h1v1h-1zM1620 80h1v1h-1zM1620 85h1v1h-1zM1620 89h1v1h-1zM1620 94h1v1h-1zM1620 99h1v1h-1zM1620 103h1v1h-1zM1620 108h1v1h-1zM1620 113h1v1h-1zM1620 117h1v1h-1zM1620 122h1v1h-1zM1620 127h1v1h-1zM1620 131h1v1h-1zM1620 136h1v1h-1zM1620 141h1v1h-1zM1620 145h1v1h-1zM1620 150h1v1h-1zM1620 154h1v1h-1zM1620 159h1v1h-1zM1620 164h1v1h-1zM1620 168h1v1h-1zM1620 173h1v1h-1zM1620 178h1v1h-1zM1620 182h1v1h-1zM1620 187h1v1h-1zM1620 192h1v1h-1zM1620 196h1v1h-1zM1620 201h1v1h-1zM1620 205h1v1h-1zM1620 210h1v1h-1zM1620 215h1v1h-1zM1620 219h1v1h-1zM1620 224h1v1h-1zM1620 229h1v1h-1zM1620 233h1v1h-1zM1620 238h1v1h-1zM1620 243h1v1h-1zM1620 247h1v1h-1zM1620 252h1v1h-1zM1620 257h1v1h-1zM1620 261h1v1h-1zM1620 266h1v1h-1zM1620 270h1v1h-1zM1620 275h1v1h-1zM1620 280h1v1h-1zM1620 284h1v1h-1zM1620 291h1v1h-1zM1620 296h1v1h-1zM1620 300h1v1h-1zM1620 305h1v1h-1zM1620 310h1v1h-1zM1620 314h1v1h-1zM1620 319h1v1h-1zM1620 324h1v1h-1zM1620 328h1v1h-1zM1620 333h1v1h-1zM1620 338h1v1h-1zM1620 342h1v1h-1zM1620 347h1v1h-1zM1620 352h1v1h-1zM1620 356h1v1h-1zM1620 361h1v1h-1zM1620 365h1v1h-1zM1620 370h1v1h-1zM1620 375h1v1h-1zM1620 379h1v1h-1zM1620 384h1v1h-1zM1620 389h1v1h-1zM1620 393h1v1h-1zM1620 398h1v1h-1zM1620 403h1v1h-1zM1620 407h1v1h-1zM1620 412h1v1h-1zM1620 416h1v1h-1zM1620 421h1v1h-1zM1620 426h1v1h-1zM1620 430h1v1h-1zM1620 435h1v1h-1zM1620 440h1v1h-1zM1620 444h1v1h-1zM1620 449h1v1h-1zM1620 454h1v1h-1zM1620 458h1v1h-1zM1620 463h1v1h-1zM1620 468h1v1h-1zM1620 472h1v1h-1zM1620 477h1v1h-1zM1620 481h1v1h-1zM1620 486h1v1h-1zM1620 491h1v1h-1zM1620 495h1v1h-1zM1620 500h1v1h-1zM1620 505h1v1h-1zM1620 509h1v1h-1zM1620 514h1v1h-1zM1620 519h1v1h-1zM1620 525h1v1h-1zM1620 530h1v1h-1zM1620 535h1v1h-1zM1620 539h1v1h-1zM1620 544h1v1h-1zM1620 548h1v1h-1zM1620 553h1v1h-1zM1620 558h1v1h-1zM1620 562h1v1h-1zM1620 567h1v1h-1zM1620 572h1v1h-1zM1620 576h1v1h-1zM1620 581h1v1h-1zM1620 586h1v1h-1zM1620 590h1v1h-1zM1620 595h1v1h-1zM1620 600h1v1h-1zM1620 604h1v1h-1zM1620 609h1v1h-1zM1620 613h1v1h-1zM1620 618h1v1h-1zM1620 623h1v1h-1zM1620 627h1v1h-1zM1620 632h1v1h-1zM1620 637h1v1h-1zM1620 641h1v1h-1zM1620 646h1v1h-1zM1620 651h1v1h-1zM1620 655h1v1h-1zM1620 660h1v1h-1zM1620 664h1v1h-1zM1620 669h1v1h-1zM1620 674h1v1h-1zM1620 678h1v1h-1zM1620 683h1v1h-1zM1620 688h1v1h-1zM1620 692h1v1h-1zM1620 697h1v1h-1zM1620 702h1v1h-1zM1620 706h1v1h-1zM1620 711h1v1h-1zM1620 716h1v1h-1zM1620 720h1v1h-1zM1620 725h1v1h-1zM1620 729h1v1h-1zM1620 734h1v1h-1zM1620 739h1v1h-1zM1620 743h1v1h-1zM1620 748h1v1h-1zM1620 753h1v1h-1zM1620 760h1v1h-1zM1620 764h1v1h-1zM1620 769h1v1h-1zM1620 773h1v1h-1zM1620 778h1v1h-1zM1620 783h1v1h-1zM1620 787h1v1h-1zM1620 792h1v1h-1zM1620 797h1v1h-1zM1620 801h1v1h-1zM1620 806h1v1h-1zM1620 811h1v1h-1zM1620 815h1v1h-1zM1620 820h1v1h-1zM1620 824h1v1h-1zM1620 829h1v1h-1zM1620 834h1v1h-1zM1620 838h1v1h-1zM1620 843h1v1h-1zM1620 848h1v1h-1zM1620 852h1v1h-1zM1620 857h1v1h-1zM1620 862h1v1h-1zM1620 866h1v1h-1zM1620 871h1v1h-1zM1620 876h1v1h-1zM1620 880h1v1h-1zM1620 885h1v1h-1zM1620 889h1v1h-1zM1620 894h1v1h-1zM1620 899h1v1h-1zM1620 903h1v1h-1zM1620 908h1v1h-1zM1620 913h1v1h-1zM1620 917h1v1h-1zM1620 922h1v1h-1zM1620 927h1v1h-1zM1620 931h1v1h-1zM1620 936h1v1h-1zM1620 940h1v1h-1zM1620 945h1v1h-1zM1620 950h1v1h-1zM1620 954h1v1h-1zM1620 959h1v1h-1zM1620 964h1v1h-1zM1620 968h1v1h-1zM1620 973h1v1h-1zM1620 978h1v1h-1zM1620 982h1v1h-1zM1620 987h1v1h-1z" fill="#c4c4c4"/><line x1="5" y1="243.5" x2="1718" y2="243.5" stroke="#c8c8c8" stroke-width="1" stroke-dasharray="5 5"/><line x1="5" y1="473.5" x2="1718" y2="473.5" stroke="#c8c8c8" stroke-width="1" stroke-dasharray="5 5"/><line x1="5" y1="684.5" x2="1718" y2="684.5" stroke="#c8c8c8" stroke-width="1" stroke-dasharray="5 5"/><line x1="5" y1="913.5" x2="1718" y2="913.5" stroke="#c8c8c8" stroke-width="1" stroke-dasharray="5 5"/><line x1="47.5" y1="101" x2="47.5" y2="992" stroke="#cfcfd4" stroke-width="1" stroke-dasharray="5 5"/><path d="M3 242h1v1h-1zM4 242h1v1h-1zM5 242h1v1h-1zM6 242h1v1h-1zM7 242h1v1h-1zM8 242h1v1h-1zM9 242h1v1h-1zM10 242h1v1h-1zM11 242h1v1h-1zM12 242h1v1h-1zM13 242h1v1h-1zM14 242h1v1h-1zM15 242h1v1h-1zM16 242h1v1h-1zM17 242h1v1h-1zM18 242h1v1h-1zM19 242h1v1h-1zM20 242h1v1h-1zM21 242h1v1h-1zM22 242h1v1h-1zM23 242h1v1h-1zM24 242h1v1h-1zM25 242h1v1h-1zM26 242h1v1h-1zM27 242h1v1h-1zM28 242h1v1h-1zM29 242h1v1h-1zM30 242h1v1h-1zM31 242h1v1h-1zM32 242h1v1h-1zM33 242h1v1h-1zM34 242h1v1h-1zM35 242h1v1h-1zM36 242h1v1h-1zM37 242h1v1h-1zM38 242h1v1h-1zM39 242h1v1h-1zM40 242h1v1h-1zM41 242h1v1h-1zM42 242h1v1h-1zM43 242h1v1h-1zM44 242h1v1h-1zM45 242h1v1h-1zM46 200h1v43h-1zM47 186h1v45h-1zM48 230h1v59h-1zM49 226h1v39h-1zM50 240h1v25h-1zM51 240h1v3h-1zM52 242h1v3h-1zM53 242h1v3h-1zM54 241h1v2h-1zM55 241h1v2h-1zM56 242h1v2h-1zM57 243h1v1h-1zM58 242h1v2h-1zM59 242h1v1h-1zM60 242h1v1h-1zM61 242h1v1h-1zM62 242h1v1h-1zM63 242h1v1h-1zM64 241h1v2h-1zM65 241h1v2h-1zM66 241h1v2h-1zM67 241h1v2h-1zM68 241h1v2h-1zM69 241h1v2h-1zM70 241h1v2h-1zM71 241h1v2h-1zM72 241h1v2h-1zM73 241h1v2h-1zM74 241h1v2h-1zM75 241h1v2h-1zM76 241h1v2h-1zM77 241h1v2h-1zM78 241h1v2h-1zM79 241h1v2h-1zM80 241h1v2h-1zM81 241h1v2h-1zM82 241h1v2h-1zM83 241h1v2h-1zM84 241h1v2h-1zM85 241h1v2h-1zM86 241h1v2h-1zM87 241h1v2h-1zM88 241h1v2h-1zM89 241h1v2h-1zM90 241h1v2h-1zM91 241h1v2h-1zM92 241h1v2h-1zM93 242h1v1h-1zM94 242h1v1h-1zM95 241h1v2h-1zM96 241h1v2h-1zM97 241h1v2h-1zM98 241h1v2h-1zM99 241h1v2h-1zM100 241h1v2h-1zM101 241h1v2h-1zM102 241h1v2h-1zM103 241h1v2h-1zM104 241h1v2h-1zM105 241h1v2h-1zM106 241h1v2h-1zM107 242h1v1h-1zM108 242h1v1h-1zM109 242h1v1h-1zM110 242h1v1h-1zM111 242h1v1h-1zM112 242h1v1h-1zM113 242h1v1h-1zM114 241h1v2h-1zM115 241h1v2h-1zM116 241h1v2h-1zM117 241h1v2h-1zM118 241h1v2h-1zM119 241h1v2h-1zM120 242h1v1h-1zM121 242h1v1h-1zM122 242h1v1h-1zM123 242h1v1h-1zM124 241h1v2h-1zM125 241h1v2h-1zM126 241h1v2h-1zM127 241h1v2h-1zM128 241h1v2h-1zM129 241h1v2h-1zM130 241h1v2h-1zM131 242h1v1h-1zM132 242h1v1h-1zM133 242h1v1h-1zM134 242h1v1h-1zM135 242h1v1h-1zM136 242h1v1h-1zM137 242h1v1h-1zM138 242h1v1h-1zM139 242h1v1h-1zM140 242h1v1h-1zM141 242h1v1h-1zM142 242h1v1h-1zM143 242h1v1h-1zM144 242h1v1h-1zM145 242h1v1h-1zM146 241h1v2h-1zM147 242h1v1h-1zM148 242h1v1h-1zM149 242h1v1h-1zM150 242h1v1h-1zM151 242h1v1h-1zM152 242h1v1h-1zM153 242h1v1h-1zM154 242h1v1h-1zM155 242h1v1h-1zM156 242h1v1h-1zM157 242h1v1h-1zM158 242h1v1h-1zM159 242h1v1h-1zM160 241h1v2h-1zM161 242h1v1h-1zM162 242h1v1h-1zM163 242h1v1h-1zM164 220h1v23h-1zM165 221h1v32h-1zM166 143h1v136h-1zM167 124h1v90h-1zM168 212h1v76h-1zM169 226h1v2h-1zM170 226h1v2h-1zM171 226h1v2h-1zM172 226h1v2h-1zM173 224h1v4h-1zM174 220h1v6h-1zM175 218h1v4h-1zM176 217h1v3h-1zM177 216h1v3h-1zM178 215h1v3h-1zM179 213h1v4h-1zM180 200h1v15h-1zM181 207h1v4h-1zM182 205h1v3h-1zM183 203h1v3h-1zM184 203h1v2h-1zM185 202h1v3h-1zM186 201h1v3h-1zM187 200h1v3h-1zM188 198h1v4h-1zM189 197h1v3h-1zM190 195h1v4h-1zM191 193h1v4h-1zM192 185h1v10h-1zM193 183h1v4h-1zM194 182h1v3h-1zM195 181h1v3h-1zM196 180h1v3h-1zM197 180h1v1h-1zM198 179h1v2h-1zM199 178h1v2h-1zM200 177h1v2h-1zM201 177h1v4h-1zM202 179h1v4h-1zM203 180h1v3h-1zM204 180h1v2h-1zM205 179h1v3h-1zM206 178h1v3h-1zM207 177h1v2h-1zM208 176h1v2h-1zM209 174h1v3h-1zM210 173h1v2h-1zM211 172h1v2h-1zM212 172h1v2h-1zM213 171h1v3h-1zM214 171h1v2h-1zM215 170h1v3h-1zM216 169h1v3h-1zM217 168h1v3h-1zM218 167h1v3h-1zM219 167h1v2h-1zM220 166h1v2h-1zM221 165h1v2h-1zM222 164h1v2h-1zM223 164h1v1h-1zM224 163h1v2h-1zM225 163h1v1h-1zM226 162h1v2h-1zM227 161h1v2h-1zM228 161h1v1h-1zM229 160h1v2h-1zM230 160h1v1h-1zM231 159h1v2h-1zM232 159h1v1h-1zM233 158h1v2h-1zM234 157h1v2h-1zM235 157h1v1h-1zM236 156h1v2h-1zM237 156h1v1h-1zM238 155h1v2h-1zM239 155h1v1h-1zM240 153h1v3h-1zM241 153h1v2h-1zM242 152h1v3h-1zM243 152h1v2h-1zM244 152h1v2h-1zM245 152h1v1h-1zM246 151h1v2h-1zM247 151h1v1h-1zM248 149h1v3h-1zM249 149h1v2h-1zM250 148h1v3h-1zM251 148h1v2h-1zM252 147h1v3h-1zM253 147h1v2h-1zM254 146h1v3h-1zM255 146h1v2h-1zM256 146h1v2h-1zM257 145h1v3h-1zM258 145h1v2h-1zM259 145h1v2h-1zM260 144h1v3h-1zM261 145h1v1h-1zM262 145h1v1h-1zM263 144h1v2h-1zM264 143h1v2h-1zM265 143h1v2h-1zM266 142h1v3h-1zM267 142h1v2h-1zM268 141h1v3h-1zM269 141h1v2h-1zM270 141h1v2h-1zM271 140h1v3h-1zM272 140h1v2h-1zM273 140h1v2h-1zM274 139h1v3h-1zM275 139h1v2h-1zM276 139h1v2h-1zM277 138h1v3h-1zM278 139h1v1h-1zM279 139h1v1h-1zM280 139h1v1h-1zM281 138h1v2h-1zM282 138h1v1h-1zM283 138h1v1h-1zM284 137h1v2h-1zM285 136h1v2h-1zM286 137h1v1h-1zM287 137h1v1h-1zM288 136h1v2h-1zM289 136h1v1h-1zM290 136h1v1h-1zM291 135h1v2h-1zM292 135h1v1h-1zM293 135h1v1h-1zM294 135h1v1h-1zM295 134h1v2h-1zM296 134h1v1h-1zM297 134h1v1h-1zM298 133h1v2h-1zM299 133h1v2h-1zM300 132h1v2h-1zM301 132h1v2h-1zM302 132h1v2h-1zM303 131h1v3h-1zM304 131h1v2h-1zM305 131h1v2h-1zM306 131h1v2h-1zM307 131h1v2h-1zM308 130h1v3h-1zM309 130h1v2h-1zM310 130h1v2h-1zM311 130h1v2h-1zM312 130h1v2h-1zM313 130h1v2h-1zM314 129h1v3h-1zM315 130h1v1h-1zM316 130h1v1h-1zM317 130h1v1h-1zM318 130h1v1h-1zM319 130h1v1h-1zM320 129h1v2h-1zM321 129h1v2h-1zM322 129h1v2h-1zM323 129h1v2h-1zM324 129h1v2h-1zM325 129h1v2h-1zM326 128h1v3h-1zM327 128h1v2h-1zM328 128h1v2h-1zM329 128h1v2h-1zM330 128h1v2h-1zM331 128h1v1h-1zM332 128h1v1h-1zM333 128h1v1h-1zM334 127h1v2h-1zM335 127h1v1h-1zM336 127h1v1h-1zM337 127h1v1h-1zM338 127h1v1h-1zM339 127h1v1h-1zM340 127h1v1h-1zM341 127h1v1h-1zM342 127h1v1h-1zM343 126h1v2h-1zM344 124h1v3h-1zM345 120h1v5h-1zM346 117h1v4h-1zM347 117h1v1h-1zM348 117h1v1h-1zM349 117h1v1h-1zM350 117h1v1h-1zM351 117h1v1h-1zM352 117h1v1h-1zM353 117h1v1h-1zM354 116h1v2h-1zM355 116h1v2h-1zM356 116h1v3h-1zM357 117h1v18h-1zM358 119h1v4h-1zM359 119h1v2h-1zM360 119h1v2h-1zM361 119h1v2h-1zM362 119h1v2h-1zM363 119h1v2h-1zM364 119h1v2h-1zM365 120h1v1h-1zM366 120h1v1h-1zM367 120h1v1h-1zM368 120h1v1h-1zM369 120h1v1h-1zM370 120h1v1h-1zM371 120h1v1h-1zM372 119h1v2h-1zM373 119h1v1h-1zM374 119h1v1h-1zM375 119h1v1h-1zM376 119h1v1h-1zM377 119h1v1h-1zM378 119h1v1h-1zM379 119h1v2h-1zM380 119h1v2h-1zM381 119h1v8h-1zM382 125h1v3h-1zM383 125h1v2h-1zM384 124h1v3h-1zM385 124h1v2h-1zM386 124h1v2h-1zM387 124h1v2h-1zM388 124h1v2h-1zM389 123h1v3h-1zM390 123h1v2h-1zM391 123h1v2h-1zM392 123h1v2h-1zM393 122h1v3h-1zM394 122h1v2h-1zM395 122h1v2h-1zM396 122h1v2h-1zM397 122h1v2h-1zM398 122h1v2h-1zM399 123h1v1h-1zM400 122h1v2h-1zM401 122h1v2h-1zM402 122h1v4h-1zM403 124h1v12h-1zM404 134h1v2h-1zM405 134h1v2h-1zM406 133h1v3h-1zM407 133h1v2h-1zM408 132h1v3h-1zM409 132h1v2h-1zM410 132h1v2h-1zM411 131h1v3h-1zM412 120h1v12h-1zM413 128h1v2h-1zM414 128h1v2h-1zM415 128h1v2h-1zM416 128h1v2h-1zM417 128h1v2h-1zM418 128h1v2h-1zM419 127h1v3h-1zM420 127h1v2h-1zM421 127h1v2h-1zM422 127h1v2h-1zM423 127h1v2h-1zM424 127h1v2h-1zM425 127h1v2h-1zM426 127h1v2h-1zM427 127h1v2h-1zM428 127h1v2h-1zM429 127h1v2h-1zM430 127h1v2h-1zM431 128h1v1h-1zM432 128h1v1h-1zM433 128h1v1h-1zM434 128h1v1h-1zM435 128h1v1h-1zM436 128h1v2h-1zM437 128h1v2h-1zM438 128h1v2h-1zM439 128h1v1h-1zM440 128h1v1h-1zM441 128h1v2h-1zM442 128h1v2h-1zM443 128h1v2h-1zM444 128h1v2h-1zM445 128h1v2h-1zM446 128h1v2h-1zM447 128h1v2h-1zM448 128h1v2h-1zM449 128h1v2h-1zM450 128h1v2h-1zM451 128h1v2h-1zM452 128h1v3h-1zM453 129h1v2h-1zM454 129h1v2h-1zM455 129h1v3h-1zM456 130h1v2h-1zM457 130h1v1h-1zM458 130h1v1h-1zM459 130h1v2h-1zM460 129h1v3h-1zM461 127h1v3h-1zM462 126h1v2h-1zM463 125h1v2h-1zM464 125h1v3h-1zM465 126h1v2h-1zM466 126h1v2h-1zM467 126h1v3h-1zM468 127h1v3h-1zM469 128h1v4h-1zM470 130h1v4h-1zM471 132h1v2h-1zM472 132h1v3h-1zM473 133h1v3h-1zM474 134h1v2h-1zM475 134h1v3h-1zM476 135h1v2h-1zM477 135h1v2h-1zM478 135h1v2h-1zM479 135h1v3h-1zM480 136h1v2h-1zM481 136h1v3h-1zM482 137h1v3h-1zM483 138h1v2h-1zM484 138h1v3h-1zM485 139h1v2h-1zM486 139h1v3h-1zM487 140h1v2h-1zM488 140h1v3h-1zM489 141h1v2h-1zM490 141h1v3h-1zM491 142h1v2h-1zM492 142h1v3h-1zM493 143h1v2h-1zM494 144h1v2h-1zM495 145h1v2h-1zM496 145h1v2h-1zM497 145h1v3h-1zM498 146h1v2h-1zM499 146h1v2h-1zM500 146h1v2h-1zM501 147h1v1h-1zM502 147h1v2h-1zM503 148h1v1h-1zM504 148h1v1h-1zM505 147h1v2h-1zM506 148h1v3h-1zM507 150h1v3h-1zM508 151h1v3h-1zM509 153h1v1h-1zM510 153h1v1h-1zM511 153h1v2h-1zM512 153h1v2h-1zM513 153h1v2h-1zM514 153h1v2h-1zM515 153h1v2h-1zM516 153h1v2h-1zM517 153h1v2h-1zM518 153h1v2h-1zM519 150h1v5h-1zM520 148h1v4h-1zM521 147h1v3h-1zM522 147h1v2h-1zM523 147h1v2h-1zM524 147h1v2h-1zM525 147h1v2h-1zM526 147h1v3h-1zM527 148h1v7h-1zM528 150h1v5h-1zM529 149h1v2h-1zM530 149h1v1h-1zM531 149h1v1h-1zM532 149h1v1h-1zM533 149h1v1h-1zM534 149h1v1h-1zM535 149h1v1h-1zM536 149h1v1h-1zM537 149h1v1h-1zM538 149h1v1h-1zM539 149h1v2h-1zM540 149h1v2h-1zM541 148h1v3h-1zM542 148h1v2h-1zM543 148h1v2h-1zM544 148h1v2h-1zM545 148h1v2h-1zM546 148h1v2h-1zM547 148h1v2h-1zM548 148h1v2h-1zM549 148h1v2h-1zM550 148h1v2h-1zM551 147h1v3h-1zM552 147h1v1h-1zM553 147h1v1h-1zM554 147h1v2h-1zM555 147h1v2h-1zM556 147h1v2h-1zM557 147h1v2h-1zM558 147h1v2h-1zM559 147h1v1h-1zM560 147h1v1h-1zM561 146h1v3h-1zM562 146h1v2h-1zM563 146h1v2h-1zM564 146h1v2h-1zM565 145h1v3h-1zM566 143h1v4h-1zM567 139h1v6h-1zM568 139h1v2h-1zM569 139h1v2h-1zM570 139h1v3h-1zM571 140h1v2h-1zM572 139h1v2h-1zM573 140h1v1h-1zM574 140h1v1h-1zM575 140h1v1h-1zM576 140h1v1h-1zM577 139h1v2h-1zM578 139h1v2h-1zM579 139h1v3h-1zM580 140h1v2h-1zM581 140h1v2h-1zM582 140h1v2h-1zM583 140h1v2h-1zM584 141h1v1h-1zM585 141h1v1h-1zM586 141h1v2h-1zM587 142h1v1h-1zM588 142h1v2h-1zM589 142h1v2h-1zM590 142h1v2h-1zM591 142h1v2h-1zM592 142h1v2h-1zM593 142h1v2h-1zM594 142h1v2h-1zM595 142h1v2h-1zM596 142h1v2h-1zM597 142h1v2h-1zM598 142h1v2h-1zM599 142h1v2h-1zM600 142h1v2h-1zM601 141h1v2h-1zM602 141h1v2h-1zM603 141h1v2h-1zM604 141h1v2h-1zM605 141h1v2h-1zM606 142h1v1h-1zM607 142h1v1h-1zM608 142h1v1h-1zM609 142h1v1h-1zM610 142h1v1h-1zM611 142h1v1h-1zM612 142h1v1h-1zM613 142h1v1h-1zM614 142h1v1h-1zM615 142h1v1h-1zM616 142h1v2h-1zM617 142h1v2h-1zM618 142h1v2h-1zM619 142h1v2h-1zM620 142h1v2h-1zM621 142h1v2h-1zM622 142h1v2h-1zM623 142h1v2h-1zM624 142h1v2h-1zM625 142h1v2h-1zM626 142h1v2h-1zM627 142h1v1h-1zM628 142h1v1h-1zM629 142h1v1h-1zM630 142h1v1h-1zM631 142h1v1h-1zM632 142h1v1h-1zM633 142h1v1h-1zM634 142h1v1h-1zM635 141h1v2h-1zM636 142h1v2h-1zM637 142h1v2h-1zM638 142h1v2h-1zM639 142h1v2h-1zM640 142h1v2h-1zM641 142h1v2h-1zM642 142h1v2h-1zM643 142h1v2h-1zM644 142h1v2h-1zM645 142h1v2h-1zM646 142h1v1h-1zM647 142h1v1h-1zM648 142h1v1h-1zM649 142h1v1h-1zM650 142h1v1h-1zM651 141h1v2h-1zM652 142h1v1h-1zM653 142h1v2h-1zM654 142h1v2h-1zM655 142h1v2h-1zM656 142h1v2h-1zM657 142h1v2h-1zM658 142h1v2h-1zM659 142h1v2h-1zM660 142h1v2h-1zM661 142h1v2h-1zM662 142h1v1h-1zM663 142h1v1h-1zM664 141h1v2h-1zM665 140h1v3h-1zM666 140h1v2h-1zM667 140h1v2h-1zM668 141h1v1h-1zM669 141h1v1h-1zM670 141h1v1h-1zM671 141h1v1h-1zM672 140h1v3h-1zM673 142h1v1h-1zM674 142h1v2h-1zM675 143h1v1h-1zM676 143h1v1h-1zM677 142h1v2h-1zM678 142h1v1h-1zM679 142h1v1h-1zM680 142h1v1h-1zM681 142h1v1h-1zM682 142h1v1h-1zM683 142h1v1h-1zM684 142h1v1h-1zM685 142h1v1h-1zM686 142h1v2h-1zM687 142h1v2h-1zM688 142h1v2h-1zM689 142h1v2h-1zM690 142h1v2h-1zM691 142h1v2h-1zM692 142h1v2h-1zM693 142h1v2h-1zM694 142h1v2h-1zM695 142h1v2h-1zM696 142h1v2h-1zM697 142h1v1h-1zM698 142h1v1h-1zM699 142h1v1h-1zM700 142h1v1h-1zM701 142h1v1h-1zM702 142h1v1h-1zM703 142h1v1h-1zM704 142h1v1h-1zM705 142h1v1h-1zM706 142h1v1h-1zM707 141h1v3h-1zM708 141h1v2h-1zM709 141h1v2h-1zM710 141h1v2h-1zM711 141h1v2h-1zM712 141h1v2h-1zM713 141h1v2h-1zM714 141h1v1h-1zM715 141h1v1h-1zM716 141h1v1h-1zM717 141h1v1h-1zM718 141h1v1h-1zM719 141h1v1h-1zM720 141h1v1h-1zM721 141h1v1h-1zM722 141h1v1h-1zM723 141h1v1h-1zM724 141h1v1h-1zM725 141h1v1h-1zM726 141h1v1h-1zM727 141h1v1h-1zM728 141h1v1h-1zM729 141h1v1h-1zM730 141h1v1h-1zM731 140h1v2h-1zM732 140h1v2h-1zM733 140h1v2h-1zM734 140h1v2h-1zM735 140h1v2h-1zM736 140h1v2h-1zM737 140h1v2h-1zM738 140h1v2h-1zM739 140h1v2h-1zM740 140h1v2h-1zM741 140h1v2h-1zM742 140h1v2h-1zM743 140h1v2h-1zM744 140h1v2h-1zM745 140h1v2h-1zM746 141h1v1h-1zM747 141h1v1h-1zM748 141h1v1h-1zM749 141h1v1h-1zM750 141h1v1h-1zM751 141h1v2h-1zM752 141h1v2h-1zM753 141h1v2h-1zM754 141h1v2h-1zM755 141h1v2h-1zM756 141h1v2h-1zM757 141h1v2h-1zM758 141h1v2h-1zM759 141h1v2h-1zM760 141h1v2h-1zM761 141h1v2h-1zM762 141h1v1h-1zM763 140h1v2h-1zM764 141h1v1h-1zM765 141h1v1h-1zM766 141h1v1h-1zM767 141h1v1h-1zM768 141h1v2h-1zM769 141h1v2h-1zM770 141h1v2h-1zM771 141h1v2h-1zM772 141h1v2h-1zM773 141h1v2h-1zM774 141h1v2h-1zM775 141h1v2h-1zM776 141h1v2h-1zM777 140h1v2h-1zM778 141h1v1h-1zM779 141h1v1h-1zM780 141h1v1h-1zM781 141h1v1h-1zM782 141h1v1h-1zM783 141h1v1h-1zM784 141h1v1h-1zM785 141h1v1h-1zM786 141h1v1h-1zM787 141h1v1h-1zM788 141h1v1h-1zM789 141h1v1h-1zM790 141h1v1h-1zM791 141h1v1h-1zM792 141h1v1h-1zM793 141h1v1h-1zM794 141h1v1h-1zM795 141h1v1h-1zM796 140h1v2h-1zM797 140h1v2h-1zM798 140h1v2h-1zM799 140h1v2h-1zM800 140h1v2h-1zM801 140h1v2h-1zM802 140h1v2h-1zM803 140h1v2h-1zM804 140h1v2h-1zM805 141h1v1h-1zM806 141h1v1h-1zM807 141h1v1h-1zM808 141h1v1h-1zM809 141h1v1h-1zM810 141h1v1h-1zM811 141h1v1h-1zM812 140h1v2h-1zM813 140h1v2h-1zM814 140h1v2h-1zM815 140h1v2h-1zM816 141h1v1h-1zM817 141h1v1h-1zM818 141h1v1h-1zM819 141h1v1h-1zM820 141h1v1h-1zM821 141h1v1h-1zM822 141h1v1h-1zM823 141h1v1h-1zM824 140h1v2h-1zM825 140h1v2h-1zM826 140h1v2h-1zM827 140h1v2h-1zM828 140h1v2h-1zM829 140h1v2h-1zM830 140h1v2h-1zM831 140h1v2h-1zM832 140h1v2h-1zM833 141h1v1h-1zM834 141h1v1h-1zM835 141h1v1h-1zM836 141h1v1h-1zM837 141h1v1h-1zM838 141h1v1h-1zM839 141h1v2h-1zM840 141h1v2h-1zM841 141h1v2h-1zM842 141h1v2h-1zM843 141h1v2h-1zM844 141h1v2h-1zM845 141h1v2h-1zM846 141h1v2h-1zM847 141h1v2h-1zM848 141h1v2h-1zM849 141h1v2h-1zM850 141h1v2h-1zM851 141h1v2h-1zM852 141h1v2h-1zM853 141h1v1h-1zM854 141h1v2h-1zM855 141h1v2h-1zM856 141h1v2h-1zM857 141h1v2h-1zM858 141h1v2h-1zM859 141h1v2h-1zM860 141h1v2h-1zM861 141h1v2h-1zM862 141h1v2h-1zM863 141h1v2h-1zM864 141h1v2h-1zM865 141h1v2h-1zM866 141h1v2h-1zM867 141h1v2h-1zM868 141h1v2h-1zM869 141h1v1h-1zM870 140h1v2h-1zM871 140h1v2h-1zM872 140h1v2h-1zM873 140h1v2h-1zM874 140h1v2h-1zM875 140h1v2h-1zM876 140h1v2h-1zM877 140h1v2h-1zM878 140h1v2h-1zM879 140h1v2h-1zM880 140h1v2h-1zM881 140h1v2h-1zM882 140h1v2h-1zM883 140h1v2h-1zM884 140h1v2h-1zM885 140h1v2h-1zM886 141h1v1h-1zM887 141h1v1h-1zM888 141h1v1h-1zM889 141h1v1h-1zM890 141h1v1h-1zM891 141h1v1h-1zM892 141h1v1h-1zM893 141h1v1h-1zM894 141h1v1h-1zM895 140h1v2h-1zM896 140h1v2h-1zM897 140h1v2h-1zM898 140h1v2h-1zM899 140h1v2h-1zM900 140h1v2h-1zM901 141h1v1h-1zM902 141h1v1h-1zM903 141h1v1h-1zM904 141h1v1h-1zM905 140h1v2h-1zM906 140h1v2h-1zM907 140h1v2h-1zM908 140h1v2h-1zM909 140h1v2h-1zM910 140h1v2h-1zM911 140h1v2h-1zM912 140h1v2h-1zM913 140h1v2h-1zM914 140h1v2h-1zM915 140h1v2h-1zM916 140h1v2h-1zM917 141h1v2h-1zM918 141h1v2h-1zM919 141h1v2h-1zM920 141h1v2h-1zM921 141h1v2h-1zM922 141h1v3h-1zM923 142h1v2h-1zM924 142h1v2h-1zM925 142h1v2h-1zM926 142h1v2h-1zM927 142h1v1h-1zM928 142h1v1h-1zM929 142h1v1h-1zM930 142h1v1h-1zM931 142h1v1h-1zM932 142h1v1h-1zM933 142h1v1h-1zM934 142h1v1h-1zM935 142h1v1h-1zM936 142h1v1h-1zM937 142h1v1h-1zM938 142h1v1h-1zM939 142h1v1h-1zM940 142h1v2h-1zM941 142h1v2h-1zM942 142h1v2h-1zM943 142h1v2h-1zM944 142h1v2h-1zM945 142h1v2h-1zM946 142h1v2h-1zM947 142h1v2h-1zM948 142h1v2h-1zM949 142h1v2h-1zM950 142h1v2h-1zM951 142h1v2h-1zM952 142h1v2h-1zM953 142h1v2h-1zM954 142h1v2h-1zM955 142h1v2h-1zM956 142h1v2h-1zM957 142h1v2h-1zM958 142h1v2h-1zM959 142h1v2h-1zM960 142h1v1h-1zM961 142h1v1h-1zM962 142h1v1h-1zM963 142h1v1h-1zM964 142h1v1h-1zM965 142h1v1h-1zM966 142h1v1h-1zM967 141h1v2h-1zM968 142h1v1h-1zM969 142h1v1h-1zM970 142h1v1h-1zM971 142h1v1h-1zM972 142h1v1h-1zM973 142h1v1h-1zM974 142h1v1h-1zM975 142h1v1h-1zM976 141h1v2h-1zM977 141h1v3h-1zM978 142h1v2h-1zM979 142h1v2h-1zM980 142h1v2h-1zM981 142h1v2h-1zM982 142h1v2h-1zM983 142h1v2h-1zM984 142h1v2h-1zM985 142h1v2h-1zM986 143h1v2h-1zM987 143h1v2h-1zM988 143h1v2h-1zM989 143h1v2h-1zM990 143h1v1h-1zM991 143h1v1h-1zM992 143h1v1h-1zM993 143h1v1h-1zM994 143h1v1h-1zM995 143h1v1h-1zM996 142h1v2h-1zM997 143h1v1h-1zM998 143h1v1h-1zM999 143h1v1h-1zM1000 143h1v1h-1zM1001 143h1v1h-1zM1002 143h1v1h-1zM1003 143h1v1h-1zM1004 143h1v2h-1zM1005 143h1v2h-1zM1006 143h1v2h-1zM1007 143h1v2h-1zM1008 143h1v2h-1zM1009 143h1v1h-1zM1010 143h1v1h-1zM1011 143h1v1h-1zM1012 143h1v2h-1zM1013 144h1v1h-1zM1014 144h1v1h-1zM1015 144h1v1h-1zM1016 144h1v1h-1zM1017 144h1v1h-1zM1018 143h1v2h-1zM1019 143h1v2h-1zM1020 143h1v2h-1zM1021 143h1v2h-1zM1022 143h1v2h-1zM1023 143h1v2h-1zM1024 143h1v2h-1zM1025 143h1v2h-1zM1026 143h1v2h-1zM1027 143h1v2h-1zM1028 143h1v2h-1zM1029 143h1v2h-1zM1030 143h1v2h-1zM1031 144h1v1h-1zM1032 144h1v1h-1zM1033 144h1v1h-1zM1034 144h1v1h-1zM1035 144h1v1h-1zM1036 144h1v1h-1zM1037 144h1v1h-1zM1038 144h1v1h-1zM1039 144h1v1h-1zM1040 144h1v2h-1zM1041 144h1v2h-1zM1042 144h1v2h-1zM1043 144h1v2h-1zM1044 144h1v2h-1zM1045 144h1v2h-1zM1046 144h1v2h-1zM1047 144h1v2h-1zM1048 144h1v2h-1zM1049 144h1v2h-1zM1050 144h1v2h-1zM1051 144h1v1h-1zM1052 144h1v1h-1zM1053 144h1v1h-1zM1054 144h1v1h-1zM1055 144h1v1h-1zM1056 144h1v1h-1zM1057 144h1v1h-1zM1058 143h1v2h-1zM1059 143h1v3h-1zM1060 144h1v2h-1zM1061 144h1v2h-1zM1062 144h1v2h-1zM1063 144h1v2h-1zM1064 144h1v2h-1zM1065 144h1v2h-1zM1066 144h1v2h-1zM1067 144h1v2h-1zM1068 145h1v2h-1zM1069 146h1v1h-1zM1070 146h1v1h-1zM1071 145h1v2h-1zM1072 145h1v2h-1zM1073 145h1v2h-1zM1074 145h1v2h-1zM1075 145h1v2h-1zM1076 145h1v3h-1zM1077 146h1v2h-1zM1078 146h1v2h-1zM1079 146h1v2h-1zM1080 146h1v2h-1zM1081 146h1v2h-1zM1082 146h1v2h-1zM1083 146h1v2h-1zM1084 146h1v2h-1zM1085 146h1v3h-1zM1086 147h1v2h-1zM1087 147h1v2h-1zM1088 147h1v2h-1zM1089 148h1v1h-1zM1090 148h1v1h-1zM1091 148h1v1h-1zM1092 147h1v2h-1zM1093 147h1v3h-1zM1094 148h1v2h-1zM1095 148h1v2h-1zM1096 148h1v2h-1zM1097 148h1v2h-1zM1098 148h1v2h-1zM1099 148h1v2h-1zM1100 148h1v2h-1zM1101 148h1v2h-1zM1102 148h1v3h-1zM1103 149h1v2h-1zM1104 149h1v2h-1zM1105 149h1v2h-1zM1106 149h1v2h-1zM1107 150h1v1h-1zM1108 150h1v1h-1zM1109 150h1v1h-1zM1110 150h1v1h-1zM1111 150h1v2h-1zM1112 151h1v1h-1zM1113 151h1v1h-1zM1114 151h1v1h-1zM1115 151h1v1h-1zM1116 151h1v1h-1zM1117 151h1v1h-1zM1118 151h1v1h-1zM1119 151h1v1h-1zM1120 151h1v2h-1zM1121 152h1v1h-1zM1122 152h1v1h-1zM1123 152h1v1h-1zM1124 152h1v1h-1zM1125 152h1v1h-1zM1126 152h1v1h-1zM1127 152h1v1h-1zM1128 152h1v1h-1zM1129 152h1v2h-1zM1130 153h1v1h-1zM1131 153h1v1h-1zM1132 153h1v1h-1zM1133 153h1v1h-1zM1134 153h1v1h-1zM1135 153h1v1h-1zM1136 152h1v2h-1zM1137 152h1v2h-1zM1138 152h1v3h-1zM1139 153h1v2h-1zM1140 153h1v2h-1zM1141 153h1v2h-1zM1142 153h1v2h-1zM1143 153h1v2h-1zM1144 153h1v2h-1zM1145 153h1v2h-1zM1146 153h1v2h-1zM1147 153h1v3h-1zM1148 154h1v2h-1zM1149 154h1v2h-1zM1150 154h1v2h-1zM1151 154h1v3h-1zM1152 156h1v1h-1zM1153 156h1v1h-1zM1154 156h1v1h-1zM1155 156h1v1h-1zM1156 156h1v2h-1zM1157 157h1v1h-1zM1158 156h1v2h-1zM1159 156h1v2h-1zM1160 156h1v3h-1zM1161 157h1v2h-1zM1162 157h1v2h-1zM1163 157h1v2h-1zM1164 157h1v3h-1zM1165 158h1v2h-1zM1166 158h1v2h-1zM1167 158h1v2h-1zM1168 158h1v3h-1zM1169 159h1v2h-1zM1170 159h1v2h-1zM1171 159h1v2h-1zM1172 159h1v2h-1zM1173 159h1v3h-1zM1174 160h1v2h-1zM1175 160h1v2h-1zM1176 160h1v2h-1zM1177 161h1v2h-1zM1178 162h1v1h-1zM1179 162h1v1h-1zM1180 162h1v1h-1zM1181 161h1v3h-1zM1182 162h1v2h-1zM1183 162h1v2h-1zM1184 162h1v2h-1zM1185 162h1v3h-1zM1186 163h1v2h-1zM1187 163h1v2h-1zM1188 163h1v3h-1zM1189 164h1v2h-1zM1190 164h1v3h-1zM1191 165h1v2h-1zM1192 165h1v2h-1zM1193 165h1v3h-1zM1194 166h1v2h-1zM1195 166h1v2h-1zM1196 167h1v1h-1zM1197 167h1v1h-1zM1198 167h1v1h-1zM1199 166h1v2h-1zM1200 167h1v1h-1zM1201 167h1v1h-1zM1202 167h1v1h-1zM1203 167h1v2h-1zM1204 168h1v1h-1zM1205 168h1v2h-1zM1206 169h1v1h-1zM1207 168h1v3h-1zM1208 170h1v1h-1zM1209 170h1v2h-1zM1210 171h1v1h-1zM1211 171h1v2h-1zM1212 172h1v1h-1zM1213 172h1v2h-1zM1214 173h1v1h-1zM1215 172h1v3h-1zM1216 174h1v1h-1zM1217 174h1v2h-1zM1218 175h1v1h-1zM1219 175h1v3h-1zM1220 176h1v2h-1zM1221 176h1v3h-1zM1222 177h1v2h-1zM1223 177h1v3h-1zM1224 178h1v2h-1zM1225 178h1v2h-1zM1226 179h1v1h-1zM1227 179h1v1h-1zM1228 179h1v2h-1zM1229 180h1v1h-1zM1230 180h1v2h-1zM1231 181h1v1h-1zM1232 180h1v3h-1zM1233 181h1v2h-1zM1234 181h1v3h-1zM1235 182h1v2h-1zM1236 182h1v3h-1zM1237 183h1v2h-1zM1238 183h1v2h-1zM1239 183h1v3h-1zM1240 184h1v2h-1zM1241 184h1v3h-1zM1242 185h1v2h-1zM1243 186h1v2h-1zM1244 187h1v1h-1zM1245 187h1v2h-1zM1246 188h1v1h-1zM1247 188h1v1h-1zM1248 188h1v2h-1zM1249 189h1v1h-1zM1250 189h1v2h-1zM1251 190h1v1h-1zM1252 190h1v1h-1zM1253 190h1v2h-1zM1254 191h1v1h-1zM1255 190h1v2h-1zM1256 190h1v3h-1zM1257 191h1v2h-1zM1258 191h1v3h-1zM1259 192h1v2h-1zM1260 193h1v2h-1zM1261 193h1v3h-1zM1262 194h1v2h-1zM1263 194h1v3h-1zM1264 195h1v1h-1zM1265 195h1v1h-1zM1266 195h1v2h-1zM1267 196h1v2h-1zM1268 196h1v2h-1zM1269 196h1v3h-1zM1270 197h1v2h-1zM1271 197h1v2h-1zM1272 197h1v3h-1zM1273 198h1v2h-1zM1274 198h1v2h-1zM1275 198h1v2h-1zM1276 198h1v3h-1zM1277 199h1v2h-1zM1278 199h1v2h-1zM1279 199h1v2h-1zM1280 199h1v3h-1zM1281 200h1v2h-1zM1282 200h1v2h-1zM1283 200h1v2h-1zM1284 201h1v1h-1zM1285 201h1v1h-1zM1286 201h1v1h-1zM1287 201h1v2h-1zM1288 202h1v2h-1zM1289 202h1v2h-1zM1290 202h1v2h-1zM1291 202h1v3h-1zM1292 203h1v2h-1zM1293 203h1v2h-1zM1294 203h1v2h-1zM1295 203h1v3h-1zM1296 204h1v2h-1zM1297 204h1v2h-1zM1298 204h1v2h-1zM1299 204h1v2h-1zM1300 204h1v3h-1zM1301 205h1v2h-1zM1302 205h1v2h-1zM1303 205h1v2h-1zM1304 205h1v1h-1zM1305 205h1v1h-1zM1306 205h1v1h-1zM1307 205h1v2h-1zM1308 206h1v1h-1zM1309 206h1v1h-1zM1310 206h1v1h-1zM1311 206h1v1h-1zM1312 206h1v1h-1zM1313 206h1v1h-1zM1314 206h1v2h-1zM1315 207h1v2h-1zM1316 207h1v2h-1zM1317 207h1v2h-1zM1318 207h1v2h-1zM1319 207h1v2h-1zM1320 207h1v2h-1zM1321 207h1v3h-1zM1322 208h1v2h-1zM1323 208h1v2h-1zM1324 208h1v2h-1zM1325 208h1v2h-1zM1326 208h1v1h-1zM1327 208h1v1h-1zM1328 208h1v2h-1zM1329 209h1v1h-1zM1330 208h1v2h-1zM1331 208h1v2h-1zM1332 208h1v2h-1zM1333 208h1v2h-1zM1334 208h1v3h-1zM1335 209h1v2h-1zM1336 210h1v1h-1zM1337 210h1v1h-1zM1338 210h1v1h-1zM1339 210h1v1h-1zM1340 210h1v1h-1zM1341 210h1v1h-1zM1342 210h1v1h-1zM1343 210h1v1h-1zM1344 210h1v1h-1zM1345 210h1v1h-1zM1346 210h1v2h-1zM1347 211h1v1h-1zM1348 211h1v1h-1zM1349 211h1v1h-1zM1350 211h1v1h-1zM1351 211h1v1h-1zM1352 211h1v1h-1zM1353 211h1v1h-1zM1354 211h1v1h-1zM1355 211h1v1h-1zM1356 211h1v1h-1zM1357 211h1v1h-1zM1358 211h1v2h-1zM1359 212h1v1h-1zM1360 212h1v1h-1zM1361 212h1v1h-1zM1362 212h1v1h-1zM1363 212h1v1h-1zM1364 212h1v1h-1zM1365 212h1v1h-1zM1366 212h1v1h-1zM1367 212h1v1h-1zM1368 212h1v1h-1zM1369 212h1v1h-1zM1370 212h1v2h-1zM1371 213h1v1h-1zM1372 213h1v1h-1zM1373 213h1v1h-1zM1374 213h1v1h-1zM1375 212h1v2h-1zM1376 212h1v2h-1zM1377 212h1v2h-1zM1378 212h1v2h-1zM1379 213h1v1h-1zM1380 213h1v2h-1zM1381 213h1v2h-1zM1382 213h1v3h-1zM1383 214h1v2h-1zM1384 214h1v2h-1zM1385 214h1v2h-1zM1386 214h1v2h-1zM1387 214h1v2h-1zM1388 214h1v2h-1zM1389 214h1v2h-1zM1390 214h1v2h-1zM1391 214h1v2h-1zM1392 214h1v2h-1zM1393 214h1v2h-1zM1394 214h1v2h-1zM1395 214h1v2h-1zM1396 214h1v1h-1zM1397 214h1v1h-1zM1398 214h1v1h-1zM1399 214h1v2h-1zM1400 215h1v1h-1zM1401 215h1v1h-1zM1402 215h1v1h-1zM1403 215h1v1h-1zM1404 215h1v1h-1zM1405 215h1v1h-1zM1406 215h1v1h-1zM1407 215h1v1h-1zM1408 214h1v2h-1zM1409 214h1v2h-1zM1410 214h1v2h-1zM1411 214h1v2h-1zM1412 214h1v2h-1zM1413 214h1v2h-1zM1414 214h1v2h-1zM1415 214h1v2h-1zM1416 214h1v2h-1zM1417 215h1v1h-1zM1418 215h1v1h-1zM1419 214h1v3h-1zM1420 216h1v1h-1zM1421 216h1v1h-1zM1422 216h1v1h-1zM1423 215h1v2h-1zM1424 215h1v2h-1zM1425 215h1v2h-1zM1426 215h1v2h-1zM1427 215h1v2h-1zM1428 215h1v2h-1zM1429 215h1v2h-1zM1430 215h1v2h-1zM1431 215h1v2h-1zM1432 215h1v2h-1zM1433 215h1v2h-1zM1434 215h1v2h-1zM1435 215h1v2h-1zM1436 215h1v2h-1zM1437 215h1v2h-1zM1438 215h1v2h-1zM1439 216h1v2h-1zM1440 217h1v1h-1zM1441 217h1v1h-1zM1442 217h1v1h-1zM1443 217h1v1h-1zM1444 217h1v1h-1zM1445 217h1v1h-1zM1446 217h1v1h-1zM1447 217h1v1h-1zM1448 217h1v1h-1zM1449 217h1v1h-1zM1450 217h1v1h-1zM1451 216h1v2h-1zM1452 216h1v2h-1zM1453 216h1v2h-1zM1454 216h1v2h-1zM1455 216h1v2h-1zM1456 216h1v2h-1zM1457 216h1v2h-1zM1458 216h1v2h-1zM1459 216h1v2h-1zM1460 216h1v2h-1zM1461 216h1v2h-1zM1462 217h1v1h-1zM1463 217h1v1h-1zM1464 217h1v1h-1zM1465 217h1v1h-1zM1466 217h1v1h-1zM1467 217h1v1h-1zM1468 217h1v1h-1zM1469 217h1v1h-1zM1470 217h1v1h-1zM1471 217h1v1h-1zM1472 217h1v1h-1zM1473 217h1v1h-1zM1474 217h1v1h-1zM1475 217h1v2h-1zM1476 218h1v1h-1zM1477 218h1v1h-1zM1478 218h1v1h-1zM1479 218h1v1h-1zM1480 218h1v2h-1zM1481 218h1v2h-1zM1482 218h1v2h-1zM1483 218h1v2h-1zM1484 218h1v2h-1zM1485 218h1v2h-1zM1486 218h1v2h-1zM1487 218h1v2h-1zM1488 218h1v2h-1zM1489 218h1v2h-1zM1490 218h1v2h-1zM1491 218h1v2h-1zM1492 218h1v2h-1zM1493 218h1v2h-1zM1494 218h1v1h-1zM1495 218h1v1h-1zM1496 218h1v1h-1zM1497 218h1v1h-1zM1498 218h1v1h-1zM1499 218h1v2h-1zM1500 218h1v2h-1zM1501 218h1v2h-1zM1502 218h1v2h-1zM1503 218h1v2h-1zM1504 218h1v2h-1zM1505 218h1v2h-1zM1506 218h1v2h-1zM1507 218h1v2h-1zM1508 218h1v2h-1zM1509 218h1v2h-1zM1510 218h1v2h-1zM1511 218h1v2h-1zM1512 219h1v1h-1zM1513 218h1v2h-1zM1514 218h1v2h-1zM1515 218h1v2h-1zM1516 218h1v2h-1zM1517 218h1v2h-1zM1518 218h1v2h-1zM1519 218h1v2h-1zM1520 218h1v2h-1zM1521 218h1v2h-1zM1522 218h1v2h-1zM1523 219h1v2h-1zM1524 219h1v2h-1zM1525 219h1v2h-1zM1526 219h1v2h-1zM1527 219h1v2h-1zM1528 219h1v1h-1zM1529 219h1v1h-1zM1530 219h1v1h-1zM1531 219h1v1h-1zM1532 219h1v1h-1zM1533 219h1v1h-1zM1534 219h1v1h-1zM1535 219h1v1h-1zM1536 218h1v2h-1zM1537 218h1v2h-1zM1538 218h1v2h-1zM1539 218h1v2h-1zM1540 218h1v2h-1zM1541 218h1v2h-1zM1542 218h1v2h-1zM1543 218h1v2h-1zM1544 218h1v2h-1zM1545 218h1v2h-1zM1546 218h1v2h-1zM1547 218h1v3h-1zM1548 219h1v2h-1zM1549 219h1v2h-1zM1550 219h1v2h-1zM1551 219h1v2h-1zM1552 220h1v1h-1zM1553 220h1v1h-1zM1554 220h1v1h-1zM1555 220h1v2h-1zM1556 220h1v2h-1zM1557 220h1v2h-1zM1558 220h1v2h-1zM1559 220h1v2h-1zM1560 220h1v2h-1zM1561 220h1v2h-1zM1562 220h1v2h-1zM1563 220h1v2h-1zM1564 220h1v2h-1zM1565 220h1v1h-1zM1566 220h1v1h-1zM1567 220h1v1h-1zM1568 220h1v1h-1zM1569 220h1v1h-1zM1570 220h1v1h-1zM1571 220h1v1h-1zM1572 220h1v1h-1zM1573 219h1v2h-1zM1574 220h1v2h-1zM1575 220h1v2h-1zM1576 220h1v2h-1zM1577 220h1v2h-1zM1578 220h1v2h-1zM1579 220h1v2h-1zM1580 220h1v2h-1zM1581 220h1v2h-1zM1582 220h1v2h-1zM1583 220h1v2h-1zM1584 220h1v2h-1zM1585 220h1v2h-1zM1586 220h1v2h-1zM1587 220h1v2h-1zM1588 220h1v1h-1zM1589 220h1v1h-1zM1590 220h1v1h-1zM1591 220h1v1h-1zM1592 220h1v1h-1zM1593 220h1v1h-1zM1594 220h1v1h-1zM1595 220h1v1h-1zM1596 220h1v2h-1zM1597 221h1v1h-1zM1598 221h1v1h-1zM1599 221h1v1h-1zM1600 221h1v1h-1zM1601 221h1v1h-1zM1602 221h1v1h-1zM1603 221h1v1h-1zM1604 221h1v1h-1zM1605 221h1v2h-1zM1606 221h1v2h-1zM1607 221h1v2h-1zM1608 221h1v2h-1zM1609 221h1v2h-1zM1610 221h1v2h-1zM1611 221h1v2h-1zM1612 221h1v2h-1zM1613 221h1v2h-1zM1614 221h1v2h-1zM1615 221h1v2h-1zM1616 221h1v2h-1zM1617 221h1v2h-1zM1618 221h1v2h-1zM1619 221h1v1h-1zM1620 221h1v1h-1zM1621 221h1v2h-1zM1622 221h1v2h-1zM1623 221h1v2h-1zM1624 221h1v2h-1zM1625 221h1v2h-1zM1626 221h1v2h-1zM1627 221h1v2h-1zM1628 221h1v2h-1zM1629 221h1v2h-1zM1630 221h1v2h-1zM1631 221h1v2h-1zM1632 221h1v2h-1zM1633 221h1v2h-1zM1634 221h1v2h-1zM1635 221h1v2h-1zM1636 221h1v2h-1zM1637 221h1v1h-1zM1638 221h1v1h-1zM1639 221h1v1h-1zM1640 221h1v1h-1zM1641 221h1v1h-1zM1642 221h1v1h-1zM1643 221h1v1h-1zM1644 221h1v2h-1zM1645 221h1v2h-1zM1646 221h1v2h-1zM1647 221h1v2h-1zM1648 221h1v2h-1zM1649 221h1v1h-1zM1650 220h1v2h-1zM1651 221h1v1h-1zM1652 221h1v1h-1zM1653 221h1v1h-1zM1654 220h1v2h-1zM1655 220h1v2h-1zM1656 220h1v2h-1zM1657 221h1v1h-1zM1658 220h1v3h-1zM1659 221h1v2h-1zM1660 221h1v2h-1zM1661 221h1v2h-1zM1662 221h1v2h-1zM1663 221h1v2h-1zM1664 221h1v2h-1zM1665 221h1v2h-1zM1666 221h1v2h-1zM1667 221h1v2h-1zM1668 221h1v2h-1zM1669 221h1v2h-1zM1670 222h1v1h-1zM1671 222h1v1h-1zM1672 222h1v1h-1zM1673 222h1v1h-1zM1674 222h1v1h-1zM1675 222h1v1h-1zM1676 222h1v1h-1zM1677 222h1v1h-1zM1678 222h1v1h-1zM1679 221h1v2h-1zM1680 221h1v2h-1zM1681 221h1v2h-1zM1682 221h1v2h-1zM1683 221h1v2h-1zM1684 221h1v2h-1zM1685 221h1v2h-1zM1686 221h1v2h-1zM1687 221h1v2h-1zM1688 221h1v2h-1zM1689 221h1v2h-1zM1690 221h1v2h-1zM1691 221h1v2h-1zM1692 222h1v1h-1zM1693 222h1v1h-1zM1694 222h1v2h-1zM1695 222h1v2h-1zM1696 222h1v2h-1zM1697 222h1v2h-1zM1698 222h1v2h-1zM1699 222h1v2h-1zM1700 222h1v2h-1zM1701 222h1v2h-1zM1702 222h1v2h-1zM1703 222h1v2h-1zM1704 222h1v2h-1zM1705 222h1v2h-1zM1706 222h1v2h-1zM1707 222h1v3h-1zM1708 223h1v1h-1zM1709 223h1v1h-1zM1710 223h1v1h-1zM1711 223h1v1h-1zM1712 223h1v1h-1zM1713 223h1v1h-1zM1714 223h1v1h-1zM1715 222h1v2h-1zM1716 222h1v2h-1zM1717 222h1v2h-1zM1718 223h1v2h-1zM1719 223h1v2h-1zM1720 223h1v2h-1zM1721 223h1v2h-1zM1722 223h1v2h-1zM1723 223h1v2h-1zM1724 223h1v2h-1zM1725 223h1v2h-1zM1726 223h1v2h-1zM1727 223h1v2h-1zM1728 223h1v2h-1zM1729 223h1v2h-1zM1730 223h1v2h-1zM1731 223h1v1h-1zM1732 223h1v1h-1zM1733 223h1v1h-1zM1734 223h1v1h-1zM1735 223h1v1h-1zM1736 223h1v1h-1zM1737 223h1v1h-1zM1738 223h1v1h-1zM1739 223h1v1h-1zM1740 223h1v1h-1zM1741 223h1v1h-1zM1742 223h1v2h-1zM1743 224h1v1h-1zM1744 224h1v1h-1zM1745 224h1v1h-1zM1746 224h1v1h-1zM1747 224h1v1h-1zM1748 224h1v1h-1zM1749 224h1v1h-1zM1750 224h1v1h-1z" fill="#f4f400" shape-rendering="crispEdges"/><rect x="164.4" y="220.4" width="4.1" height="30.8" fill="#f2f200"/><rect x="47.3" y="225" width="2.7" height="39" fill="#f2f200"/></g></svg>
<svg style="left:0;top:158.75px" width="50" height="28"><path d="M10 1.5 H30.5 L41.5 14 L30.5 26.5 H10 Q6.5 26.5 6.5 23 V5 Q6.5 1.5 10 1.5 Z" fill="#23200b" stroke="#e0dc3a" stroke-width="1.4"/></svg>
<svg style="left:0;top:459.4px" width="50" height="28"><path d="M10 1.5 H30.5 L41.5 14 L30.5 26.5 H10 Q6.5 26.5 6.5 23 V5 Q6.5 1.5 10 1.5 Z" fill="#22ccd6" stroke="#0e3a3e" stroke-width="1.4"/></svg>
<svg style="left:0;top:670.5px" width="50" height="28"><path d="M10 1.5 H30.5 L41.5 14 L30.5 26.5 H10 Q6.5 26.5 6.5 23 V5 Q6.5 1.5 10 1.5 Z" fill="#1c0d0f" stroke="#1c0d0f" stroke-width="1.4"/></svg>
<svg style="left:0;top:861px" width="50" height="28"><path d="M10 1.5 H30.5 L41.5 14 L30.5 26.5 H10 Q6.5 26.5 6.5 23 V5 Q6.5 1.5 10 1.5 Z" fill="#141a08" stroke="#8cc63e" stroke-width="1.4"/></svg>
<svg style="left:30px;top:55px" width="36" height="44">
<path d="M7 2 H27 L17 11.7 Z" fill="#f28c1e"/>
<path d="M8 13 H26 V32 H21 L17 38.5 L13 32 H8 Z" fill="#000" stroke="#f28c1e" stroke-width="2.2"/>
<path d="M12.3 17.5 H21.7 V19.7 H18.1 V28.3 H15.9 V19.7 H12.3 Z" fill="#f28c1e"/>
</svg>
<svg style="left:580px;top:30px" width="600" height="28">
<path d="M13 6.5 H6.5 V22.5 H13" fill="none" stroke="#e6e6e6" stroke-width="1.5"/>
<rect x="6.5" y="14" width="581" height="2" fill="#b3b3b3"/>
<path d="M581 6.5 H587.5 V22.5 H581" fill="none" stroke="#e6e6e6" stroke-width="1.5"/>
<path d="M13 3 H28 L20.5 8.5 Z" fill="#f28c1e"/>
<path d="M14.5 10.5 H27 V23 H23.5 L20.5 26.5 L17.5 23 H14.5 Z" fill="#000" stroke="#f28c1e" stroke-width="1.6"/>
<path d="M17.3 13.8 H24.2 V15.6 H21.6 V20.8 H19.9 V15.6 H17.3 Z" fill="#f28c1e"/>
</svg>
<div class="a" style="left:1769px;top:29px;width:151px;height:966px;border-left:1px solid #55585c;border-top:1px solid #6b6560;border-bottom:1px solid #6b6560;background:#2e2e2e"></div>
<div class="btn" style="left:1777px;top:54px;width:63px;height:37px;"></div>
<div class="btn" style="left:1849px;top:54px;width:63px;height:37px;"></div>
<div class="btn" style="left:1777px;top:100px;width:63px;height:37px;"></div>
<div class="btn" style="left:1849px;top:100px;width:63px;height:37px;"></div>
<div class="btn" style="left:1777px;top:146px;width:63px;height:37px;"></div>
<div class="btn" style="left:1849px;top:146px;width:63px;height:37px;"></div>
<div class="btn" style="left:1777px;top:196px;width:63px;height:37px;"></div>
<div class="btn" style="left:1849px;top:196px;width:63px;height:37px;"></div>
<svg style="left:1776px;top:194px" width="66" height="42" fill="#c8c8c8">
<rect x="20.3" y="8" width="2.8" height="2.6"/><rect x="26" y="8" width="4.4" height="2.6"/><rect x="33" y="8" width="4.4" height="2.6"/><rect x="40.3" y="8" width="3.7" height="2.6"/>
<rect x="20.3" y="14" width="2.8" height="3.2"/><rect x="20.3" y="19.8" width="2.8" height="3.2"/>
<rect x="41.2" y="14" width="2.8" height="3.2"/><rect x="41.2" y="19.8" width="2.8" height="3.2"/>
<rect x="20.3" y="26" width="2.8" height="2.8"/><rect x="26" y="26" width="4.4" height="2.8"/><rect x="33" y="26" width="4.4" height="2.8"/>
<circle cx="33.8" cy="17.1" r="4.3" fill="none" stroke="#c8c8c8" stroke-width="1.5"/>
<line x1="30.2" y1="20.3" x2="25.8" y2="23.4" stroke="#c8c8c8" stroke-width="2.6" stroke-linecap="round"/>
<path d="M38.3 23.3 L46.5 27.5 L43.6 28.5 L45.6 32 L43.8 32.8 L41.8 29.4 L39.6 31.6 Z"/>
</svg>
<div class="a" style="left:1773px;top:189px;width:144px;height:1px;background:#5d5751"></div>
<div class="a" style="left:1773px;top:241px;width:144px;height:1px;background:#5d5751"></div>
<svg style="left:1756px;top:498px" width="12" height="28"><circle cx="6" cy="5" r="2" fill="#bdbdbd"/><circle cx="6" cy="13.75" r="2" fill="#bdbdbd"/><circle cx="6" cy="22" r="2" fill="#bdbdbd"/></svg>
<div class="a" style="left:3px;top:983px;width:90px;height:95px;border-radius:5px;overflow:hidden;background:#c9c9c9;border:1px solid #1e1e1e"><div class="a" style="left:0;top:0;width:100%;height:19px;background:#4b4727"></div><div class="a" style="left:0;top:19px;width:100%;height:5px;background:#b9b9b9"></div></div>
<div class="a" style="left:98px;top:983px;width:90px;height:95px;border-radius:5px;overflow:hidden;background:#c9c9c9;border:1px solid #1e1e1e"><div class="a" style="left:0;top:0;width:100%;height:19px;background:#22d0d8"></div><div class="a" style="left:0;top:19px;width:100%;height:5px;background:#b9b9b9"></div></div>
<div class="a" style="left:193px;top:999px;width:90px;height:79px;border-radius:5px;overflow:hidden;background:#c9c9c9;border:1px solid #1e1e1e"><div class="a" style="left:0;top:0;width:100%;height:18px;background:#45262a"></div><div class="a" style="left:0;top:18px;width:100%;height:3px;background:#b9b9b9"></div></div>
<div class="a" style="left:288px;top:999px;width:90px;height:79px;border-radius:5px;overflow:hidden;background:#c9c9c9;border:1px solid #1e1e1e"><div class="a" style="left:0;top:0;width:100%;height:18px;background:#2f3a1f"></div><div class="a" style="left:0;top:18px;width:100%;height:3px;background:#b9b9b9"></div></div>
<div class="a" style="left:4px;top:1007px;width:88px;height:16.5px;background:#ff0000"></div>
<svg style="left:3px;top:1007px" width="18" height="18"><path d="M7.8 1.6 L14.8 15.3 H0.8 Z" fill="#f2ea00" stroke="#3a3a6a" stroke-width="0.9" stroke-linejoin="round"/><rect x="7.1" y="5.5" width="1.5" height="8.5" fill="#9a9838"/></svg>
<div class="a" style="left:99px;top:1007px;width:88px;height:16.5px;background:#ff0000"></div>
<svg style="left:98px;top:1007px" width="18" height="18"><path d="M7.8 1.6 L14.8 15.3 H0.8 Z" fill="#f2ea00" stroke="#3a3a6a" stroke-width="0.9" stroke-linejoin="round"/><rect x="7.1" y="5.5" width="1.5" height="8.5" fill="#9a9838"/></svg>
<div class="a" style="left:1918px;top:995px;width:2px;height:85px;background:#3a3a3a"></div>
<div class="a" style="left:1116px;top:998px;width:1px;height:79px;background:#5d5751"></div>
<div class="a" style="left:1267px;top:998px;width:1px;height:79px;background:#5d5751"></div>
<div class="a" style="left:1810px;top:998px;width:1px;height:79px;background:#5d5751"></div>
<div class="btn" style="left:1127px;top:998px;width:40px;height:79px;border-radius:7px;"></div>
<div class="a" style="left:1131px;top:1006px;width:32px;height:2px;background:#f28c1e"></div>
<div class="btn" style="left:1172px;top:998px;width:40px;height:79px;border-radius:7px;"></div>
<div class="a" style="left:1176px;top:1006px;width:32px;height:2px;background:#c8c8d8"></div>
<div class="btn" style="left:1217px;top:998px;width:40px;height:79px;border-radius:7px;"></div>
<div class="a" style="left:1221px;top:1006px;width:32px;height:2px;background:#c050f0"></div>
<div class="a" style="left:1278.2px;top:999.2px;width:198.6px;height:78.3px;border-radius:5px;overflow:hidden;background:#c9c9c9;border:1px solid #1c1c1c"><div class="a" style="left:0;top:0;width:100%;height:18px;background:#5a5b5d"></div><div class="a" style="left:0;top:18px;width:100%;height:3px;background:#b3b3b3"></div></div>
<svg style="left:1390px;top:1061px" width="12" height="15"><path d="M1.5 1.2 H9.5 V9.5 H7 L5.5 12 L4 9.5 H1.5 Z" fill="#000" stroke="#f28c1e" stroke-width="1.4"/><path d="M3.2 2.8 H7.8 V4.2 H6.2 V8 H4.8 V4.2 H3.2 Z" fill="#fff"/></svg>
<div class="a" style="left:1483.2px;top:999.2px;width:158.6px;height:78.3px;border-radius:5px;overflow:hidden;background:#c9c9c9;border:1px solid #1c1c1c"><div class="a" style="left:0;top:0;width:100%;height:18px;background:#5a5b5d"></div><div class="a" style="left:0;top:18px;width:100%;height:3px;background:#b3b3b3"></div></div>
<svg style="left:1549px;top:1024px" width="20" height="14"><path d="M2 12 H5.5 L13 3 H18" fill="none" stroke="#2a2a78" stroke-width="1.3"/></svg>
<div class="a" style="left:1648.2px;top:999.2px;width:148.6px;height:78.3px;border-radius:5px;overflow:hidden;background:#c9c9c9;border:1px solid #1c1c1c"><div class="a" style="left:0;top:0;width:100%;height:18px;background:#5a5b5d"></div><div class="a" style="left:0;top:18px;width:100%;height:3px;background:#b3b3b3"></div></div>
<div class="a" style="left:1821px;top:998px;width:90px;height:35px;border:1px solid #7a6a6a;border-radius:6px;background:#fe1f26"></div>
<div class="a" style="left:1821px;top:1042px;width:90px;height:36px;border:1px solid #6a6a6a;border-radius:6px;background:#c9c9c9"></div>
<svg width="1920" height="1080" style="left:0;top:0;font-family:'Liberation Sans',sans-serif;white-space:pre"><rect x="1716.9" y="72.8" width="30.1" height="15" fill="#000"/><rect x="1716.9" y="95.9" width="30.1" height="15" fill="#000"/><rect x="1716.9" y="119.0" width="30.1" height="15" fill="#000"/><rect x="1724.2" y="142.1" width="22.8" height="15" fill="#000"/><rect x="1724.2" y="165.2" width="22.8" height="15" fill="#000"/><rect x="1724.2" y="188.3" width="22.8" height="15" fill="#000"/><rect x="1724.2" y="234.5" width="22.8" height="15" fill="#000"/><rect x="1719.8" y="257.6" width="27.2" height="15" fill="#000"/><rect x="1713.3" y="303.0" width="33.7" height="15" fill="#000"/><rect x="1724.2" y="326.2" width="22.8" height="15" fill="#000"/><rect x="1713.3" y="349.4" width="33.7" height="15" fill="#000"/><rect x="1724.2" y="372.6" width="22.8" height="15" fill="#000"/><rect x="1713.3" y="395.8" width="33.7" height="15" fill="#000"/><rect x="1724.2" y="419.0" width="22.8" height="15" fill="#000"/><rect x="1698.9" y="442.2" width="48.1" height="15" fill="#000"/><rect x="1694.5" y="488.6" width="52.5" height="15" fill="#000"/><rect x="1724.2" y="537.0" width="22.8" height="15" fill="#000"/><rect x="1713.3" y="560.2" width="33.7" height="15" fill="#000"/><rect x="1724.2" y="583.4" width="22.8" height="15" fill="#000"/><rect x="1713.3" y="606.6" width="33.7" height="15" fill="#000"/><rect x="1724.2" y="629.8" width="22.8" height="15" fill="#000"/><rect x="1719.8" y="722.6" width="27.2" height="15" fill="#000"/><rect x="1724.2" y="765.2" width="22.8" height="15" fill="#000"/><rect x="1713.3" y="788.4" width="33.7" height="15" fill="#000"/><rect x="1724.2" y="811.6" width="22.8" height="15" fill="#000"/><rect x="1713.3" y="834.8" width="33.7" height="15" fill="#000"/><rect x="1724.2" y="858.0" width="22.8" height="15" fill="#000"/><rect x="1698.9" y="881.2" width="48.1" height="15" fill="#000"/><rect x="1694.5" y="927.6" width="52.5" height="15" fill="#000"/><rect x="1719.8" y="950.8" width="27.2" height="15" fill="#000"/><rect x="1709.0" y="974.0" width="38.0" height="15" fill="#000"/><rect x="206.2" y="504.3" width="31.7" height="15" fill="#000"/><rect x="380.2" y="504.3" width="31.7" height="15" fill="#000"/><rect x="555.2" y="504.3" width="31.7" height="15" fill="#000"/><rect x="726.5" y="504.3" width="38.9" height="15" fill="#000"/><rect x="901.5" y="504.3" width="38.9" height="15" fill="#000"/><rect x="1076.5" y="504.3" width="38.9" height="15" fill="#000"/><rect x="1250.5" y="504.3" width="38.9" height="15" fill="#000"/><rect x="1425.5" y="504.3" width="38.9" height="15" fill="#000"/><rect x="1600.5" y="504.3" width="38.9" height="15" fill="#000"/><clipPath id="clip2"><rect x="3" y="458" width="1748" height="24"/></clipPath><g><text transform="translate(19.30 19.00) scale(1.0047 1)" font-size="16" fill="#f2f2f2">File</text></g><g><text transform="translate(85.66 19.00) scale(1.0359 1)" font-size="16" fill="#f2f2f2">Edit</text></g><g><text transform="translate(154.33 19.00) scale(1.1677 1)" font-size="16" fill="#f2f2f2">Utility</text></g><g><text transform="translate(239.53 19.00) scale(1.0747 1)" font-size="16" fill="#f2f2f2">Help</text></g><g><text transform="translate(16.25 50.00) scale(1.0368 1)" font-size="17.3" fill="#ececec">Waveform View</text></g><g><text x="1718.93" y="84.80" font-size="13" fill="#e6e62e">14 V</text></g><g><text x="1718.93" y="107.90" font-size="13" fill="#e6e62e">12 V</text></g><g><text x="1718.93" y="131.00" font-size="13" fill="#e6e62e">10 V</text></g><g><text x="1726.16" y="154.10" font-size="13" fill="#e6e62e">8 V</text></g><g><text x="1726.16" y="177.20" font-size="13" fill="#e6e62e">6 V</text></g><g><text x="1726.16" y="200.30" font-size="13" fill="#e6e62e">4 V</text></g><g><text x="1726.16" y="223.40" font-size="13" fill="#e6e62e">2 V</text></g><g><text x="1726.16" y="246.50" font-size="13" fill="#e6e62e">0 V</text></g><g><text x="1721.83" y="269.60" font-size="13" fill="#e6e62e">-2 V</text></g><g><text x="1715.32" y="315.00" font-size="13" fill="#22c3d0">3.5 V</text></g><g><text x="1726.16" y="338.20" font-size="13" fill="#22c3d0">3 V</text></g><g><text x="1715.32" y="361.40" font-size="13" fill="#22c3d0">2.5 V</text></g><g><text x="1726.16" y="384.60" font-size="13" fill="#22c3d0">2 V</text></g><g><text x="1715.32" y="407.80" font-size="13" fill="#22c3d0">1.5 V</text></g><g><text x="1726.16" y="431.00" font-size="13" fill="#22c3d0">1 V</text></g><g><text x="1700.87" y="454.20" font-size="13" fill="#22c3d0">500 mV</text></g><g><text x="1726.16" y="477.40" font-size="13" fill="#0a1618">0 V</text></g><g><text x="1696.54" y="500.60" font-size="13" fill="#22c3d0">-500 mV</text></g><g><text x="1726.16" y="549.00" font-size="13" fill="#e4405e">3 V</text></g><g><text x="1715.32" y="572.20" font-size="13" fill="#e4405e">2.5 V</text></g><g><text x="1726.16" y="595.40" font-size="13" fill="#e4405e">2 V</text></g><g><text x="1715.32" y="618.60" font-size="13" fill="#e4405e">1.5 V</text></g><g><text x="1726.16" y="641.80" font-size="13" fill="#e4405e">1 V</text></g><g><text x="1700.87" y="665.00" font-size="13" fill="#2a1216">500 mV</text></g><g><text x="1726.16" y="688.20" font-size="13" fill="#2a1216">0 V</text></g><g><text x="1696.54" y="711.40" font-size="13" fill="#2a1216">-500 mV</text></g><g><text x="1721.83" y="734.60" font-size="13" fill="#e4405e">-1 V</text></g><g><text x="1726.16" y="777.20" font-size="13" fill="#8cc63e">3 V</text></g><g><text x="1715.32" y="800.40" font-size="13" fill="#8cc63e">2.5 V</text></g><g><text x="1726.16" y="823.60" font-size="13" fill="#8cc63e">2 V</text></g><g><text x="1715.32" y="846.80" font-size="13" fill="#8cc63e">1.5 V</text></g><g><text x="1726.16" y="870.00" font-size="13" fill="#8cc63e">1 V</text></g><g><text x="1700.87" y="893.20" font-size="13" fill="#8cc63e">500 mV</text></g><g><text x="1726.16" y="916.40" font-size="13" fill="#8cc63e">0 V</text></g><g><text x="1696.54" y="939.60" font-size="13" fill="#8cc63e">-500 mV</text></g><g><text x="1721.83" y="962.80" font-size="13" fill="#8cc63e">-1 V</text></g><g><text x="1710.99" y="986.00" font-size="13" fill="#8cc63e">-1.5 V</text></g><g><text x="38.58" y="516.30" font-size="13" fill="#c6c6c6">0 s</text></g><g><text x="208.16" y="516.30" font-size="13" fill="#c6c6c6">3 ms</text></g><g><text x="382.16" y="516.30" font-size="13" fill="#c6c6c6">6 ms</text></g><g><text x="557.16" y="516.30" font-size="13" fill="#c6c6c6">9 ms</text></g><g><text x="728.55" y="516.30" font-size="13" fill="#c6c6c6">12 ms</text></g><g><text x="903.55" y="516.30" font-size="13" fill="#c6c6c6">15 ms</text></g><g><text x="1078.55" y="516.30" font-size="13" fill="#c6c6c6">18 ms</text></g><g><text x="1252.55" y="516.30" font-size="13" fill="#c6c6c6">21 ms</text></g><g><text x="1427.55" y="516.30" font-size="13" fill="#c6c6c6">24 ms</text></g><g><text x="1602.55" y="516.30" font-size="13" fill="#c6c6c6">27 ms</text></g><g><text transform="translate(15.20 176.10) scale(0.9086 1)" font-size="11.5" fill="#e8e45a">C 1</text></g><g><text transform="translate(53.46 178.30) scale(1.0385 1)" font-size="19" fill="#e8e43c">U_loop</text></g><g><text transform="translate(15.20 477.00) scale(0.9543 1)" font-size="11.5" fill="#0c1416">C 2</text></g><g clip-path="url(#clip2)"><text transform="translate(54.43 480.50) scale(0.9711 1)" font-size="19" fill="#0a4046">U_LP-old</text></g><g clip-path="url(#clip2)"><text transform="translate(53.43 479.50) scale(0.9711 1)" font-size="19" fill="#22b9c2">U_LP-old</text></g><g><text transform="translate(15.20 688.50) scale(0.9086 1)" font-size="11.5" fill="#f0f0f0">C 3</text></g><g><text transform="translate(53.75 691.00) scale(0.9979 1)" font-size="19" fill="#7a1426">U_LP-down</text></g><g><text transform="translate(52.75 690.00) scale(0.9979 1)" font-size="19" fill="#e3244a">U_LP-down</text></g><g><text transform="translate(15.20 879.00) scale(0.8595 1)" font-size="11.5" fill="#8cc63e">C 4</text></g><g><text transform="translate(52.78 881.25) scale(0.9704 1)" font-size="19" fill="#8cc63e">U_LP-up</text></g><g><text x="1797.90" y="26.00" font-size="29" fill="#ffffff" font-weight="700">e</text></g><g><text transform="translate(1838.69 25.80) scale(0.9072 1)" font-size="29" fill="#ffffff" font-weight="700">ronix</text></g><g><text transform="translate(1806.00 43.50) scale(1.0688 1)" font-size="14.3" fill="#ececec" font-weight="700">Add New...</text></g><g><text transform="translate(1784.00 77.00) scale(0.9173 1)" font-size="15.5" fill="#ececec">Cursors</text></g><g><text transform="translate(1855.60 76.90) scale(0.9951 1)" font-size="15.5" fill="#ececec">Callout</text></g><g><text x="1778.30" y="122.90" font-size="15.5" fill="#ececec">Measure</text></g><g><text transform="translate(1857.50 122.90) scale(0.9404 1)" font-size="15.5" fill="#ececec">Search</text></g><g><text transform="translate(1783.67 160.75) scale(0.9345 1)" font-size="15.5" fill="#ececec">Results</text></g><g><text transform="translate(1790.30 176.60) scale(1.0073 1)" font-size="15.5" fill="#ececec">Table</text></g><g><text transform="translate(1865.87 168.90) scale(1.0340 1)" font-size="15.5" fill="#ececec">Plot</text></g><g><text transform="translate(1854.62 219.20) scale(1.0778 1)" font-size="15.5" fill="#ececec">More...</text></g><g><text transform="translate(8.80 997.10) scale(0.8741 1)" font-size="15.3" fill="#e6e040">Ch 1</text></g><g><text transform="translate(19.90 1019.40) scale(1.0317 1)" font-size="15.3" fill="#ffffff">Clipping</text></g><g><text x="10.60" y="1038.50" font-size="15" fill="#111">2 V/div</text></g><g><text transform="translate(10.57 1058.70) scale(1.0313 1)" font-size="15" fill="#111">1 MΩ</text></g><g><text transform="translate(10.58 1076.30) scale(1.0182 1)" font-size="15" fill="#111">1 MHz</text></g><g><text transform="translate(103.80 997.10) scale(0.9181 1)" font-size="15.3" fill="#0a0a0a">Ch 2</text></g><g><text transform="translate(114.90 1019.40) scale(1.0317 1)" font-size="15.3" fill="#ffffff">Clipping</text></g><g><text transform="translate(105.60 1038.50) scale(1.0114 1)" font-size="15" fill="#111">500 mV/div</text></g><g><text transform="translate(105.57 1058.70) scale(1.0313 1)" font-size="15" fill="#111">1 MΩ</text></g><g><text transform="translate(105.58 1076.30) scale(1.0182 1)" font-size="15" fill="#111">1 MHz</text></g><g><text transform="translate(198.70 1012.70) scale(0.9150 1)" font-size="15.3" fill="#f0eaea">Ch 3</text></g><g><text transform="translate(293.70 1012.70) scale(0.8871 1)" font-size="15.3" fill="#8ccf3c">Ch 4</text></g><g><text transform="translate(200.60 1035.90) scale(1.0101 1)" font-size="15" fill="#111">500 mV/div</text></g><g><text transform="translate(200.37 1055.60) scale(1.0341 1)" font-size="15" fill="#111">1 MΩ</text></g><g><text transform="translate(200.37 1073.70) scale(1.0254 1)" font-size="15" fill="#111">1 MHz</text></g><g><text transform="translate(295.60 1035.90) scale(1.0101 1)" font-size="15" fill="#111">500 mV/div</text></g><g><text transform="translate(295.37 1055.60) scale(1.0341 1)" font-size="15" fill="#111">1 MΩ</text></g><g><text transform="translate(295.37 1073.70) scale(1.0254 1)" font-size="15" fill="#111">1 MHz</text></g><g><text x="76.90" y="1070.70" font-size="8.6" fill="#111" font-weight="700">B</text></g><g><text x="81.60" y="1073.70" font-size="8.6" fill="#111" font-weight="700">w</text></g><g><text x="171.90" y="1070.70" font-size="8.6" fill="#111" font-weight="700">B</text></g><g><text x="176.60" y="1073.70" font-size="8.6" fill="#111" font-weight="700">w</text></g><g><text x="266.90" y="1067.50" font-size="8.6" fill="#111" font-weight="700">B</text></g><g><text x="271.60" y="1070.50" font-size="8.6" fill="#111" font-weight="700">w</text></g><g><text x="361.90" y="1067.50" font-size="8.6" fill="#111" font-weight="700">B</text></g><g><text x="366.60" y="1070.50" font-size="8.6" fill="#111" font-weight="700">w</text></g><g><text transform="translate(1132.50 1030.80) scale(1.0192 1)" font-size="16" fill="#ececec">Add</text></g><g><text transform="translate(1130.79 1046.25) scale(0.9617 1)" font-size="16" fill="#ececec">New</text></g><g><text transform="translate(1128.14 1062.20) scale(1.0573 1)" font-size="16" fill="#ececec">Math</text></g><g><text transform="translate(1177.70 1030.80) scale(1.0120 1)" font-size="16" fill="#ececec">Add</text></g><g><text transform="translate(1175.77 1046.25) scale(0.9776 1)" font-size="16" fill="#ececec">New</text></g><g><text transform="translate(1179.57 1062.20) scale(0.9324 1)" font-size="16" fill="#ececec">Ref</text></g><g><text transform="translate(1222.50 1030.80) scale(1.0192 1)" font-size="16" fill="#ececec">Add</text></g><g><text transform="translate(1220.62 1046.25) scale(0.9824 1)" font-size="16" fill="#ececec">New</text></g><g><text transform="translate(1224.43 1062.20) scale(0.8656 1)" font-size="16" fill="#ececec">Bus</text></g><g><text transform="translate(1283.84 1013.80) scale(1.0565 1)" font-size="15.5" fill="#f0f0f0">Horizontal</text></g><g><text transform="translate(1285.50 1035.80) scale(0.9850 1)" font-size="15" fill="#111">3 ms/div</text></g><g><text transform="translate(1285.50 1055.00) scale(0.9191 1)" font-size="15" fill="#111">SR: 2.5 MS/s</text></g><g><text transform="translate(1284.51 1074.20) scale(0.9937 1)" font-size="15" fill="#111">RL: 75 kpts</text></g><g><text transform="translate(1391.20 1035.80) scale(0.9716 1)" font-size="15" fill="#111">30 ms</text></g><g><text transform="translate(1391.20 1055.00) scale(1.0025 1)" font-size="15" fill="#111">400 ns/pt</text></g><g><text transform="translate(1405.80 1074.20) scale(0.9807 1)" font-size="15" fill="#111">2.5%</text></g><g><text transform="translate(1490.30 1013.80) scale(0.9905 1)" font-size="15.5" fill="#f0f0f0">Trigger</text></g><g><text transform="translate(1490.30 1035.80) scale(1.0096 1)" font-size="15" fill="#111">Aux</text></g><g><text transform="translate(1577.54 1035.80) scale(0.9624 1)" font-size="15" fill="#111">1 V</text></g><g><text transform="translate(1654.60 1013.60) scale(1.0358 1)" font-size="15.5" fill="#f0f0f0">Acquisition</text></g><g><text transform="translate(1654.41 1036.00) scale(1.0938 1)" font-size="15" fill="#111">Manual,</text></g><g><text transform="translate(1736.25 1036.00) scale(1.0326 1)" font-size="15" fill="#111">Analyze</text></g><g><text transform="translate(1654.49 1054.30) scale(1.0113 1)" font-size="15" fill="#111">High Res: 16 bits</text></g><g><text transform="translate(1655.50 1073.20) scale(0.9872 1)" font-size="15" fill="#111">Single: 1 /1</text></g><g><text transform="translate(1841.00 1018.80) scale(0.9567 1)" font-size="13" fill="#ffffff" font-weight="700">Stopped</text></g><g><text transform="translate(1821.96 1056.50) scale(1.0390 1)" font-size="14.5" fill="#111">15 May 2025</text></g><g><text transform="translate(1826.70 1073.20) scale(1.0612 1)" font-size="14.5" fill="#111">4:23:02 AM</text></g><g transform="translate(1705 60)"><path d="M5 4 H37 Q39.5 4 39.5 6.5 V38 Z" fill="#4f4f4f"/>
<circle cx="32" cy="10.5" r="4.2" fill="none" stroke="#a8a8a8" stroke-width="1.6"/>
<line x1="29" y1="13.5" x2="23.5" y2="19" stroke="#a8a8a8" stroke-width="2.2" stroke-linecap="round"/></g><g fill="#ffffff">
<path d="M1785.8 4.4 H1804 L1803 8.9 H1796.7 V25.7 H1790.2 V8.9 H1785.8 Z"/>
<path d="M1815.4 4.4 H1821.6 V17.5 L1815.4 25.7 Z"/>
<path d="M1822.6 18.5 L1826.3 14.5 L1830.6 25.7 H1824.2 Z"/>
<path d="M1831.9 9.5 L1837.8 4.6 V9.5 H1841 V13.9 H1837.8 V25.7 H1831.9 V13.9 H1830.4 Z"/>
</g><path d="M1815.2 25.7 H1820.6 L1830.6 9.5 H1825.2 Z" fill="#1cb4dc"/></svg>
</body></html>
